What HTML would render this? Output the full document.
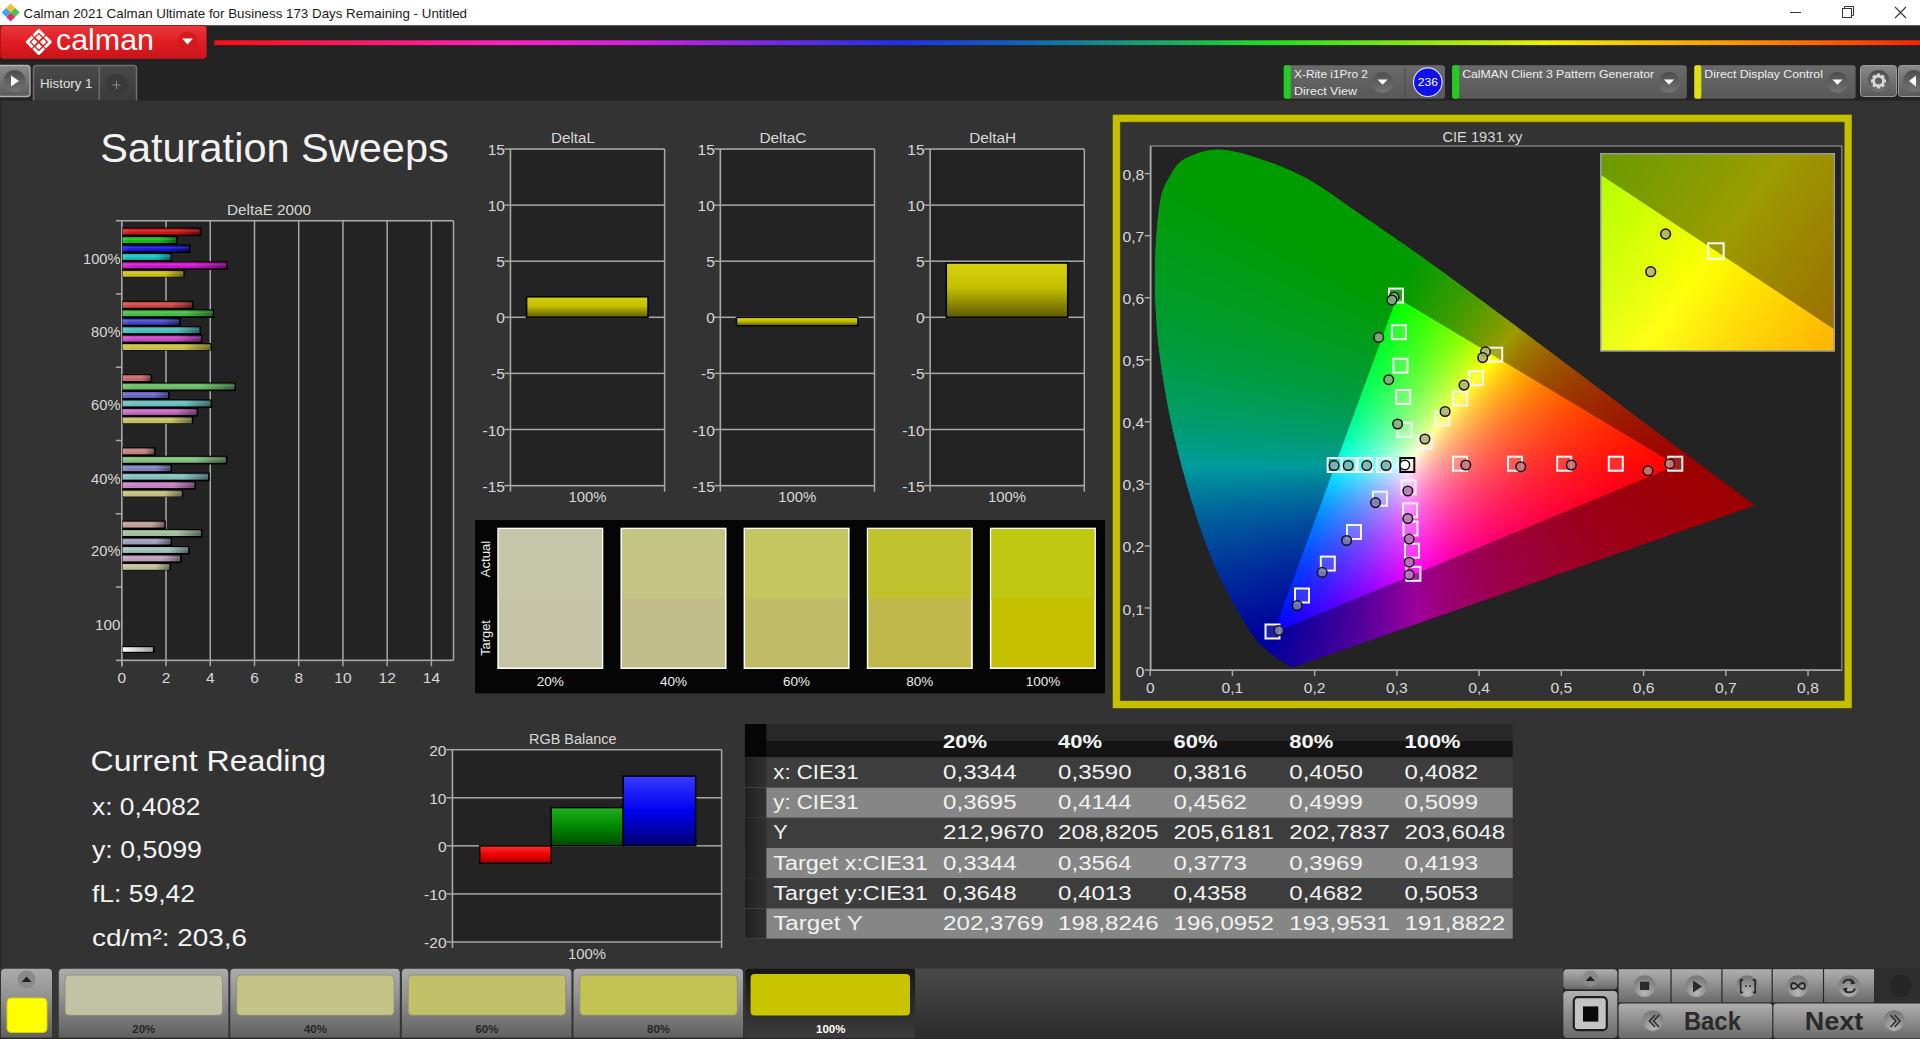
<!DOCTYPE html><html><head><meta charset="utf-8"><title>Calman</title><style>html,body{margin:0;padding:0;background:#333;}body{width:1920px;height:1039px;overflow:hidden;position:relative;font-family:"Liberation Sans",sans-serif;}svg{position:absolute;left:0;top:0;}canvas{position:absolute;}</style></head><body>
<svg width="1920" height="1039" viewBox="0 0 1920 1039" font-family="Liberation Sans, sans-serif">
<rect x="0" y="0" width="1920" height="1039" fill="#333333"/>
<rect x="0" y="0" width="1920" height="25.5" fill="#ffffff"/>
<rect x="0" y="25.5" width="1920" height="75" fill="#232323"/>
<g transform="translate(10.6,12.5)"><path d="M0,-9 L4.5,-4.5 L0,0 L-4.5,-4.5Z" fill="#f2c230"/><path d="M9,0 L4.5,4.5 L0,0 L4.5,-4.5Z" fill="#4cc04c"/><path d="M0,9 L-4.5,4.5 L0,0 L4.5,4.5Z" fill="#e0306a"/><path d="M-9,0 L-4.5,-4.5 L0,0 L-4.5,4.5Z" fill="#3aa8e8"/></g>
<text x="23.5" y="17.5" font-size="13" fill="#1a1a1a" text-anchor="start" textLength="443.5" lengthAdjust="spacingAndGlyphs">Calman 2021 Calman Ultimate for Business 173 Days Remaining  - Untitled</text>
<path d="M1790,12.5 H1801" stroke="#333" stroke-width="1"/>
<rect x="1842.5" y="8.5" width="9" height="9" fill="none" stroke="#333" stroke-width="1"/>
<path d="M1844.5,8.5 V6.5 H1853.5 V15.5 H1851.5" fill="none" stroke="#333" stroke-width="1"/>
<path d="M1895,7 L1906,18 M1906,7 L1895,18" stroke="#333" stroke-width="1.1"/>
<defs><linearGradient id="gRed" x1="0" y1="0" x2="0" y2="1"><stop offset="0" stop-color="#e8383c"/><stop offset="0.5" stop-color="#e01e22"/><stop offset="1" stop-color="#c8141a"/></linearGradient><linearGradient id="gRainbow" x1="0" y1="0" x2="1" y2="0"><stop offset="0" stop-color="#ff1010"/><stop offset="0.17" stop-color="#ff20c0"/><stop offset="0.25" stop-color="#d020e0"/><stop offset="0.40" stop-color="#2030f0"/><stop offset="0.47" stop-color="#1060c0"/><stop offset="0.62" stop-color="#20e020"/><stop offset="0.78" stop-color="#f0f000"/><stop offset="0.9" stop-color="#ff9000"/><stop offset="1" stop-color="#ff2000"/></linearGradient></defs>
<rect x="0.5" y="25.5" width="206" height="33" rx="3" fill="url(#gRed)"/>
<rect x="0.5" y="25.5" width="206" height="33" rx="3" fill="none" stroke="#b01418" stroke-width="1"/>
<g transform="translate(38.8,42)"><path d="M0,-11.5 L11.5,0 L0,11.5 L-11.5,0Z" fill="none" stroke="#ffffff" stroke-width="3" stroke-linejoin="round"/><path d="M0,-7.3 L2.9,-4.4 L0,-1.5 L-2.9,-4.4Z M0,7.3 L2.9,4.4 L0,1.5 L-2.9,4.4Z M-7.3,0 L-4.4,2.9 L-1.5,0 L-4.4,-2.9Z M7.3,0 L4.4,2.9 L1.5,0 L4.4,-2.9Z" fill="#ffffff" stroke="#ffffff" stroke-width="0.6" stroke-linejoin="round"/><path d="M-7.4,-7.4 L7.4,7.4 M7.4,-7.4 L-7.4,7.4" stroke="#d82024" stroke-width="1.3"/></g>
<text x="56" y="50" font-size="29" fill="#ffffff" textLength="98" lengthAdjust="spacingAndGlyphs">calman</text>
<circle cx="187.5" cy="41.5" r="10" fill="#d41a1e"/>
<path d="M182,38.5 H193 L187.5,44.5Z" fill="#ffffff"/>
<rect x="214.5" y="40.3" width="1706" height="4.8" fill="url(#gRainbow)"/>
<defs><linearGradient id="gBtnG" x1="0" y1="0" x2="0" y2="1"><stop offset="0" stop-color="#8a8a8a"/><stop offset="1" stop-color="#5a5a5a"/></linearGradient><linearGradient id="gTab" x1="0" y1="0" x2="0" y2="1"><stop offset="0" stop-color="#4a4a4a"/><stop offset="1" stop-color="#3a3a3a"/></linearGradient></defs>
<rect x="-3" y="65.5" width="33" height="31" rx="3" fill="url(#gBtnG)" stroke="#b0b0b0" stroke-width="1.3"/>
<circle cx="14.5" cy="81" r="11" fill="url(#gDrop)"/>
<path d="M11,75.5 L19,81 L11,86.5Z" fill="#ffffff"/>
<path d="M33.5,100.5 V68.5 Q33.5,65.5 36.5,65.5 H133.5 Q136.5,65.5 136.5,68.5 V100.5" fill="url(#gTab)" stroke="#6e6e6e" stroke-width="1.5"/>
<rect x="98.5" y="66" width="1.6" height="34" fill="#6a6a6a"/>
<text x="40" y="88" font-size="13.5" fill="#e0e0e0" text-anchor="start" textLength="52.5" lengthAdjust="spacingAndGlyphs">History 1</text>
<circle cx="116.5" cy="84.5" r="11" fill="#3a3a3a"/>
<path d="M112.5,85 H120.5 M116.5,81 V89" stroke="#888" stroke-width="1"/>
<defs><linearGradient id="gDev" x1="0" y1="0" x2="0" y2="1"><stop offset="0" stop-color="#6a6a6a"/><stop offset="1" stop-color="#585858"/></linearGradient><linearGradient id="gDrop" x1="0" y1="0" x2="0" y2="1"><stop offset="0" stop-color="#4c4c4c"/><stop offset="1" stop-color="#747474"/></linearGradient></defs>
<rect x="1283.8" y="65.3" width="161.20000000000005" height="33.5" rx="3" fill="url(#gDev)"/>
<rect x="1283.8" y="65.3" width="7" height="33.5" rx="2" fill="#22cc22"/>
<text x="1294" y="78.2" font-size="11" fill="#eeeeee" text-anchor="start" textLength="74" lengthAdjust="spacingAndGlyphs">X-Rite i1Pro 2</text>
<text x="1294" y="94.5" font-size="11" fill="#eeeeee" text-anchor="start" textLength="63" lengthAdjust="spacingAndGlyphs">Direct View</text>
<rect x="1404.5" y="68" width="1" height="30" fill="#4a4a4a"/>
<circle cx="1382.6" cy="82.5" r="10.5" fill="url(#gDrop)"/>
<path d="M1377.5,79.5 H1387.7 L1382.6,84.8Z" fill="#ffffff"/>
<circle cx="1427.8" cy="82.2" r="14.3" fill="#1010e8" stroke="#d8d8ff" stroke-width="1.2"/>
<text x="1427.8" y="86.2" font-size="11.5" fill="#ffffff" text-anchor="middle" textLength="20" lengthAdjust="spacingAndGlyphs">236</text>
<rect x="1452.2" y="65.3" width="234.5999999999999" height="33.5" rx="3" fill="url(#gDev)"/>
<rect x="1452.2" y="65.3" width="7" height="33.5" rx="2" fill="#22cc22"/>
<text x="1462.2" y="78.2" font-size="11" fill="#eeeeee" text-anchor="start" textLength="192" lengthAdjust="spacingAndGlyphs">CalMAN Client 3 Pattern Generator</text>
<circle cx="1669" cy="82.5" r="10.5" fill="url(#gDrop)"/>
<path d="M1663.9,79.5 H1674.1 L1669,84.8Z" fill="#ffffff"/>
<rect x="1694.3" y="65.3" width="161.29999999999995" height="33.5" rx="3" fill="url(#gDev)"/>
<rect x="1694.3" y="65.3" width="7" height="33.5" rx="2" fill="#e0e010"/>
<text x="1704.3" y="78.2" font-size="11" fill="#eeeeee" text-anchor="start" textLength="118.6" lengthAdjust="spacingAndGlyphs">Direct Display Control</text>
<circle cx="1837.5" cy="82.5" r="10.5" fill="url(#gDrop)"/>
<path d="M1832.4,79.5 H1842.6 L1837.5,84.8Z" fill="#ffffff"/>
<rect x="1860.5" y="65.5" width="36" height="31" rx="3" fill="url(#gBtnG)" stroke="#9a9a9a" stroke-width="1"/>
<circle cx="1878.5" cy="81" r="11" fill="url(#gDrop)"/>
<g transform="translate(1878.5,81)" fill="#d8d8d8"><rect x="-1.6" y="-7.5" width="3.2" height="4" transform="rotate(0)"/><rect x="-1.6" y="-7.5" width="3.2" height="4" transform="rotate(45)"/><rect x="-1.6" y="-7.5" width="3.2" height="4" transform="rotate(90)"/><rect x="-1.6" y="-7.5" width="3.2" height="4" transform="rotate(135)"/><rect x="-1.6" y="-7.5" width="3.2" height="4" transform="rotate(180)"/><rect x="-1.6" y="-7.5" width="3.2" height="4" transform="rotate(225)"/><rect x="-1.6" y="-7.5" width="3.2" height="4" transform="rotate(270)"/><rect x="-1.6" y="-7.5" width="3.2" height="4" transform="rotate(315)"/><circle r="5" fill="none" stroke="#d8d8d8" stroke-width="2.5"/></g>
<rect x="1898.5" y="65.5" width="30" height="31" rx="3" fill="url(#gBtnG)" stroke="#9a9a9a" stroke-width="1"/>
<circle cx="1914" cy="81" r="11" fill="url(#gDrop)"/>
<path d="M1916,75.5 L1909,81 L1916,86.5Z" fill="#ffffff"/>
<rect x="0" y="100.5" width="1.5" height="868" fill="#262626"/>
<text x="100.3" y="162.2" font-size="41" fill="#f2f2f2" text-anchor="start" textLength="348.5" lengthAdjust="spacingAndGlyphs">Saturation Sweeps</text>
<rect x="121.8" y="220.7" width="331.7" height="439.59999999999997" fill="#232323"/>
<rect x="165.28" y="220.7" width="1.5" height="439.59999999999997" fill="#a8a8a8"/>
<rect x="209.50" y="220.7" width="1.5" height="439.59999999999997" fill="#a8a8a8"/>
<rect x="253.73" y="220.7" width="1.5" height="439.59999999999997" fill="#a8a8a8"/>
<rect x="297.96" y="220.7" width="1.5" height="439.59999999999997" fill="#a8a8a8"/>
<rect x="342.18" y="220.7" width="1.5" height="439.59999999999997" fill="#a8a8a8"/>
<rect x="386.41" y="220.7" width="1.5" height="439.59999999999997" fill="#a8a8a8"/>
<rect x="430.64" y="220.7" width="1.5" height="439.59999999999997" fill="#a8a8a8"/>
<rect x="121.05" y="220.7" width="1.6" height="445.59999999999997" fill="#a8a8a8"/>
<rect x="452.75" y="220.7" width="1.5" height="439.59999999999997" fill="#a8a8a8"/>
<rect x="115.8" y="219.95" width="337.7" height="1.6" fill="#a8a8a8"/>
<rect x="115.8" y="659.55" width="337.7" height="1.6" fill="#a8a8a8"/>
<rect x="115.8" y="293.22" width="6" height="1.5" fill="#a8a8a8"/>
<rect x="115.8" y="366.48" width="6" height="1.5" fill="#a8a8a8"/>
<rect x="115.8" y="439.75" width="6" height="1.5" fill="#a8a8a8"/>
<rect x="115.8" y="513.02" width="6" height="1.5" fill="#a8a8a8"/>
<rect x="115.8" y="586.28" width="6" height="1.5" fill="#a8a8a8"/>
<rect x="121.05" y="660.3" width="1.5" height="6" fill="#a8a8a8"/>
<text x="121.8" y="683.4" font-size="15.5" fill="#d8d8d8" text-anchor="middle">0</text>
<rect x="165.28" y="660.3" width="1.5" height="6" fill="#a8a8a8"/>
<text x="166.0" y="683.4" font-size="15.5" fill="#d8d8d8" text-anchor="middle">2</text>
<rect x="209.50" y="660.3" width="1.5" height="6" fill="#a8a8a8"/>
<text x="210.3" y="683.4" font-size="15.5" fill="#d8d8d8" text-anchor="middle">4</text>
<rect x="253.73" y="660.3" width="1.5" height="6" fill="#a8a8a8"/>
<text x="254.5" y="683.4" font-size="15.5" fill="#d8d8d8" text-anchor="middle">6</text>
<rect x="297.96" y="660.3" width="1.5" height="6" fill="#a8a8a8"/>
<text x="298.7" y="683.4" font-size="15.5" fill="#d8d8d8" text-anchor="middle">8</text>
<rect x="342.18" y="660.3" width="1.5" height="6" fill="#a8a8a8"/>
<text x="342.9" y="683.4" font-size="15.5" fill="#d8d8d8" text-anchor="middle">10</text>
<rect x="386.41" y="660.3" width="1.5" height="6" fill="#a8a8a8"/>
<text x="387.2" y="683.4" font-size="15.5" fill="#d8d8d8" text-anchor="middle">12</text>
<rect x="430.64" y="660.3" width="1.5" height="6" fill="#a8a8a8"/>
<text x="431.4" y="683.4" font-size="15.5" fill="#d8d8d8" text-anchor="middle">14</text>
<text x="269" y="215" font-size="15" fill="#d8d8d8" text-anchor="middle" textLength="84" lengthAdjust="spacingAndGlyphs">DeltaE 2000</text>
<text x="120.5" y="263.75" font-size="15.5" fill="#d8d8d8" text-anchor="end" textLength="37.5" lengthAdjust="spacingAndGlyphs">100%</text>
<text x="120.5" y="336.5" font-size="15.5" fill="#d8d8d8" text-anchor="end" textLength="29.4" lengthAdjust="spacingAndGlyphs">80%</text>
<text x="120.5" y="409.9" font-size="15.5" fill="#d8d8d8" text-anchor="end" textLength="29.4" lengthAdjust="spacingAndGlyphs">60%</text>
<text x="120.5" y="483.8" font-size="15.5" fill="#d8d8d8" text-anchor="end" textLength="29.4" lengthAdjust="spacingAndGlyphs">40%</text>
<text x="120.5" y="555.6" font-size="15.5" fill="#d8d8d8" text-anchor="end" textLength="29.4" lengthAdjust="spacingAndGlyphs">20%</text>
<text x="120.5" y="630.3" font-size="15.5" fill="#d8d8d8" text-anchor="end" textLength="25.4" lengthAdjust="spacingAndGlyphs">100</text>
<defs><linearGradient id="b1" x1="0" y1="0" x2="1" y2="0"><stop offset="0" stop-color="rgb(208, 45, 45)"/><stop offset="0.12" stop-color="rgb(205, 20, 20)"/><stop offset="0.7" stop-color="rgb(205, 20, 20)"/><stop offset="1" stop-color="rgb(112, 11, 11)"/></linearGradient><linearGradient id="b2" x1="0" y1="0" x2="1" y2="0"><stop offset="0" stop-color="rgb(45, 190, 45)"/><stop offset="0.12" stop-color="rgb(20, 185, 20)"/><stop offset="0.7" stop-color="rgb(20, 185, 20)"/><stop offset="1" stop-color="rgb(11, 101, 11)"/></linearGradient><linearGradient id="b3" x1="0" y1="0" x2="1" y2="0"><stop offset="0" stop-color="rgb(45, 45, 208)"/><stop offset="0.12" stop-color="rgb(20, 20, 205)"/><stop offset="0.7" stop-color="rgb(20, 20, 205)"/><stop offset="1" stop-color="rgb(11, 11, 112)"/></linearGradient><linearGradient id="b4" x1="0" y1="0" x2="1" y2="0"><stop offset="0" stop-color="rgb(45, 195, 195)"/><stop offset="0.12" stop-color="rgb(20, 190, 190)"/><stop offset="0.7" stop-color="rgb(20, 190, 190)"/><stop offset="1" stop-color="rgb(11, 104, 104)"/></linearGradient><linearGradient id="b5" x1="0" y1="0" x2="1" y2="0"><stop offset="0" stop-color="rgb(204, 45, 204)"/><stop offset="0.12" stop-color="rgb(200, 20, 200)"/><stop offset="0.7" stop-color="rgb(200, 20, 200)"/><stop offset="1" stop-color="rgb(110, 11, 110)"/></linearGradient><linearGradient id="b6" x1="0" y1="0" x2="1" y2="0"><stop offset="0" stop-color="rgb(204, 195, 45)"/><stop offset="0.12" stop-color="rgb(200, 190, 20)"/><stop offset="0.7" stop-color="rgb(200, 190, 20)"/><stop offset="1" stop-color="rgb(110, 104, 11)"/></linearGradient><linearGradient id="b7" x1="0" y1="0" x2="1" y2="0"><stop offset="0" stop-color="rgb(204, 87, 86)"/><stop offset="0.12" stop-color="rgb(201, 68, 66)"/><stop offset="0.7" stop-color="rgb(201, 68, 66)"/><stop offset="1" stop-color="rgb(110, 37, 36)"/></linearGradient><linearGradient id="b8" x1="0" y1="0" x2="1" y2="0"><stop offset="0" stop-color="rgb(87, 191, 86)"/><stop offset="0.12" stop-color="rgb(68, 186, 66)"/><stop offset="0.7" stop-color="rgb(68, 186, 66)"/><stop offset="1" stop-color="rgb(37, 102, 36)"/></linearGradient><linearGradient id="b9" x1="0" y1="0" x2="1" y2="0"><stop offset="0" stop-color="rgb(87, 87, 203)"/><stop offset="0.12" stop-color="rgb(68, 68, 199)"/><stop offset="0.7" stop-color="rgb(68, 68, 199)"/><stop offset="1" stop-color="rgb(37, 37, 109)"/></linearGradient><linearGradient id="b10" x1="0" y1="0" x2="1" y2="0"><stop offset="0" stop-color="rgb(87, 195, 193)"/><stop offset="0.12" stop-color="rgb(68, 190, 188)"/><stop offset="0.7" stop-color="rgb(68, 190, 188)"/><stop offset="1" stop-color="rgb(37, 104, 103)"/></linearGradient><linearGradient id="b11" x1="0" y1="0" x2="1" y2="0"><stop offset="0" stop-color="rgb(201, 87, 200)"/><stop offset="0.12" stop-color="rgb(197, 68, 196)"/><stop offset="0.7" stop-color="rgb(197, 68, 196)"/><stop offset="1" stop-color="rgb(108, 37, 107)"/></linearGradient><linearGradient id="b12" x1="0" y1="0" x2="1" y2="0"><stop offset="0" stop-color="rgb(201, 195, 86)"/><stop offset="0.12" stop-color="rgb(197, 190, 66)"/><stop offset="0.7" stop-color="rgb(197, 190, 66)"/><stop offset="1" stop-color="rgb(108, 104, 36)"/></linearGradient><linearGradient id="b13" x1="0" y1="0" x2="1" y2="0"><stop offset="0" stop-color="rgb(202, 117, 115)"/><stop offset="0.12" stop-color="rgb(198, 102, 99)"/><stop offset="0.7" stop-color="rgb(198, 102, 99)"/><stop offset="1" stop-color="rgb(108, 56, 54)"/></linearGradient><linearGradient id="b14" x1="0" y1="0" x2="1" y2="0"><stop offset="0" stop-color="rgb(117, 192, 115)"/><stop offset="0.12" stop-color="rgb(102, 187, 99)"/><stop offset="0.7" stop-color="rgb(102, 187, 99)"/><stop offset="1" stop-color="rgb(56, 102, 54)"/></linearGradient><linearGradient id="b15" x1="0" y1="0" x2="1" y2="0"><stop offset="0" stop-color="rgb(117, 117, 199)"/><stop offset="0.12" stop-color="rgb(102, 102, 195)"/><stop offset="0.7" stop-color="rgb(102, 102, 195)"/><stop offset="1" stop-color="rgb(56, 56, 107)"/></linearGradient><linearGradient id="b16" x1="0" y1="0" x2="1" y2="0"><stop offset="0" stop-color="rgb(117, 195, 192)"/><stop offset="0.12" stop-color="rgb(102, 190, 187)"/><stop offset="0.7" stop-color="rgb(102, 190, 187)"/><stop offset="1" stop-color="rgb(56, 104, 102)"/></linearGradient><linearGradient id="b17" x1="0" y1="0" x2="1" y2="0"><stop offset="0" stop-color="rgb(199, 117, 196)"/><stop offset="0.12" stop-color="rgb(195, 102, 192)"/><stop offset="0.7" stop-color="rgb(195, 102, 192)"/><stop offset="1" stop-color="rgb(107, 56, 105)"/></linearGradient><linearGradient id="b18" x1="0" y1="0" x2="1" y2="0"><stop offset="0" stop-color="rgb(199, 195, 115)"/><stop offset="0.12" stop-color="rgb(195, 190, 99)"/><stop offset="0.7" stop-color="rgb(195, 190, 99)"/><stop offset="1" stop-color="rgb(107, 104, 54)"/></linearGradient><linearGradient id="b19" x1="0" y1="0" x2="1" y2="0"><stop offset="0" stop-color="rgb(199, 141, 138)"/><stop offset="0.12" stop-color="rgb(195, 129, 125)"/><stop offset="0.7" stop-color="rgb(195, 129, 125)"/><stop offset="1" stop-color="rgb(107, 70, 68)"/></linearGradient><linearGradient id="b20" x1="0" y1="0" x2="1" y2="0"><stop offset="0" stop-color="rgb(141, 193, 138)"/><stop offset="0.12" stop-color="rgb(129, 188, 125)"/><stop offset="0.7" stop-color="rgb(129, 188, 125)"/><stop offset="1" stop-color="rgb(70, 103, 68)"/></linearGradient><linearGradient id="b21" x1="0" y1="0" x2="1" y2="0"><stop offset="0" stop-color="rgb(141, 141, 196)"/><stop offset="0.12" stop-color="rgb(129, 129, 192)"/><stop offset="0.7" stop-color="rgb(129, 129, 192)"/><stop offset="1" stop-color="rgb(70, 70, 105)"/></linearGradient><linearGradient id="b22" x1="0" y1="0" x2="1" y2="0"><stop offset="0" stop-color="rgb(141, 195, 191)"/><stop offset="0.12" stop-color="rgb(129, 190, 186)"/><stop offset="0.7" stop-color="rgb(129, 190, 186)"/><stop offset="1" stop-color="rgb(70, 104, 102)"/></linearGradient><linearGradient id="b23" x1="0" y1="0" x2="1" y2="0"><stop offset="0" stop-color="rgb(198, 141, 195)"/><stop offset="0.12" stop-color="rgb(194, 129, 190)"/><stop offset="0.7" stop-color="rgb(194, 129, 190)"/><stop offset="1" stop-color="rgb(106, 70, 104)"/></linearGradient><linearGradient id="b24" x1="0" y1="0" x2="1" y2="0"><stop offset="0" stop-color="rgb(198, 195, 138)"/><stop offset="0.12" stop-color="rgb(194, 190, 125)"/><stop offset="0.7" stop-color="rgb(194, 190, 125)"/><stop offset="1" stop-color="rgb(106, 104, 68)"/></linearGradient><linearGradient id="b25" x1="0" y1="0" x2="1" y2="0"><stop offset="0" stop-color="rgb(197, 165, 160)"/><stop offset="0.12" stop-color="rgb(193, 156, 151)"/><stop offset="0.7" stop-color="rgb(193, 156, 151)"/><stop offset="1" stop-color="rgb(106, 85, 83)"/></linearGradient><linearGradient id="b26" x1="0" y1="0" x2="1" y2="0"><stop offset="0" stop-color="rgb(165, 194, 160)"/><stop offset="0.12" stop-color="rgb(156, 189, 151)"/><stop offset="0.7" stop-color="rgb(156, 189, 151)"/><stop offset="1" stop-color="rgb(85, 103, 83)"/></linearGradient><linearGradient id="b27" x1="0" y1="0" x2="1" y2="0"><stop offset="0" stop-color="rgb(165, 165, 193)"/><stop offset="0.12" stop-color="rgb(156, 156, 188)"/><stop offset="0.7" stop-color="rgb(156, 156, 188)"/><stop offset="1" stop-color="rgb(85, 85, 103)"/></linearGradient><linearGradient id="b28" x1="0" y1="0" x2="1" y2="0"><stop offset="0" stop-color="rgb(165, 195, 190)"/><stop offset="0.12" stop-color="rgb(156, 190, 185)"/><stop offset="0.7" stop-color="rgb(156, 190, 185)"/><stop offset="1" stop-color="rgb(85, 104, 101)"/></linearGradient><linearGradient id="b29" x1="0" y1="0" x2="1" y2="0"><stop offset="0" stop-color="rgb(196, 165, 192)"/><stop offset="0.12" stop-color="rgb(192, 156, 187)"/><stop offset="0.7" stop-color="rgb(192, 156, 187)"/><stop offset="1" stop-color="rgb(105, 85, 102)"/></linearGradient><linearGradient id="b30" x1="0" y1="0" x2="1" y2="0"><stop offset="0" stop-color="rgb(196, 195, 160)"/><stop offset="0.12" stop-color="rgb(192, 190, 151)"/><stop offset="0.7" stop-color="rgb(192, 190, 151)"/><stop offset="1" stop-color="rgb(105, 104, 83)"/></linearGradient><linearGradient id="bW" x1="0" y1="0" x2="1" y2="0"><stop offset="0" stop-color="#ffffff"/><stop offset="1" stop-color="#a0a0a0"/></linearGradient></defs>
<rect x="122.30" y="227.50" width="78.94" height="8.7" fill="#000"/><rect x="122.60" y="228.60" width="77.14" height="5.9" fill="url(#b1)"/><rect x="122.60" y="229.80" width="77.14" height="1.8" fill="#ffffff" opacity="0.14"/><rect x="122.30" y="235.95" width="55.06" height="8.7" fill="#000"/><rect x="122.60" y="237.05" width="53.26" height="5.9" fill="url(#b2)"/><rect x="122.60" y="238.25" width="53.26" height="1.8" fill="#ffffff" opacity="0.14"/><rect x="122.30" y="244.40" width="68.11" height="8.7" fill="#000"/><rect x="122.60" y="245.50" width="66.31" height="5.9" fill="url(#b3)"/><rect x="122.60" y="246.70" width="66.31" height="1.8" fill="#ffffff" opacity="0.14"/><rect x="122.30" y="252.85" width="49.76" height="8.7" fill="#000"/><rect x="122.60" y="253.95" width="47.96" height="5.9" fill="url(#b4)"/><rect x="122.60" y="255.15" width="47.96" height="1.8" fill="#ffffff" opacity="0.14"/><rect x="122.30" y="261.30" width="105.48" height="8.7" fill="#000"/><rect x="122.60" y="262.40" width="103.68" height="5.9" fill="url(#b5)"/><rect x="122.60" y="263.60" width="103.68" height="1.8" fill="#ffffff" opacity="0.14"/><rect x="122.30" y="269.75" width="62.58" height="7.5" fill="#000"/><rect x="122.60" y="270.85" width="60.78" height="5.9" fill="url(#b6)"/><rect x="122.60" y="272.05" width="60.78" height="1.8" fill="#ffffff" opacity="0.14"/><rect x="122.30" y="300.77" width="70.98" height="8.7" fill="#000"/><rect x="122.60" y="301.87" width="69.18" height="5.9" fill="url(#b7)"/><rect x="122.60" y="303.07" width="69.18" height="1.8" fill="#ffffff" opacity="0.14"/><rect x="122.30" y="309.22" width="91.77" height="8.7" fill="#000"/><rect x="122.60" y="310.32" width="89.97" height="5.9" fill="url(#b8)"/><rect x="122.60" y="311.52" width="89.97" height="1.8" fill="#ffffff" opacity="0.14"/><rect x="122.30" y="317.67" width="58.38" height="8.7" fill="#000"/><rect x="122.60" y="318.77" width="56.58" height="5.9" fill="url(#b9)"/><rect x="122.60" y="319.97" width="56.58" height="1.8" fill="#ffffff" opacity="0.14"/><rect x="122.30" y="326.12" width="78.72" height="8.7" fill="#000"/><rect x="122.60" y="327.22" width="76.92" height="5.9" fill="url(#b10)"/><rect x="122.60" y="328.42" width="76.92" height="1.8" fill="#ffffff" opacity="0.14"/><rect x="122.30" y="334.57" width="80.05" height="8.7" fill="#000"/><rect x="122.60" y="335.67" width="78.25" height="5.9" fill="url(#b11)"/><rect x="122.60" y="336.87" width="78.25" height="1.8" fill="#ffffff" opacity="0.14"/><rect x="122.30" y="343.02" width="89.78" height="7.5" fill="#000"/><rect x="122.60" y="344.12" width="87.98" height="5.9" fill="url(#b12)"/><rect x="122.60" y="345.32" width="87.98" height="1.8" fill="#ffffff" opacity="0.14"/><rect x="122.30" y="374.03" width="29.85" height="8.7" fill="#000"/><rect x="122.60" y="375.13" width="28.05" height="5.9" fill="url(#b13)"/><rect x="122.60" y="376.33" width="28.05" height="1.8" fill="#ffffff" opacity="0.14"/><rect x="122.30" y="382.48" width="113.66" height="8.7" fill="#000"/><rect x="122.60" y="383.58" width="111.86" height="5.9" fill="url(#b14)"/><rect x="122.60" y="384.78" width="111.86" height="1.8" fill="#ffffff" opacity="0.14"/><rect x="122.30" y="390.93" width="47.32" height="8.7" fill="#000"/><rect x="122.60" y="392.03" width="45.52" height="5.9" fill="url(#b15)"/><rect x="122.60" y="393.23" width="45.52" height="1.8" fill="#ffffff" opacity="0.14"/><rect x="122.30" y="399.38" width="89.78" height="8.7" fill="#000"/><rect x="122.60" y="400.48" width="87.98" height="5.9" fill="url(#b16)"/><rect x="122.60" y="401.68" width="87.98" height="1.8" fill="#ffffff" opacity="0.14"/><rect x="122.30" y="407.83" width="75.85" height="8.7" fill="#000"/><rect x="122.60" y="408.93" width="74.05" height="5.9" fill="url(#b17)"/><rect x="122.60" y="410.13" width="74.05" height="1.8" fill="#ffffff" opacity="0.14"/><rect x="122.30" y="416.28" width="70.98" height="7.5" fill="#000"/><rect x="122.60" y="417.38" width="69.18" height="5.9" fill="url(#b18)"/><rect x="122.60" y="418.58" width="69.18" height="1.8" fill="#ffffff" opacity="0.14"/><rect x="122.30" y="447.30" width="33.17" height="8.7" fill="#000"/><rect x="122.60" y="448.40" width="31.37" height="5.9" fill="url(#b19)"/><rect x="122.60" y="449.60" width="31.37" height="1.8" fill="#ffffff" opacity="0.14"/><rect x="122.30" y="455.75" width="105.04" height="8.7" fill="#000"/><rect x="122.60" y="456.85" width="103.24" height="5.9" fill="url(#b20)"/><rect x="122.60" y="458.05" width="103.24" height="1.8" fill="#ffffff" opacity="0.14"/><rect x="122.30" y="464.20" width="49.76" height="8.7" fill="#000"/><rect x="122.60" y="465.30" width="47.96" height="5.9" fill="url(#b21)"/><rect x="122.60" y="466.50" width="47.96" height="1.8" fill="#ffffff" opacity="0.14"/><rect x="122.30" y="472.65" width="87.35" height="8.7" fill="#000"/><rect x="122.60" y="473.75" width="85.55" height="5.9" fill="url(#b22)"/><rect x="122.60" y="474.95" width="85.55" height="1.8" fill="#ffffff" opacity="0.14"/><rect x="122.30" y="481.10" width="73.64" height="8.7" fill="#000"/><rect x="122.60" y="482.20" width="71.84" height="5.9" fill="url(#b23)"/><rect x="122.60" y="483.40" width="71.84" height="1.8" fill="#ffffff" opacity="0.14"/><rect x="122.30" y="489.55" width="61.03" height="7.5" fill="#000"/><rect x="122.60" y="490.65" width="59.23" height="5.9" fill="url(#b24)"/><rect x="122.60" y="491.85" width="59.23" height="1.8" fill="#ffffff" opacity="0.14"/><rect x="122.30" y="520.57" width="43.56" height="8.7" fill="#000"/><rect x="122.60" y="521.67" width="41.76" height="5.9" fill="url(#b25)"/><rect x="122.60" y="522.87" width="41.76" height="1.8" fill="#ffffff" opacity="0.14"/><rect x="122.30" y="529.02" width="80.05" height="8.7" fill="#000"/><rect x="122.60" y="530.12" width="78.25" height="5.9" fill="url(#b26)"/><rect x="122.60" y="531.32" width="78.25" height="1.8" fill="#ffffff" opacity="0.14"/><rect x="122.30" y="537.47" width="49.76" height="8.7" fill="#000"/><rect x="122.60" y="538.57" width="47.96" height="5.9" fill="url(#b27)"/><rect x="122.60" y="539.77" width="47.96" height="1.8" fill="#ffffff" opacity="0.14"/><rect x="122.30" y="545.92" width="67.45" height="8.7" fill="#000"/><rect x="122.60" y="547.02" width="65.65" height="5.9" fill="url(#b28)"/><rect x="122.60" y="548.22" width="65.65" height="1.8" fill="#ffffff" opacity="0.14"/><rect x="122.30" y="554.37" width="59.26" height="8.7" fill="#000"/><rect x="122.60" y="555.47" width="57.46" height="5.9" fill="url(#b29)"/><rect x="122.60" y="556.67" width="57.46" height="1.8" fill="#ffffff" opacity="0.14"/><rect x="122.30" y="562.82" width="48.65" height="7.5" fill="#000"/><rect x="122.60" y="563.92" width="46.85" height="5.9" fill="url(#b30)"/><rect x="122.60" y="565.12" width="46.85" height="1.8" fill="#ffffff" opacity="0.14"/>
<rect x="122.3" y="646" width="32.29" height="7" fill="#000"/>
<rect x="122.6" y="647.2" width="30.29" height="4.6" fill="url(#bW)"/>
<defs><linearGradient id="gYel" x1="0" y1="0" x2="0" y2="1"><stop offset="0" stop-color="#d6d20e"/><stop offset="0.45" stop-color="#c4c000"/><stop offset="1" stop-color="#5e5a00"/></linearGradient><linearGradient id="gYel2" x1="0" y1="0" x2="0" y2="1"><stop offset="0" stop-color="#d6d20e"/><stop offset="0.6" stop-color="#c4c000"/><stop offset="1" stop-color="#8a8600"/></linearGradient></defs>
<rect x="510.4" y="149.0" width="154.19999999999993" height="336.6" fill="#232323"/>
<rect x="504.4" y="428.75" width="160.19999999999993" height="1.5" fill="#a8a8a8"/>
<rect x="504.4" y="372.65" width="160.19999999999993" height="1.5" fill="#a8a8a8"/>
<rect x="504.4" y="316.55" width="160.19999999999993" height="1.5" fill="#a8a8a8"/>
<rect x="504.4" y="260.45" width="160.19999999999993" height="1.5" fill="#a8a8a8"/>
<rect x="504.4" y="204.35" width="160.19999999999993" height="1.5" fill="#a8a8a8"/>
<rect x="504.4" y="148.25" width="160.19999999999993" height="1.6" fill="#a8a8a8"/>
<rect x="504.4" y="484.85" width="160.19999999999993" height="1.6" fill="#a8a8a8"/>
<rect x="509.65" y="149.0" width="1.6" height="342.6" fill="#a8a8a8"/>
<rect x="663.8499999999999" y="149.0" width="1.5" height="342.6" fill="#a8a8a8"/>
<text x="504.9" y="155.0" font-size="15.5" fill="#d8d8d8" text-anchor="end">15</text>
<text x="504.9" y="211.1" font-size="15.5" fill="#d8d8d8" text-anchor="end">10</text>
<text x="504.9" y="267.2" font-size="15.5" fill="#d8d8d8" text-anchor="end">5</text>
<text x="504.9" y="323.3" font-size="15.5" fill="#d8d8d8" text-anchor="end">0</text>
<text x="504.9" y="379.4" font-size="15.5" fill="#d8d8d8" text-anchor="end">-5</text>
<text x="504.9" y="435.5" font-size="15.5" fill="#d8d8d8" text-anchor="end">-10</text>
<text x="504.9" y="491.6" font-size="15.5" fill="#d8d8d8" text-anchor="end">-15</text>
<text x="573.0" y="143.1" font-size="15.5" fill="#d8d8d8" text-anchor="middle" textLength="44" lengthAdjust="spacingAndGlyphs">DeltaL</text>
<text x="587.4" y="502.4" font-size="15.5" fill="#d8d8d8" text-anchor="middle" textLength="38" lengthAdjust="spacingAndGlyphs">100%</text>
<rect x="526.6" y="296.8" width="121.4" height="20.5" fill="url(#gYel)" stroke="#000" stroke-width="1.5"/>
<rect x="720.3" y="149.0" width="154.20000000000005" height="336.6" fill="#232323"/>
<rect x="714.3" y="428.75" width="160.20000000000005" height="1.5" fill="#a8a8a8"/>
<rect x="714.3" y="372.65" width="160.20000000000005" height="1.5" fill="#a8a8a8"/>
<rect x="714.3" y="316.55" width="160.20000000000005" height="1.5" fill="#a8a8a8"/>
<rect x="714.3" y="260.45" width="160.20000000000005" height="1.5" fill="#a8a8a8"/>
<rect x="714.3" y="204.35" width="160.20000000000005" height="1.5" fill="#a8a8a8"/>
<rect x="714.3" y="148.25" width="160.20000000000005" height="1.6" fill="#a8a8a8"/>
<rect x="714.3" y="484.85" width="160.20000000000005" height="1.6" fill="#a8a8a8"/>
<rect x="719.55" y="149.0" width="1.6" height="342.6" fill="#a8a8a8"/>
<rect x="873.75" y="149.0" width="1.5" height="342.6" fill="#a8a8a8"/>
<text x="714.8" y="155.0" font-size="15.5" fill="#d8d8d8" text-anchor="end">15</text>
<text x="714.8" y="211.1" font-size="15.5" fill="#d8d8d8" text-anchor="end">10</text>
<text x="714.8" y="267.2" font-size="15.5" fill="#d8d8d8" text-anchor="end">5</text>
<text x="714.8" y="323.3" font-size="15.5" fill="#d8d8d8" text-anchor="end">0</text>
<text x="714.8" y="379.4" font-size="15.5" fill="#d8d8d8" text-anchor="end">-5</text>
<text x="714.8" y="435.5" font-size="15.5" fill="#d8d8d8" text-anchor="end">-10</text>
<text x="714.8" y="491.6" font-size="15.5" fill="#d8d8d8" text-anchor="end">-15</text>
<text x="782.9" y="143.1" font-size="15.5" fill="#d8d8d8" text-anchor="middle" textLength="47" lengthAdjust="spacingAndGlyphs">DeltaC</text>
<text x="797.3" y="502.4" font-size="15.5" fill="#d8d8d8" text-anchor="middle" textLength="38" lengthAdjust="spacingAndGlyphs">100%</text>
<rect x="736.5" y="317.3" width="121.4" height="8.4" fill="url(#gYel)" stroke="#000" stroke-width="1.5"/>
<rect x="930.1" y="149.0" width="154.19999999999993" height="336.6" fill="#232323"/>
<rect x="924.1" y="428.75" width="160.19999999999993" height="1.5" fill="#a8a8a8"/>
<rect x="924.1" y="372.65" width="160.19999999999993" height="1.5" fill="#a8a8a8"/>
<rect x="924.1" y="316.55" width="160.19999999999993" height="1.5" fill="#a8a8a8"/>
<rect x="924.1" y="260.45" width="160.19999999999993" height="1.5" fill="#a8a8a8"/>
<rect x="924.1" y="204.35" width="160.19999999999993" height="1.5" fill="#a8a8a8"/>
<rect x="924.1" y="148.25" width="160.19999999999993" height="1.6" fill="#a8a8a8"/>
<rect x="924.1" y="484.85" width="160.19999999999993" height="1.6" fill="#a8a8a8"/>
<rect x="929.35" y="149.0" width="1.6" height="342.6" fill="#a8a8a8"/>
<rect x="1083.55" y="149.0" width="1.5" height="342.6" fill="#a8a8a8"/>
<text x="924.6" y="155.0" font-size="15.5" fill="#d8d8d8" text-anchor="end">15</text>
<text x="924.6" y="211.1" font-size="15.5" fill="#d8d8d8" text-anchor="end">10</text>
<text x="924.6" y="267.2" font-size="15.5" fill="#d8d8d8" text-anchor="end">5</text>
<text x="924.6" y="323.3" font-size="15.5" fill="#d8d8d8" text-anchor="end">0</text>
<text x="924.6" y="379.4" font-size="15.5" fill="#d8d8d8" text-anchor="end">-5</text>
<text x="924.6" y="435.5" font-size="15.5" fill="#d8d8d8" text-anchor="end">-10</text>
<text x="924.6" y="491.6" font-size="15.5" fill="#d8d8d8" text-anchor="end">-15</text>
<text x="992.7" y="143.1" font-size="15.5" fill="#d8d8d8" text-anchor="middle" textLength="47" lengthAdjust="spacingAndGlyphs">DeltaH</text>
<text x="1007.1" y="502.4" font-size="15.5" fill="#d8d8d8" text-anchor="middle" textLength="38" lengthAdjust="spacingAndGlyphs">100%</text>
<rect x="946.3" y="263.0" width="121.4" height="54.3" fill="url(#gYel)" stroke="#000" stroke-width="1.5"/>
<rect x="475" y="520" width="630" height="173.3" fill="#050505"/>
<rect x="497.3" y="527.7" width="106" height="141.3" fill="#ffffff"/>
<rect x="498.8" y="529.2" width="103" height="138.3" fill="#c4c3a6"/>
<rect x="498.8" y="529.2" width="103" height="69.1" fill="#c5c6a8"/>
<text x="550.3" y="685.7" font-size="13.5" fill="#f0f0f0" text-anchor="middle">20%</text>
<rect x="620.5" y="527.7" width="106" height="141.3" fill="#ffffff"/>
<rect x="622.0" y="529.2" width="103" height="138.3" fill="#c0bd88"/>
<rect x="622.0" y="529.2" width="103" height="69.1" fill="#c3c584"/>
<text x="673.5" y="685.7" font-size="13.5" fill="#f0f0f0" text-anchor="middle">40%</text>
<rect x="743.6" y="527.7" width="106" height="141.3" fill="#ffffff"/>
<rect x="745.1" y="529.2" width="103" height="138.3" fill="#c0bb66"/>
<rect x="745.1" y="529.2" width="103" height="69.1" fill="#c4c660"/>
<text x="796.6" y="685.7" font-size="13.5" fill="#f0f0f0" text-anchor="middle">60%</text>
<rect x="866.8" y="527.7" width="106" height="141.3" fill="#ffffff"/>
<rect x="868.2" y="529.2" width="103" height="138.3" fill="#c0b84a"/>
<rect x="868.2" y="529.2" width="103" height="69.1" fill="#c0c22e"/>
<text x="919.8" y="685.7" font-size="13.5" fill="#f0f0f0" text-anchor="middle">80%</text>
<rect x="989.9" y="527.7" width="106" height="141.3" fill="#ffffff"/>
<rect x="991.4" y="529.2" width="103" height="138.3" fill="#c4c000"/>
<rect x="991.4" y="529.2" width="103" height="69.1" fill="#c0c812"/>
<text x="1042.9" y="685.7" font-size="13.5" fill="#f0f0f0" text-anchor="middle">100%</text>
<text transform="translate(490,559) rotate(-90)" font-size="13.5" fill="#f0f0f0" text-anchor="middle" textLength="36.6" lengthAdjust="spacingAndGlyphs">Actual</text>
<text transform="translate(490,638) rotate(-90)" font-size="13.5" fill="#f0f0f0" text-anchor="middle" textLength="35.7" lengthAdjust="spacingAndGlyphs">Target</text>
<rect x="1116.4" y="118.3" width="731.7" height="586.2" fill="none" stroke="#c4c000" stroke-width="7.8"/>
<rect x="1112.5" y="114.4" width="739.5" height="594" fill="none" stroke="#3a3600" stroke-width="0.8" opacity="0.6"/>
<rect x="1120.3" y="122.2" width="723.9" height="578.4" fill="none" stroke="#3a3600" stroke-width="0.8" opacity="0.6"/>
<rect x="1150.7" y="146.5" width="690.5999999999999" height="523.5" fill="#232323"/>
<text x="1482.4" y="141.8" font-size="15.5" fill="#d8d8d8" text-anchor="middle" textLength="80" lengthAdjust="spacingAndGlyphs">CIE 1931 xy</text>
<defs><linearGradient id="f1" gradientUnits="userSpaceOnUse" x1="1199.9" y1="0" x2="1238.0" y2="0"><stop offset="0.000" stop-color="#009b00"/><stop offset="1.000" stop-color="#009b00"/></linearGradient><linearGradient id="f2" gradientUnits="userSpaceOnUse" x1="1184.6" y1="0" x2="1259.0" y2="0"><stop offset="0.000" stop-color="#009b00"/><stop offset="0.333" stop-color="#009b00"/><stop offset="0.667" stop-color="#009b00"/><stop offset="1.000" stop-color="#009b00"/></linearGradient><linearGradient id="f3" gradientUnits="userSpaceOnUse" x1="1176.0" y1="0" x2="1276.2" y2="0"><stop offset="0.000" stop-color="#009b00"/><stop offset="0.250" stop-color="#009b00"/><stop offset="0.500" stop-color="#009b00"/><stop offset="0.750" stop-color="#009b00"/><stop offset="1.000" stop-color="#009b00"/></linearGradient><linearGradient id="f4" gradientUnits="userSpaceOnUse" x1="1171.7" y1="0" x2="1290.9" y2="0"><stop offset="0.000" stop-color="#009b00"/><stop offset="0.200" stop-color="#009b00"/><stop offset="0.400" stop-color="#009b00"/><stop offset="0.600" stop-color="#009b00"/><stop offset="0.800" stop-color="#009b00"/><stop offset="1.000" stop-color="#009b00"/></linearGradient><linearGradient id="f5" gradientUnits="userSpaceOnUse" x1="1168.2" y1="0" x2="1303.7" y2="0"><stop offset="0.000" stop-color="#009b02"/><stop offset="0.167" stop-color="#009b00"/><stop offset="0.333" stop-color="#009b00"/><stop offset="0.500" stop-color="#009b00"/><stop offset="0.667" stop-color="#009b00"/><stop offset="0.833" stop-color="#009b00"/><stop offset="1.000" stop-color="#009b00"/></linearGradient><linearGradient id="f6" gradientUnits="userSpaceOnUse" x1="1164.6" y1="0" x2="1314.7" y2="0"><stop offset="0.000" stop-color="#009b04"/><stop offset="0.167" stop-color="#009b01"/><stop offset="0.333" stop-color="#009b00"/><stop offset="0.500" stop-color="#009b00"/><stop offset="0.667" stop-color="#009b00"/><stop offset="0.833" stop-color="#009b00"/><stop offset="1.000" stop-color="#009b00"/></linearGradient><linearGradient id="f7" gradientUnits="userSpaceOnUse" x1="1161.8" y1="0" x2="1324.2" y2="0"><stop offset="0.000" stop-color="#009b06"/><stop offset="0.143" stop-color="#009b03"/><stop offset="0.286" stop-color="#009b00"/><stop offset="0.429" stop-color="#009b00"/><stop offset="0.571" stop-color="#009b00"/><stop offset="0.714" stop-color="#009b00"/><stop offset="0.857" stop-color="#009b00"/><stop offset="1.000" stop-color="#009b00"/></linearGradient><linearGradient id="f8" gradientUnits="userSpaceOnUse" x1="1159.9" y1="0" x2="1333.1" y2="0"><stop offset="0.000" stop-color="#009b07"/><stop offset="0.143" stop-color="#009b04"/><stop offset="0.286" stop-color="#009b01"/><stop offset="0.429" stop-color="#009b00"/><stop offset="0.571" stop-color="#009b00"/><stop offset="0.714" stop-color="#009b00"/><stop offset="0.857" stop-color="#009b00"/><stop offset="1.000" stop-color="#009b00"/></linearGradient><linearGradient id="f9" gradientUnits="userSpaceOnUse" x1="1158.5" y1="0" x2="1341.6" y2="0"><stop offset="0.000" stop-color="#009b09"/><stop offset="0.125" stop-color="#009b06"/><stop offset="0.250" stop-color="#009b03"/><stop offset="0.375" stop-color="#009b00"/><stop offset="0.500" stop-color="#009b00"/><stop offset="0.625" stop-color="#009b00"/><stop offset="0.750" stop-color="#009b00"/><stop offset="0.875" stop-color="#009b00"/><stop offset="1.000" stop-color="#009b00"/></linearGradient><linearGradient id="f10" gradientUnits="userSpaceOnUse" x1="1157.5" y1="0" x2="1350.1" y2="0"><stop offset="0.000" stop-color="#009b0a"/><stop offset="0.125" stop-color="#009b07"/><stop offset="0.250" stop-color="#009b04"/><stop offset="0.375" stop-color="#009b01"/><stop offset="0.500" stop-color="#009b00"/><stop offset="0.625" stop-color="#009b00"/><stop offset="0.750" stop-color="#009b00"/><stop offset="0.875" stop-color="#009b00"/><stop offset="1.000" stop-color="#009b00"/></linearGradient><linearGradient id="f11" gradientUnits="userSpaceOnUse" x1="1156.7" y1="0" x2="1358.7" y2="0"><stop offset="0.000" stop-color="#009b0c"/><stop offset="0.111" stop-color="#009b09"/><stop offset="0.222" stop-color="#009b06"/><stop offset="0.333" stop-color="#009b03"/><stop offset="0.444" stop-color="#009b00"/><stop offset="0.556" stop-color="#009b00"/><stop offset="0.667" stop-color="#009b00"/><stop offset="0.778" stop-color="#009b00"/><stop offset="0.889" stop-color="#009b00"/><stop offset="1.000" stop-color="#009b00"/></linearGradient><linearGradient id="f12" gradientUnits="userSpaceOnUse" x1="1156.0" y1="0" x2="1367.6" y2="0"><stop offset="0.000" stop-color="#009b0e"/><stop offset="0.111" stop-color="#009b0b"/><stop offset="0.222" stop-color="#009b08"/><stop offset="0.333" stop-color="#009b04"/><stop offset="0.444" stop-color="#009b01"/><stop offset="0.556" stop-color="#009b00"/><stop offset="0.667" stop-color="#009b00"/><stop offset="0.778" stop-color="#009b00"/><stop offset="0.889" stop-color="#009b00"/><stop offset="1.000" stop-color="#009b00"/></linearGradient><linearGradient id="f13" gradientUnits="userSpaceOnUse" x1="1155.4" y1="0" x2="1376.4" y2="0"><stop offset="0.000" stop-color="#009b0f"/><stop offset="0.100" stop-color="#009b0c"/><stop offset="0.200" stop-color="#009b0a"/><stop offset="0.300" stop-color="#009b06"/><stop offset="0.400" stop-color="#009b03"/><stop offset="0.500" stop-color="#009b00"/><stop offset="0.600" stop-color="#009b00"/><stop offset="0.700" stop-color="#009b00"/><stop offset="0.800" stop-color="#009b00"/><stop offset="0.900" stop-color="#009b00"/><stop offset="1.000" stop-color="#009b00"/></linearGradient><linearGradient id="f14" gradientUnits="userSpaceOnUse" x1="1154.8" y1="0" x2="1385.1" y2="0"><stop offset="0.000" stop-color="#009b11"/><stop offset="0.100" stop-color="#009b0e"/><stop offset="0.200" stop-color="#009b0b"/><stop offset="0.300" stop-color="#009b08"/><stop offset="0.400" stop-color="#009b04"/><stop offset="0.500" stop-color="#009b01"/><stop offset="0.600" stop-color="#009b00"/><stop offset="0.700" stop-color="#009b00"/><stop offset="0.800" stop-color="#009b00"/><stop offset="0.900" stop-color="#009b00"/><stop offset="1.000" stop-color="#009b00"/></linearGradient><linearGradient id="f15" gradientUnits="userSpaceOnUse" x1="1154.4" y1="0" x2="1393.8" y2="0"><stop offset="0.000" stop-color="#009b13"/><stop offset="0.100" stop-color="#009b10"/><stop offset="0.200" stop-color="#009b0c"/><stop offset="0.300" stop-color="#009b09"/><stop offset="0.400" stop-color="#009b06"/><stop offset="0.500" stop-color="#009b02"/><stop offset="0.600" stop-color="#009b00"/><stop offset="0.700" stop-color="#009b00"/><stop offset="0.800" stop-color="#009b00"/><stop offset="0.900" stop-color="#009b00"/><stop offset="1.000" stop-color="#009b00"/></linearGradient><linearGradient id="f16" gradientUnits="userSpaceOnUse" x1="1154.0" y1="0" x2="1402.5" y2="0"><stop offset="0.000" stop-color="#009b14"/><stop offset="0.091" stop-color="#009b12"/><stop offset="0.182" stop-color="#009b0f"/><stop offset="0.273" stop-color="#009b0b"/><stop offset="0.364" stop-color="#009b08"/><stop offset="0.455" stop-color="#009b05"/><stop offset="0.545" stop-color="#009b01"/><stop offset="0.636" stop-color="#009b00"/><stop offset="0.727" stop-color="#009b00"/><stop offset="0.818" stop-color="#009b00"/><stop offset="0.909" stop-color="#009b00"/><stop offset="1.000" stop-color="#009b00"/></linearGradient><linearGradient id="f17" gradientUnits="userSpaceOnUse" x1="1153.7" y1="0" x2="1411.1" y2="0"><stop offset="0.000" stop-color="#009b16"/><stop offset="0.091" stop-color="#009b13"/><stop offset="0.182" stop-color="#009b10"/><stop offset="0.273" stop-color="#009b0d"/><stop offset="0.364" stop-color="#009b09"/><stop offset="0.455" stop-color="#009b06"/><stop offset="0.545" stop-color="#009b02"/><stop offset="0.636" stop-color="#009b00"/><stop offset="0.727" stop-color="#009b00"/><stop offset="0.818" stop-color="#009b00"/><stop offset="0.909" stop-color="#009b00"/><stop offset="1.000" stop-color="#009b00"/></linearGradient><linearGradient id="f18" gradientUnits="userSpaceOnUse" x1="1153.4" y1="0" x2="1419.5" y2="0"><stop offset="0.000" stop-color="#009b18"/><stop offset="0.083" stop-color="#009b15"/><stop offset="0.167" stop-color="#009b12"/><stop offset="0.250" stop-color="#009b0f"/><stop offset="0.333" stop-color="#009b0c"/><stop offset="0.417" stop-color="#009b09"/><stop offset="0.500" stop-color="#009b05"/><stop offset="0.583" stop-color="#009b01"/><stop offset="0.667" stop-color="#009b00"/><stop offset="0.750" stop-color="#009b00"/><stop offset="0.833" stop-color="#009b00"/><stop offset="0.917" stop-color="#009b00"/><stop offset="1.000" stop-color="#049b00"/></linearGradient><linearGradient id="f19" gradientUnits="userSpaceOnUse" x1="1153.3" y1="0" x2="1427.9" y2="0"><stop offset="0.000" stop-color="#009b1a"/><stop offset="0.083" stop-color="#009b17"/><stop offset="0.167" stop-color="#009b14"/><stop offset="0.250" stop-color="#009b11"/><stop offset="0.333" stop-color="#009b0d"/><stop offset="0.417" stop-color="#009b0a"/><stop offset="0.500" stop-color="#009b06"/><stop offset="0.583" stop-color="#009b02"/><stop offset="0.667" stop-color="#009b00"/><stop offset="0.750" stop-color="#009b00"/><stop offset="0.833" stop-color="#009b00"/><stop offset="0.917" stop-color="#009b00"/><stop offset="1.000" stop-color="#0c9b00"/></linearGradient><linearGradient id="f20" gradientUnits="userSpaceOnUse" x1="1153.1" y1="0" x2="1436.3" y2="0"><stop offset="0.000" stop-color="#009b1c"/><stop offset="0.083" stop-color="#009b19"/><stop offset="0.167" stop-color="#009b16"/><stop offset="0.250" stop-color="#009b12"/><stop offset="0.333" stop-color="#009b0f"/><stop offset="0.417" stop-color="#009b0b"/><stop offset="0.500" stop-color="#009b07"/><stop offset="0.583" stop-color="#009b03"/><stop offset="0.667" stop-color="#009b00"/><stop offset="0.750" stop-color="#009b00"/><stop offset="0.833" stop-color="#009b00"/><stop offset="0.917" stop-color="#029b00"/><stop offset="1.000" stop-color="#159b00"/></linearGradient><linearGradient id="f21" gradientUnits="userSpaceOnUse" x1="1153.1" y1="0" x2="1444.7" y2="0"><stop offset="0.000" stop-color="#009b1e"/><stop offset="0.077" stop-color="#009b1b"/><stop offset="0.154" stop-color="#009b18"/><stop offset="0.231" stop-color="#009b15"/><stop offset="0.308" stop-color="#009b12"/><stop offset="0.385" stop-color="#009b0e"/><stop offset="0.462" stop-color="#009b0a"/><stop offset="0.538" stop-color="#009b07"/><stop offset="0.615" stop-color="#009b03"/><stop offset="0.692" stop-color="#009b00"/><stop offset="0.769" stop-color="#009b00"/><stop offset="0.846" stop-color="#009b00"/><stop offset="0.923" stop-color="#0b9b00"/><stop offset="1.000" stop-color="#1e9b00"/></linearGradient><linearGradient id="f22" gradientUnits="userSpaceOnUse" x1="1153.1" y1="0" x2="1452.9" y2="0"><stop offset="0.000" stop-color="#009b20"/><stop offset="0.077" stop-color="#009b1d"/><stop offset="0.154" stop-color="#009b1a"/><stop offset="0.231" stop-color="#009b17"/><stop offset="0.308" stop-color="#009b13"/><stop offset="0.385" stop-color="#009b10"/><stop offset="0.462" stop-color="#009b0c"/><stop offset="0.538" stop-color="#009b08"/><stop offset="0.615" stop-color="#009b04"/><stop offset="0.692" stop-color="#009b00"/><stop offset="0.769" stop-color="#009b00"/><stop offset="0.846" stop-color="#019b00"/><stop offset="0.923" stop-color="#149b00"/><stop offset="1.000" stop-color="#289b00"/></linearGradient><linearGradient id="f23" gradientUnits="userSpaceOnUse" x1="1153.1" y1="0" x2="1461.0" y2="0"><stop offset="0.000" stop-color="#009b22"/><stop offset="0.077" stop-color="#009b1f"/><stop offset="0.154" stop-color="#009b1c"/><stop offset="0.231" stop-color="#009b18"/><stop offset="0.308" stop-color="#009b15"/><stop offset="0.385" stop-color="#009b11"/><stop offset="0.462" stop-color="#009b0d"/><stop offset="0.538" stop-color="#009b09"/><stop offset="0.615" stop-color="#009b05"/><stop offset="0.692" stop-color="#009b00"/><stop offset="0.769" stop-color="#009b00"/><stop offset="0.846" stop-color="#089b00"/><stop offset="0.923" stop-color="#1c9b00"/><stop offset="1.000" stop-color="#329b00"/></linearGradient><linearGradient id="f24" gradientUnits="userSpaceOnUse" x1="1153.1" y1="0" x2="1469.2" y2="0"><stop offset="0.000" stop-color="#009b24"/><stop offset="0.071" stop-color="#009b21"/><stop offset="0.143" stop-color="#009b1e"/><stop offset="0.214" stop-color="#009b1b"/><stop offset="0.286" stop-color="#009b18"/><stop offset="0.357" stop-color="#009b14"/><stop offset="0.429" stop-color="#009b11"/><stop offset="0.500" stop-color="#009b0d"/><stop offset="0.571" stop-color="#009b09"/><stop offset="0.643" stop-color="#009b04"/><stop offset="0.714" stop-color="#009b00"/><stop offset="0.786" stop-color="#009b00"/><stop offset="0.857" stop-color="#139b00"/><stop offset="0.929" stop-color="#279b00"/><stop offset="1.000" stop-color="#3d9b00"/></linearGradient><linearGradient id="f25" gradientUnits="userSpaceOnUse" x1="1153.2" y1="0" x2="1477.3" y2="0"><stop offset="0.000" stop-color="#009b26"/><stop offset="0.071" stop-color="#009b23"/><stop offset="0.143" stop-color="#009b20"/><stop offset="0.214" stop-color="#009b1d"/><stop offset="0.286" stop-color="#009b1a"/><stop offset="0.357" stop-color="#009b16"/><stop offset="0.429" stop-color="#009b12"/><stop offset="0.500" stop-color="#009b0e"/><stop offset="0.571" stop-color="#009b0a"/><stop offset="0.643" stop-color="#009b05"/><stop offset="0.714" stop-color="#009b00"/><stop offset="0.786" stop-color="#079b00"/><stop offset="0.857" stop-color="#1c9b00"/><stop offset="0.929" stop-color="#329b00"/><stop offset="1.000" stop-color="#499b00"/></linearGradient><linearGradient id="f26" gradientUnits="userSpaceOnUse" x1="1153.3" y1="0" x2="1485.4" y2="0"><stop offset="0.000" stop-color="#009b29"/><stop offset="0.067" stop-color="#009b26"/><stop offset="0.133" stop-color="#009b23"/><stop offset="0.200" stop-color="#009b20"/><stop offset="0.267" stop-color="#009b1d"/><stop offset="0.333" stop-color="#009b19"/><stop offset="0.400" stop-color="#009b16"/><stop offset="0.467" stop-color="#009b12"/><stop offset="0.533" stop-color="#009b0e"/><stop offset="0.600" stop-color="#009b09"/><stop offset="0.667" stop-color="#009b05"/><stop offset="0.733" stop-color="#009b00"/><stop offset="0.800" stop-color="#139b00"/><stop offset="0.867" stop-color="#289b00"/><stop offset="0.933" stop-color="#3e9b00"/><stop offset="1.000" stop-color="#569b00"/></linearGradient><linearGradient id="f27" gradientUnits="userSpaceOnUse" x1="1393.3" y1="0" x2="1406.1" y2="0"><stop offset="0.000" stop-color="#00ff02"/><stop offset="1.000" stop-color="#0dff00"/></linearGradient><linearGradient id="f28" gradientUnits="userSpaceOnUse" x1="1153.5" y1="0" x2="1493.5" y2="0"><stop offset="0.000" stop-color="#009b2b"/><stop offset="0.067" stop-color="#009b28"/><stop offset="0.133" stop-color="#009b25"/><stop offset="0.200" stop-color="#009b22"/><stop offset="0.267" stop-color="#009b1f"/><stop offset="0.333" stop-color="#009b1b"/><stop offset="0.400" stop-color="#009b17"/><stop offset="0.467" stop-color="#009b13"/><stop offset="0.533" stop-color="#009b0f"/><stop offset="0.600" stop-color="#009b0b"/><stop offset="0.667" stop-color="#009b06"/><stop offset="0.733" stop-color="#079b01"/><stop offset="0.800" stop-color="#1c9b00"/><stop offset="0.867" stop-color="#329b00"/><stop offset="0.933" stop-color="#4a9b00"/><stop offset="1.000" stop-color="#649b00"/></linearGradient><linearGradient id="f29" gradientUnits="userSpaceOnUse" x1="1391.1" y1="0" x2="1416.1" y2="0"><stop offset="0.000" stop-color="#00ff06"/><stop offset="1.000" stop-color="#1fff00"/></linearGradient><linearGradient id="f30" gradientUnits="userSpaceOnUse" x1="1153.7" y1="0" x2="1501.5" y2="0"><stop offset="0.000" stop-color="#009b2d"/><stop offset="0.067" stop-color="#009b2a"/><stop offset="0.133" stop-color="#009b27"/><stop offset="0.200" stop-color="#009b24"/><stop offset="0.267" stop-color="#009b21"/><stop offset="0.333" stop-color="#009b1d"/><stop offset="0.400" stop-color="#009b19"/><stop offset="0.467" stop-color="#009b15"/><stop offset="0.533" stop-color="#009b11"/><stop offset="0.600" stop-color="#009b0c"/><stop offset="0.667" stop-color="#009b07"/><stop offset="0.733" stop-color="#0f9b02"/><stop offset="0.800" stop-color="#259b00"/><stop offset="0.867" stop-color="#3d9b00"/><stop offset="0.933" stop-color="#579b00"/><stop offset="1.000" stop-color="#739b00"/></linearGradient><linearGradient id="f31" gradientUnits="userSpaceOnUse" x1="1388.9" y1="0" x2="1426.1" y2="0"><stop offset="0.000" stop-color="#00ff0b"/><stop offset="1.000" stop-color="#33ff00"/></linearGradient><linearGradient id="f32" gradientUnits="userSpaceOnUse" x1="1154.0" y1="0" x2="1509.6" y2="0"><stop offset="0.000" stop-color="#009b30"/><stop offset="0.062" stop-color="#009b2d"/><stop offset="0.125" stop-color="#009b2a"/><stop offset="0.188" stop-color="#009b27"/><stop offset="0.250" stop-color="#009b24"/><stop offset="0.312" stop-color="#009b20"/><stop offset="0.375" stop-color="#009b1d"/><stop offset="0.438" stop-color="#009b19"/><stop offset="0.500" stop-color="#009b15"/><stop offset="0.562" stop-color="#009b11"/><stop offset="0.625" stop-color="#009b0c"/><stop offset="0.688" stop-color="#079b07"/><stop offset="0.750" stop-color="#1d9b02"/><stop offset="0.812" stop-color="#339b00"/><stop offset="0.875" stop-color="#4c9b00"/><stop offset="0.938" stop-color="#669b00"/><stop offset="1.000" stop-color="#839b00"/></linearGradient><linearGradient id="f33" gradientUnits="userSpaceOnUse" x1="1386.7" y1="0" x2="1436.1" y2="0"><stop offset="0.000" stop-color="#00ff10"/><stop offset="0.500" stop-color="#20ff07"/><stop offset="1.000" stop-color="#49ff00"/></linearGradient><linearGradient id="f34" gradientUnits="userSpaceOnUse" x1="1154.4" y1="0" x2="1517.6" y2="0"><stop offset="0.000" stop-color="#009b32"/><stop offset="0.062" stop-color="#009b2f"/><stop offset="0.125" stop-color="#009b2d"/><stop offset="0.188" stop-color="#009b29"/><stop offset="0.250" stop-color="#009b26"/><stop offset="0.312" stop-color="#009b23"/><stop offset="0.375" stop-color="#009b1f"/><stop offset="0.438" stop-color="#009b1b"/><stop offset="0.500" stop-color="#009b17"/><stop offset="0.562" stop-color="#009b12"/><stop offset="0.625" stop-color="#009b0d"/><stop offset="0.688" stop-color="#0f9b08"/><stop offset="0.750" stop-color="#269b03"/><stop offset="0.812" stop-color="#3e9b00"/><stop offset="0.875" stop-color="#599b00"/><stop offset="0.938" stop-color="#759b00"/><stop offset="1.000" stop-color="#959b00"/></linearGradient><linearGradient id="f35" gradientUnits="userSpaceOnUse" x1="1384.5" y1="0" x2="1446.1" y2="0"><stop offset="0.000" stop-color="#00ff15"/><stop offset="0.500" stop-color="#2bff09"/><stop offset="1.000" stop-color="#60ff00"/></linearGradient><linearGradient id="f36" gradientUnits="userSpaceOnUse" x1="1154.8" y1="0" x2="1525.7" y2="0"><stop offset="0.000" stop-color="#009b35"/><stop offset="0.062" stop-color="#009b32"/><stop offset="0.125" stop-color="#009b2f"/><stop offset="0.188" stop-color="#009b2c"/><stop offset="0.250" stop-color="#009b29"/><stop offset="0.312" stop-color="#009b25"/><stop offset="0.375" stop-color="#009b21"/><stop offset="0.438" stop-color="#009b1d"/><stop offset="0.500" stop-color="#009b19"/><stop offset="0.562" stop-color="#009b14"/><stop offset="0.625" stop-color="#019b0f"/><stop offset="0.688" stop-color="#179b0a"/><stop offset="0.750" stop-color="#2f9b04"/><stop offset="0.812" stop-color="#4a9b00"/><stop offset="0.875" stop-color="#669b00"/><stop offset="0.938" stop-color="#869b00"/><stop offset="1.000" stop-color="#9b8f00"/></linearGradient><linearGradient id="f37" gradientUnits="userSpaceOnUse" x1="1382.3" y1="0" x2="1456.1" y2="0"><stop offset="0.000" stop-color="#00ff1b"/><stop offset="0.333" stop-color="#21ff11"/><stop offset="0.667" stop-color="#4cff07"/><stop offset="1.000" stop-color="#79ff00"/></linearGradient><linearGradient id="f38" gradientUnits="userSpaceOnUse" x1="1155.3" y1="0" x2="1533.7" y2="0"><stop offset="0.000" stop-color="#009b38"/><stop offset="0.059" stop-color="#009b35"/><stop offset="0.118" stop-color="#009b32"/><stop offset="0.176" stop-color="#009b2f"/><stop offset="0.235" stop-color="#009b2c"/><stop offset="0.294" stop-color="#009b29"/><stop offset="0.353" stop-color="#009b25"/><stop offset="0.412" stop-color="#009b21"/><stop offset="0.471" stop-color="#009b1d"/><stop offset="0.529" stop-color="#009b19"/><stop offset="0.588" stop-color="#009b14"/><stop offset="0.647" stop-color="#109b0f"/><stop offset="0.706" stop-color="#279b09"/><stop offset="0.765" stop-color="#409b04"/><stop offset="0.824" stop-color="#5c9b00"/><stop offset="0.882" stop-color="#799b00"/><stop offset="0.941" stop-color="#9a9b00"/><stop offset="1.000" stop-color="#9b7f00"/></linearGradient><linearGradient id="f39" gradientUnits="userSpaceOnUse" x1="1380.1" y1="0" x2="1466.1" y2="0"><stop offset="0.000" stop-color="#00ff20"/><stop offset="0.333" stop-color="#29ff15"/><stop offset="0.667" stop-color="#5cff09"/><stop offset="1.000" stop-color="#95ff00"/></linearGradient><linearGradient id="f40" gradientUnits="userSpaceOnUse" x1="1155.8" y1="0" x2="1541.6" y2="0"><stop offset="0.000" stop-color="#009b3a"/><stop offset="0.059" stop-color="#009b38"/><stop offset="0.118" stop-color="#009b35"/><stop offset="0.176" stop-color="#009b32"/><stop offset="0.235" stop-color="#009b2f"/><stop offset="0.294" stop-color="#009b2b"/><stop offset="0.353" stop-color="#009b27"/><stop offset="0.412" stop-color="#009b24"/><stop offset="0.471" stop-color="#009b1f"/><stop offset="0.529" stop-color="#009b1b"/><stop offset="0.588" stop-color="#019b16"/><stop offset="0.647" stop-color="#189b11"/><stop offset="0.706" stop-color="#319b0b"/><stop offset="0.765" stop-color="#4c9b05"/><stop offset="0.824" stop-color="#6a9b00"/><stop offset="0.882" stop-color="#8a9b00"/><stop offset="0.941" stop-color="#9b8b00"/><stop offset="1.000" stop-color="#9b7100"/></linearGradient><linearGradient id="f41" gradientUnits="userSpaceOnUse" x1="1377.8" y1="0" x2="1476.2" y2="0"><stop offset="0.000" stop-color="#00ff26"/><stop offset="0.250" stop-color="#23ff1d"/><stop offset="0.500" stop-color="#4fff13"/><stop offset="0.750" stop-color="#7fff08"/><stop offset="1.000" stop-color="#b3ff00"/></linearGradient><linearGradient id="f42" gradientUnits="userSpaceOnUse" x1="1156.4" y1="0" x2="1549.6" y2="0"><stop offset="0.000" stop-color="#009b3d"/><stop offset="0.059" stop-color="#009b3b"/><stop offset="0.118" stop-color="#009b38"/><stop offset="0.176" stop-color="#009b35"/><stop offset="0.235" stop-color="#009b31"/><stop offset="0.294" stop-color="#009b2e"/><stop offset="0.353" stop-color="#009b2a"/><stop offset="0.412" stop-color="#009b26"/><stop offset="0.471" stop-color="#009b22"/><stop offset="0.529" stop-color="#009b1d"/><stop offset="0.588" stop-color="#099b18"/><stop offset="0.647" stop-color="#219b13"/><stop offset="0.706" stop-color="#3c9b0d"/><stop offset="0.765" stop-color="#599b06"/><stop offset="0.824" stop-color="#799b00"/><stop offset="0.882" stop-color="#9b9a00"/><stop offset="0.941" stop-color="#9b7b00"/><stop offset="1.000" stop-color="#9b6500"/></linearGradient><linearGradient id="f43" gradientUnits="userSpaceOnUse" x1="1375.6" y1="0" x2="1486.2" y2="0"><stop offset="0.000" stop-color="#00ff2c"/><stop offset="0.200" stop-color="#1fff24"/><stop offset="0.400" stop-color="#47ff1b"/><stop offset="0.600" stop-color="#72ff12"/><stop offset="0.800" stop-color="#a2ff07"/><stop offset="1.000" stop-color="#d5ff00"/></linearGradient><linearGradient id="f44" gradientUnits="userSpaceOnUse" x1="1157.1" y1="0" x2="1557.6" y2="0"><stop offset="0.000" stop-color="#009b40"/><stop offset="0.056" stop-color="#009b3e"/><stop offset="0.111" stop-color="#009b3b"/><stop offset="0.167" stop-color="#009b38"/><stop offset="0.222" stop-color="#009b35"/><stop offset="0.278" stop-color="#009b32"/><stop offset="0.333" stop-color="#009b2e"/><stop offset="0.389" stop-color="#009b2a"/><stop offset="0.444" stop-color="#009b26"/><stop offset="0.500" stop-color="#009b22"/><stop offset="0.556" stop-color="#039b1d"/><stop offset="0.611" stop-color="#1a9b18"/><stop offset="0.667" stop-color="#349b13"/><stop offset="0.722" stop-color="#509b0d"/><stop offset="0.778" stop-color="#6e9b06"/><stop offset="0.833" stop-color="#909b00"/><stop offset="0.889" stop-color="#9b8500"/><stop offset="0.944" stop-color="#9b6c00"/><stop offset="1.000" stop-color="#9b5a00"/></linearGradient><linearGradient id="f45" gradientUnits="userSpaceOnUse" x1="1373.4" y1="0" x2="1496.2" y2="0"><stop offset="0.000" stop-color="#00ff33"/><stop offset="0.200" stop-color="#24ff2a"/><stop offset="0.400" stop-color="#52ff20"/><stop offset="0.600" stop-color="#85ff15"/><stop offset="0.800" stop-color="#bcff09"/><stop offset="1.000" stop-color="#faff00"/></linearGradient><linearGradient id="f46" gradientUnits="userSpaceOnUse" x1="1157.9" y1="0" x2="1565.6" y2="0"><stop offset="0.000" stop-color="#009b43"/><stop offset="0.056" stop-color="#009b41"/><stop offset="0.111" stop-color="#009b3e"/><stop offset="0.167" stop-color="#009b3b"/><stop offset="0.222" stop-color="#009b38"/><stop offset="0.278" stop-color="#009b35"/><stop offset="0.333" stop-color="#009b31"/><stop offset="0.389" stop-color="#009b2d"/><stop offset="0.444" stop-color="#009b29"/><stop offset="0.500" stop-color="#009b25"/><stop offset="0.556" stop-color="#0a9b20"/><stop offset="0.611" stop-color="#239b1b"/><stop offset="0.667" stop-color="#3f9b15"/><stop offset="0.722" stop-color="#5d9b0f"/><stop offset="0.778" stop-color="#7e9b08"/><stop offset="0.833" stop-color="#9b9400"/><stop offset="0.889" stop-color="#9b7600"/><stop offset="0.944" stop-color="#9b6100"/><stop offset="1.000" stop-color="#9b5000"/></linearGradient><linearGradient id="f47" gradientUnits="userSpaceOnUse" x1="1371.2" y1="0" x2="1506.2" y2="0"><stop offset="0.000" stop-color="#00ff39"/><stop offset="0.167" stop-color="#21ff31"/><stop offset="0.333" stop-color="#4cff28"/><stop offset="0.500" stop-color="#7bff1e"/><stop offset="0.667" stop-color="#aeff14"/><stop offset="0.833" stop-color="#e6ff08"/><stop offset="1.000" stop-color="#ffde00"/></linearGradient><linearGradient id="f48" gradientUnits="userSpaceOnUse" x1="1158.7" y1="0" x2="1573.5" y2="0"><stop offset="0.000" stop-color="#009b47"/><stop offset="0.056" stop-color="#009b44"/><stop offset="0.111" stop-color="#009b41"/><stop offset="0.167" stop-color="#009b3e"/><stop offset="0.222" stop-color="#009b3b"/><stop offset="0.278" stop-color="#009b38"/><stop offset="0.333" stop-color="#009b34"/><stop offset="0.389" stop-color="#009b30"/><stop offset="0.444" stop-color="#009b2c"/><stop offset="0.500" stop-color="#009b27"/><stop offset="0.556" stop-color="#129b23"/><stop offset="0.611" stop-color="#2d9b1d"/><stop offset="0.667" stop-color="#4b9b17"/><stop offset="0.722" stop-color="#6b9b11"/><stop offset="0.778" stop-color="#909b09"/><stop offset="0.833" stop-color="#9b8301"/><stop offset="0.889" stop-color="#9b6900"/><stop offset="0.944" stop-color="#9b5600"/><stop offset="1.000" stop-color="#9b4700"/></linearGradient><linearGradient id="f49" gradientUnits="userSpaceOnUse" x1="1369.0" y1="0" x2="1516.2" y2="0"><stop offset="0.000" stop-color="#00ff40"/><stop offset="0.167" stop-color="#26ff37"/><stop offset="0.333" stop-color="#56ff2e"/><stop offset="0.500" stop-color="#8cff23"/><stop offset="0.667" stop-color="#c7ff17"/><stop offset="0.833" stop-color="#fff50a"/><stop offset="1.000" stop-color="#ffc000"/></linearGradient><linearGradient id="f50" gradientUnits="userSpaceOnUse" x1="1159.5" y1="0" x2="1581.5" y2="0"><stop offset="0.000" stop-color="#009b4a"/><stop offset="0.053" stop-color="#009b48"/><stop offset="0.105" stop-color="#009b45"/><stop offset="0.158" stop-color="#009b42"/><stop offset="0.211" stop-color="#009b3f"/><stop offset="0.263" stop-color="#009b3c"/><stop offset="0.316" stop-color="#009b39"/><stop offset="0.368" stop-color="#009b35"/><stop offset="0.421" stop-color="#009b31"/><stop offset="0.474" stop-color="#009b2d"/><stop offset="0.526" stop-color="#0c9b28"/><stop offset="0.579" stop-color="#279b23"/><stop offset="0.632" stop-color="#439b1e"/><stop offset="0.684" stop-color="#639b18"/><stop offset="0.737" stop-color="#859b11"/><stop offset="0.789" stop-color="#9b8c09"/><stop offset="0.842" stop-color="#9b7001"/><stop offset="0.895" stop-color="#9b5c00"/><stop offset="0.947" stop-color="#9b4c00"/><stop offset="1.000" stop-color="#9b3f00"/></linearGradient><linearGradient id="f51" gradientUnits="userSpaceOnUse" x1="1366.8" y1="0" x2="1526.2" y2="0"><stop offset="0.000" stop-color="#00ff47"/><stop offset="0.143" stop-color="#24ff3f"/><stop offset="0.286" stop-color="#51ff37"/><stop offset="0.429" stop-color="#83ff2d"/><stop offset="0.571" stop-color="#baff22"/><stop offset="0.714" stop-color="#f7ff17"/><stop offset="0.857" stop-color="#ffce08"/><stop offset="1.000" stop-color="#ffa600"/></linearGradient><linearGradient id="f52" gradientUnits="userSpaceOnUse" x1="1160.4" y1="0" x2="1589.5" y2="0"><stop offset="0.000" stop-color="#009b4e"/><stop offset="0.053" stop-color="#009b4b"/><stop offset="0.105" stop-color="#009b49"/><stop offset="0.158" stop-color="#009b46"/><stop offset="0.211" stop-color="#009b43"/><stop offset="0.263" stop-color="#009b40"/><stop offset="0.316" stop-color="#009b3c"/><stop offset="0.368" stop-color="#009b38"/><stop offset="0.421" stop-color="#009b34"/><stop offset="0.474" stop-color="#009b30"/><stop offset="0.526" stop-color="#159b2b"/><stop offset="0.579" stop-color="#319b26"/><stop offset="0.632" stop-color="#509b20"/><stop offset="0.684" stop-color="#729b1a"/><stop offset="0.737" stop-color="#989b13"/><stop offset="0.789" stop-color="#9b7c09"/><stop offset="0.842" stop-color="#9b6402"/><stop offset="0.895" stop-color="#9b5100"/><stop offset="0.947" stop-color="#9b4300"/><stop offset="1.000" stop-color="#9b3800"/></linearGradient><linearGradient id="f53" gradientUnits="userSpaceOnUse" x1="1364.6" y1="0" x2="1536.2" y2="0"><stop offset="0.000" stop-color="#00ff4f"/><stop offset="0.143" stop-color="#28ff46"/><stop offset="0.286" stop-color="#5bff3d"/><stop offset="0.429" stop-color="#93ff33"/><stop offset="0.571" stop-color="#d2ff27"/><stop offset="0.714" stop-color="#ffe718"/><stop offset="0.857" stop-color="#ffb408"/><stop offset="1.000" stop-color="#ff9000"/></linearGradient><linearGradient id="f54" gradientUnits="userSpaceOnUse" x1="1161.4" y1="0" x2="1597.5" y2="0"><stop offset="0.000" stop-color="#009b51"/><stop offset="0.053" stop-color="#009b4f"/><stop offset="0.105" stop-color="#009b4c"/><stop offset="0.158" stop-color="#009b49"/><stop offset="0.211" stop-color="#009b46"/><stop offset="0.263" stop-color="#009b43"/><stop offset="0.316" stop-color="#009b40"/><stop offset="0.368" stop-color="#009b3c"/><stop offset="0.421" stop-color="#009b38"/><stop offset="0.474" stop-color="#029b34"/><stop offset="0.526" stop-color="#1e9b2f"/><stop offset="0.579" stop-color="#3c9b29"/><stop offset="0.632" stop-color="#5d9b24"/><stop offset="0.684" stop-color="#829b1d"/><stop offset="0.737" stop-color="#9b8c14"/><stop offset="0.789" stop-color="#9b6e09"/><stop offset="0.842" stop-color="#9b5902"/><stop offset="0.895" stop-color="#9b4800"/><stop offset="0.947" stop-color="#9b3c00"/><stop offset="1.000" stop-color="#9b3200"/></linearGradient><linearGradient id="f55" gradientUnits="userSpaceOnUse" x1="1362.4" y1="0" x2="1546.2" y2="0"><stop offset="0.000" stop-color="#00ff57"/><stop offset="0.125" stop-color="#26ff4f"/><stop offset="0.250" stop-color="#56ff46"/><stop offset="0.375" stop-color="#8cff3d"/><stop offset="0.500" stop-color="#c7ff33"/><stop offset="0.625" stop-color="#fff425"/><stop offset="0.750" stop-color="#ffbf13"/><stop offset="0.875" stop-color="#ff9906"/><stop offset="1.000" stop-color="#ff7d00"/></linearGradient><linearGradient id="f56" gradientUnits="userSpaceOnUse" x1="1162.4" y1="0" x2="1605.5" y2="0"><stop offset="0.000" stop-color="#009b55"/><stop offset="0.050" stop-color="#009b53"/><stop offset="0.100" stop-color="#009b50"/><stop offset="0.150" stop-color="#009b4e"/><stop offset="0.200" stop-color="#009b4b"/><stop offset="0.250" stop-color="#009b48"/><stop offset="0.300" stop-color="#009b45"/><stop offset="0.350" stop-color="#009b41"/><stop offset="0.400" stop-color="#009b3e"/><stop offset="0.450" stop-color="#009b3a"/><stop offset="0.500" stop-color="#189b35"/><stop offset="0.550" stop-color="#369b30"/><stop offset="0.600" stop-color="#569b2b"/><stop offset="0.650" stop-color="#7a9b25"/><stop offset="0.700" stop-color="#9b951d"/><stop offset="0.750" stop-color="#9b7411"/><stop offset="0.800" stop-color="#9b5d08"/><stop offset="0.850" stop-color="#9b4c02"/><stop offset="0.900" stop-color="#9b3f00"/><stop offset="0.950" stop-color="#9b3400"/><stop offset="1.000" stop-color="#9b2c00"/></linearGradient><linearGradient id="f57" gradientUnits="userSpaceOnUse" x1="1360.2" y1="0" x2="1556.3" y2="0"><stop offset="0.000" stop-color="#00ff5f"/><stop offset="0.125" stop-color="#2aff57"/><stop offset="0.250" stop-color="#60ff4e"/><stop offset="0.375" stop-color="#9bff44"/><stop offset="0.500" stop-color="#deff39"/><stop offset="0.625" stop-color="#ffd926"/><stop offset="0.750" stop-color="#ffa813"/><stop offset="0.875" stop-color="#ff8607"/><stop offset="1.000" stop-color="#ff6c00"/></linearGradient><linearGradient id="f58" gradientUnits="userSpaceOnUse" x1="1163.4" y1="0" x2="1613.5" y2="0"><stop offset="0.000" stop-color="#009b59"/><stop offset="0.050" stop-color="#009b57"/><stop offset="0.100" stop-color="#009b54"/><stop offset="0.150" stop-color="#009b52"/><stop offset="0.200" stop-color="#009b4f"/><stop offset="0.250" stop-color="#009b4c"/><stop offset="0.300" stop-color="#009b49"/><stop offset="0.350" stop-color="#009b46"/><stop offset="0.400" stop-color="#009b42"/><stop offset="0.450" stop-color="#059b3e"/><stop offset="0.500" stop-color="#229b39"/><stop offset="0.550" stop-color="#429b34"/><stop offset="0.600" stop-color="#659b2f"/><stop offset="0.650" stop-color="#8c9b28"/><stop offset="0.700" stop-color="#9b831c"/><stop offset="0.750" stop-color="#9b6711"/><stop offset="0.800" stop-color="#9b5309"/><stop offset="0.850" stop-color="#9b4402"/><stop offset="0.900" stop-color="#9b3800"/><stop offset="0.950" stop-color="#9b2e00"/><stop offset="1.000" stop-color="#9b2600"/></linearGradient><linearGradient id="f59" gradientUnits="userSpaceOnUse" x1="1358.0" y1="0" x2="1566.3" y2="0"><stop offset="0.000" stop-color="#00ff68"/><stop offset="0.111" stop-color="#28ff60"/><stop offset="0.222" stop-color="#5cff58"/><stop offset="0.333" stop-color="#95ff4f"/><stop offset="0.444" stop-color="#d5ff45"/><stop offset="0.556" stop-color="#ffe333"/><stop offset="0.667" stop-color="#ffb11f"/><stop offset="0.778" stop-color="#ff8d10"/><stop offset="0.889" stop-color="#ff7206"/><stop offset="1.000" stop-color="#ff5d00"/></linearGradient><linearGradient id="f60" gradientUnits="userSpaceOnUse" x1="1164.5" y1="0" x2="1621.5" y2="0"><stop offset="0.000" stop-color="#009b5d"/><stop offset="0.050" stop-color="#009b5b"/><stop offset="0.100" stop-color="#009b59"/><stop offset="0.150" stop-color="#009b56"/><stop offset="0.200" stop-color="#009b53"/><stop offset="0.250" stop-color="#009b51"/><stop offset="0.300" stop-color="#009b4d"/><stop offset="0.350" stop-color="#009b4a"/><stop offset="0.400" stop-color="#009b46"/><stop offset="0.450" stop-color="#0e9b42"/><stop offset="0.500" stop-color="#2c9b3e"/><stop offset="0.550" stop-color="#4e9b38"/><stop offset="0.600" stop-color="#759b33"/><stop offset="0.650" stop-color="#9b972b"/><stop offset="0.700" stop-color="#9b741c"/><stop offset="0.750" stop-color="#9b5b11"/><stop offset="0.800" stop-color="#9b4909"/><stop offset="0.850" stop-color="#9b3c03"/><stop offset="0.900" stop-color="#9b3100"/><stop offset="0.950" stop-color="#9b2800"/><stop offset="1.000" stop-color="#9b2100"/></linearGradient><linearGradient id="f61" gradientUnits="userSpaceOnUse" x1="1355.8" y1="0" x2="1576.3" y2="0"><stop offset="0.000" stop-color="#00ff71"/><stop offset="0.100" stop-color="#27ff6a"/><stop offset="0.200" stop-color="#59ff63"/><stop offset="0.300" stop-color="#91ff5b"/><stop offset="0.400" stop-color="#cfff51"/><stop offset="0.500" stop-color="#ffea41"/><stop offset="0.600" stop-color="#ffb62a"/><stop offset="0.700" stop-color="#ff921a"/><stop offset="0.800" stop-color="#ff760e"/><stop offset="0.900" stop-color="#ff6105"/><stop offset="1.000" stop-color="#ff5000"/></linearGradient><linearGradient id="f62" gradientUnits="userSpaceOnUse" x1="1165.6" y1="0" x2="1629.5" y2="0"><stop offset="0.000" stop-color="#009b61"/><stop offset="0.048" stop-color="#009b5f"/><stop offset="0.095" stop-color="#009b5d"/><stop offset="0.143" stop-color="#009b5b"/><stop offset="0.190" stop-color="#009b59"/><stop offset="0.238" stop-color="#009b56"/><stop offset="0.286" stop-color="#009b53"/><stop offset="0.333" stop-color="#009b50"/><stop offset="0.381" stop-color="#009b4d"/><stop offset="0.429" stop-color="#099b49"/><stop offset="0.476" stop-color="#279b45"/><stop offset="0.524" stop-color="#499b40"/><stop offset="0.571" stop-color="#6e9b3b"/><stop offset="0.619" stop-color="#979b35"/><stop offset="0.667" stop-color="#9b7924"/><stop offset="0.714" stop-color="#9b5f18"/><stop offset="0.762" stop-color="#9b4d0f"/><stop offset="0.810" stop-color="#9b3e08"/><stop offset="0.857" stop-color="#9b3303"/><stop offset="0.905" stop-color="#9b2a00"/><stop offset="0.952" stop-color="#9b2300"/><stop offset="1.000" stop-color="#9b1c00"/></linearGradient><linearGradient id="f63" gradientUnits="userSpaceOnUse" x1="1353.6" y1="0" x2="1586.3" y2="0"><stop offset="0.000" stop-color="#00ff7b"/><stop offset="0.100" stop-color="#2bff74"/><stop offset="0.200" stop-color="#62ff6c"/><stop offset="0.300" stop-color="#a0ff64"/><stop offset="0.400" stop-color="#e5ff5a"/><stop offset="0.500" stop-color="#ffd241"/><stop offset="0.600" stop-color="#ffa32b"/><stop offset="0.700" stop-color="#ff811a"/><stop offset="0.800" stop-color="#ff680e"/><stop offset="0.900" stop-color="#ff5405"/><stop offset="1.000" stop-color="#ff4500"/></linearGradient><linearGradient id="f64" gradientUnits="userSpaceOnUse" x1="1166.8" y1="0" x2="1637.4" y2="0"><stop offset="0.000" stop-color="#009b66"/><stop offset="0.048" stop-color="#009b64"/><stop offset="0.095" stop-color="#009b62"/><stop offset="0.143" stop-color="#009b60"/><stop offset="0.190" stop-color="#009b5e"/><stop offset="0.238" stop-color="#009b5b"/><stop offset="0.286" stop-color="#009b58"/><stop offset="0.333" stop-color="#009b55"/><stop offset="0.381" stop-color="#009b52"/><stop offset="0.429" stop-color="#129b4e"/><stop offset="0.476" stop-color="#329b4a"/><stop offset="0.524" stop-color="#579b45"/><stop offset="0.571" stop-color="#7f9b40"/><stop offset="0.619" stop-color="#9b8b34"/><stop offset="0.667" stop-color="#9b6b23"/><stop offset="0.714" stop-color="#9b5418"/><stop offset="0.762" stop-color="#9b440f"/><stop offset="0.810" stop-color="#9b3708"/><stop offset="0.857" stop-color="#9b2d03"/><stop offset="0.905" stop-color="#9b2500"/><stop offset="0.952" stop-color="#9b1e00"/><stop offset="1.000" stop-color="#9b1800"/></linearGradient><linearGradient id="f65" gradientUnits="userSpaceOnUse" x1="1351.3" y1="0" x2="1596.3" y2="0"><stop offset="0.000" stop-color="#00ff85"/><stop offset="0.091" stop-color="#2aff7f"/><stop offset="0.182" stop-color="#60ff78"/><stop offset="0.273" stop-color="#9cff70"/><stop offset="0.364" stop-color="#e0ff67"/><stop offset="0.455" stop-color="#ffd84f"/><stop offset="0.545" stop-color="#ffa736"/><stop offset="0.636" stop-color="#ff8524"/><stop offset="0.727" stop-color="#ff6b17"/><stop offset="0.818" stop-color="#ff570c"/><stop offset="0.909" stop-color="#ff4704"/><stop offset="1.000" stop-color="#ff3a00"/></linearGradient><linearGradient id="f66" gradientUnits="userSpaceOnUse" x1="1168.0" y1="0" x2="1645.4" y2="0"><stop offset="0.000" stop-color="#009b6b"/><stop offset="0.048" stop-color="#009b69"/><stop offset="0.095" stop-color="#009b67"/><stop offset="0.143" stop-color="#009b65"/><stop offset="0.190" stop-color="#009b63"/><stop offset="0.238" stop-color="#009b60"/><stop offset="0.286" stop-color="#009b5e"/><stop offset="0.333" stop-color="#009b5b"/><stop offset="0.381" stop-color="#009b57"/><stop offset="0.429" stop-color="#1c9b54"/><stop offset="0.476" stop-color="#3f9b50"/><stop offset="0.524" stop-color="#669b4b"/><stop offset="0.571" stop-color="#929b46"/><stop offset="0.619" stop-color="#9b7a32"/><stop offset="0.667" stop-color="#9b5e23"/><stop offset="0.714" stop-color="#9b4a18"/><stop offset="0.762" stop-color="#9b3b0f"/><stop offset="0.810" stop-color="#9b3009"/><stop offset="0.857" stop-color="#9b2704"/><stop offset="0.905" stop-color="#9b1f00"/><stop offset="0.952" stop-color="#9b1900"/><stop offset="1.000" stop-color="#9b1400"/></linearGradient><linearGradient id="f67" gradientUnits="userSpaceOnUse" x1="1349.1" y1="0" x2="1606.3" y2="0"><stop offset="0.000" stop-color="#00ff90"/><stop offset="0.091" stop-color="#2eff8a"/><stop offset="0.182" stop-color="#69ff83"/><stop offset="0.273" stop-color="#abff7b"/><stop offset="0.364" stop-color="#f7ff72"/><stop offset="0.455" stop-color="#ffc24f"/><stop offset="0.545" stop-color="#ff9536"/><stop offset="0.636" stop-color="#ff7624"/><stop offset="0.727" stop-color="#ff5e17"/><stop offset="0.818" stop-color="#ff4b0d"/><stop offset="0.909" stop-color="#ff3d04"/><stop offset="1.000" stop-color="#ff3100"/></linearGradient><linearGradient id="f68" gradientUnits="userSpaceOnUse" x1="1169.2" y1="0" x2="1653.4" y2="0"><stop offset="0.000" stop-color="#009b70"/><stop offset="0.045" stop-color="#009b6e"/><stop offset="0.091" stop-color="#009b6d"/><stop offset="0.136" stop-color="#009b6b"/><stop offset="0.182" stop-color="#009b69"/><stop offset="0.227" stop-color="#009b66"/><stop offset="0.273" stop-color="#009b64"/><stop offset="0.318" stop-color="#009b61"/><stop offset="0.364" stop-color="#009b5f"/><stop offset="0.409" stop-color="#189b5b"/><stop offset="0.455" stop-color="#3a9b58"/><stop offset="0.500" stop-color="#619b54"/><stop offset="0.545" stop-color="#8c9b4f"/><stop offset="0.591" stop-color="#9b7f3c"/><stop offset="0.636" stop-color="#9b612b"/><stop offset="0.682" stop-color="#9b4d1e"/><stop offset="0.727" stop-color="#9b3d15"/><stop offset="0.773" stop-color="#9b320e"/><stop offset="0.818" stop-color="#9b2808"/><stop offset="0.864" stop-color="#9b2003"/><stop offset="0.909" stop-color="#9b1a00"/><stop offset="0.955" stop-color="#9b1500"/><stop offset="1.000" stop-color="#9b1000"/></linearGradient><linearGradient id="f69" gradientUnits="userSpaceOnUse" x1="1346.9" y1="0" x2="1616.3" y2="0"><stop offset="0.000" stop-color="#00ff9b"/><stop offset="0.083" stop-color="#2dff96"/><stop offset="0.167" stop-color="#67ff90"/><stop offset="0.250" stop-color="#a8ff89"/><stop offset="0.333" stop-color="#f3ff81"/><stop offset="0.417" stop-color="#ffc65d"/><stop offset="0.500" stop-color="#ff9842"/><stop offset="0.583" stop-color="#ff782e"/><stop offset="0.667" stop-color="#ff6020"/><stop offset="0.750" stop-color="#ff4d14"/><stop offset="0.833" stop-color="#ff3e0b"/><stop offset="0.917" stop-color="#ff3204"/><stop offset="1.000" stop-color="#ff2800"/></linearGradient><linearGradient id="f70" gradientUnits="userSpaceOnUse" x1="1170.5" y1="0" x2="1661.3" y2="0"><stop offset="0.000" stop-color="#009b75"/><stop offset="0.045" stop-color="#009b74"/><stop offset="0.091" stop-color="#009b72"/><stop offset="0.136" stop-color="#009b70"/><stop offset="0.182" stop-color="#009b6f"/><stop offset="0.227" stop-color="#009b6d"/><stop offset="0.273" stop-color="#009b6a"/><stop offset="0.318" stop-color="#009b68"/><stop offset="0.364" stop-color="#019b65"/><stop offset="0.409" stop-color="#229b62"/><stop offset="0.455" stop-color="#489b5f"/><stop offset="0.500" stop-color="#729b5b"/><stop offset="0.545" stop-color="#9b9553"/><stop offset="0.591" stop-color="#9b6f3a"/><stop offset="0.636" stop-color="#9b552a"/><stop offset="0.682" stop-color="#9b431e"/><stop offset="0.727" stop-color="#9b3615"/><stop offset="0.773" stop-color="#9b2b0e"/><stop offset="0.818" stop-color="#9b2308"/><stop offset="0.864" stop-color="#9b1c04"/><stop offset="0.909" stop-color="#9b1600"/><stop offset="0.955" stop-color="#9b1100"/><stop offset="1.000" stop-color="#9b0d00"/></linearGradient><linearGradient id="f71" gradientUnits="userSpaceOnUse" x1="1344.7" y1="0" x2="1626.3" y2="0"><stop offset="0.000" stop-color="#00ffa7"/><stop offset="0.083" stop-color="#31ffa2"/><stop offset="0.167" stop-color="#70ff9c"/><stop offset="0.250" stop-color="#b8ff96"/><stop offset="0.333" stop-color="#fff387"/><stop offset="0.417" stop-color="#ffb35e"/><stop offset="0.500" stop-color="#ff8842"/><stop offset="0.583" stop-color="#ff6a2e"/><stop offset="0.667" stop-color="#ff5420"/><stop offset="0.750" stop-color="#ff4314"/><stop offset="0.833" stop-color="#ff350b"/><stop offset="0.917" stop-color="#ff2a04"/><stop offset="1.000" stop-color="#ff2000"/></linearGradient><linearGradient id="f72" gradientUnits="userSpaceOnUse" x1="1171.8" y1="0" x2="1669.3" y2="0"><stop offset="0.000" stop-color="#009b7b"/><stop offset="0.045" stop-color="#009b79"/><stop offset="0.091" stop-color="#009b78"/><stop offset="0.136" stop-color="#009b76"/><stop offset="0.182" stop-color="#009b75"/><stop offset="0.227" stop-color="#009b73"/><stop offset="0.273" stop-color="#009b71"/><stop offset="0.318" stop-color="#009b6f"/><stop offset="0.364" stop-color="#0a9b6c"/><stop offset="0.409" stop-color="#2e9b6a"/><stop offset="0.455" stop-color="#569b66"/><stop offset="0.500" stop-color="#859b63"/><stop offset="0.545" stop-color="#9b814f"/><stop offset="0.591" stop-color="#9b6138"/><stop offset="0.636" stop-color="#9b4b29"/><stop offset="0.682" stop-color="#9b3b1d"/><stop offset="0.727" stop-color="#9b2f15"/><stop offset="0.773" stop-color="#9b250e"/><stop offset="0.818" stop-color="#9b1d09"/><stop offset="0.864" stop-color="#9b1704"/><stop offset="0.909" stop-color="#9b1200"/><stop offset="0.955" stop-color="#9b0d00"/><stop offset="1.000" stop-color="#9b0900"/></linearGradient><linearGradient id="f73" gradientUnits="userSpaceOnUse" x1="1342.5" y1="0" x2="1636.4" y2="0"><stop offset="0.000" stop-color="#00ffb4"/><stop offset="0.077" stop-color="#30ffb0"/><stop offset="0.154" stop-color="#6fffab"/><stop offset="0.231" stop-color="#b6ffa5"/><stop offset="0.308" stop-color="#fff599"/><stop offset="0.385" stop-color="#ffb56c"/><stop offset="0.462" stop-color="#ff8a4d"/><stop offset="0.538" stop-color="#ff6c38"/><stop offset="0.615" stop-color="#ff5528"/><stop offset="0.692" stop-color="#ff441c"/><stop offset="0.769" stop-color="#ff3612"/><stop offset="0.846" stop-color="#ff2b0a"/><stop offset="0.923" stop-color="#ff2103"/><stop offset="1.000" stop-color="#ff1900"/></linearGradient><linearGradient id="f74" gradientUnits="userSpaceOnUse" x1="1173.2" y1="0" x2="1677.3" y2="0"><stop offset="0.000" stop-color="#009b81"/><stop offset="0.045" stop-color="#009b7f"/><stop offset="0.091" stop-color="#009b7e"/><stop offset="0.136" stop-color="#009b7d"/><stop offset="0.182" stop-color="#009b7c"/><stop offset="0.227" stop-color="#009b7a"/><stop offset="0.273" stop-color="#009b78"/><stop offset="0.318" stop-color="#009b76"/><stop offset="0.364" stop-color="#149b74"/><stop offset="0.409" stop-color="#3b9b72"/><stop offset="0.455" stop-color="#679b6f"/><stop offset="0.500" stop-color="#9a9b6c"/><stop offset="0.545" stop-color="#9b714c"/><stop offset="0.591" stop-color="#9b5536"/><stop offset="0.636" stop-color="#9b4128"/><stop offset="0.682" stop-color="#9b331d"/><stop offset="0.727" stop-color="#9b2815"/><stop offset="0.773" stop-color="#9b200e"/><stop offset="0.818" stop-color="#9b1909"/><stop offset="0.864" stop-color="#9b1304"/><stop offset="0.909" stop-color="#9b0e01"/><stop offset="0.955" stop-color="#9b0a00"/><stop offset="1.000" stop-color="#9b0600"/></linearGradient><linearGradient id="f75" gradientUnits="userSpaceOnUse" x1="1340.3" y1="0" x2="1646.4" y2="0"><stop offset="0.000" stop-color="#00ffc1"/><stop offset="0.077" stop-color="#34ffbe"/><stop offset="0.154" stop-color="#79ffb9"/><stop offset="0.231" stop-color="#c7ffb4"/><stop offset="0.308" stop-color="#ffdf99"/><stop offset="0.385" stop-color="#ffa36c"/><stop offset="0.462" stop-color="#ff7b4e"/><stop offset="0.538" stop-color="#ff5f38"/><stop offset="0.615" stop-color="#ff4a28"/><stop offset="0.692" stop-color="#ff3a1c"/><stop offset="0.769" stop-color="#ff2d12"/><stop offset="0.846" stop-color="#ff230a"/><stop offset="0.923" stop-color="#ff1a04"/><stop offset="1.000" stop-color="#ff1300"/></linearGradient><linearGradient id="f76" gradientUnits="userSpaceOnUse" x1="1174.7" y1="0" x2="1685.3" y2="0"><stop offset="0.000" stop-color="#009b87"/><stop offset="0.043" stop-color="#009b86"/><stop offset="0.087" stop-color="#009b85"/><stop offset="0.130" stop-color="#009b84"/><stop offset="0.174" stop-color="#009b83"/><stop offset="0.217" stop-color="#009b82"/><stop offset="0.261" stop-color="#009b81"/><stop offset="0.304" stop-color="#009b7f"/><stop offset="0.348" stop-color="#119b7e"/><stop offset="0.391" stop-color="#389b7c"/><stop offset="0.435" stop-color="#649b7a"/><stop offset="0.478" stop-color="#969b77"/><stop offset="0.522" stop-color="#9b7356"/><stop offset="0.565" stop-color="#9b563f"/><stop offset="0.609" stop-color="#9b432f"/><stop offset="0.652" stop-color="#9b3423"/><stop offset="0.696" stop-color="#9b291a"/><stop offset="0.739" stop-color="#9b2013"/><stop offset="0.783" stop-color="#9b190d"/><stop offset="0.826" stop-color="#9b1308"/><stop offset="0.870" stop-color="#9b0e04"/><stop offset="0.913" stop-color="#9b0a01"/><stop offset="0.957" stop-color="#9b0600"/><stop offset="1.000" stop-color="#9b0300"/></linearGradient><linearGradient id="f77" gradientUnits="userSpaceOnUse" x1="1338.1" y1="0" x2="1656.4" y2="0"><stop offset="0.000" stop-color="#00ffd0"/><stop offset="0.071" stop-color="#34ffcd"/><stop offset="0.143" stop-color="#78ffca"/><stop offset="0.214" stop-color="#c6ffc6"/><stop offset="0.286" stop-color="#ffe0ab"/><stop offset="0.357" stop-color="#ffa47a"/><stop offset="0.429" stop-color="#ff7c59"/><stop offset="0.500" stop-color="#ff6042"/><stop offset="0.571" stop-color="#ff4b31"/><stop offset="0.643" stop-color="#ff3b24"/><stop offset="0.714" stop-color="#ff2e19"/><stop offset="0.786" stop-color="#ff2310"/><stop offset="0.857" stop-color="#ff1a09"/><stop offset="0.929" stop-color="#ff1303"/><stop offset="1.000" stop-color="#ff0c00"/></linearGradient><linearGradient id="f78" gradientUnits="userSpaceOnUse" x1="1176.2" y1="0" x2="1693.4" y2="0"><stop offset="0.000" stop-color="#009b8d"/><stop offset="0.043" stop-color="#009b8d"/><stop offset="0.087" stop-color="#009b8c"/><stop offset="0.130" stop-color="#009b8c"/><stop offset="0.174" stop-color="#009b8b"/><stop offset="0.217" stop-color="#009b8a"/><stop offset="0.261" stop-color="#009b89"/><stop offset="0.304" stop-color="#009b88"/><stop offset="0.348" stop-color="#1c9b87"/><stop offset="0.391" stop-color="#469b86"/><stop offset="0.435" stop-color="#769b84"/><stop offset="0.478" stop-color="#9b8a74"/><stop offset="0.522" stop-color="#9b6453"/><stop offset="0.565" stop-color="#9b4b3d"/><stop offset="0.609" stop-color="#9b3a2e"/><stop offset="0.652" stop-color="#9b2d22"/><stop offset="0.696" stop-color="#9b231a"/><stop offset="0.739" stop-color="#9b1b13"/><stop offset="0.783" stop-color="#9b140d"/><stop offset="0.826" stop-color="#9b0f08"/><stop offset="0.870" stop-color="#9b0b04"/><stop offset="0.913" stop-color="#9b0701"/><stop offset="0.957" stop-color="#9b0300"/><stop offset="1.000" stop-color="#9b0000"/></linearGradient><linearGradient id="f79" gradientUnits="userSpaceOnUse" x1="1335.9" y1="0" x2="1666.4" y2="0"><stop offset="0.000" stop-color="#00ffdf"/><stop offset="0.067" stop-color="#34ffdd"/><stop offset="0.133" stop-color="#78ffdb"/><stop offset="0.200" stop-color="#c6ffd9"/><stop offset="0.267" stop-color="#ffe0bd"/><stop offset="0.333" stop-color="#ffa488"/><stop offset="0.400" stop-color="#ff7c65"/><stop offset="0.467" stop-color="#ff604c"/><stop offset="0.533" stop-color="#ff4b3a"/><stop offset="0.600" stop-color="#ff3a2b"/><stop offset="0.667" stop-color="#ff2d20"/><stop offset="0.733" stop-color="#ff2317"/><stop offset="0.800" stop-color="#ff1a0f"/><stop offset="0.867" stop-color="#ff1308"/><stop offset="0.933" stop-color="#ff0c03"/><stop offset="1.000" stop-color="#ff0700"/></linearGradient><linearGradient id="f80" gradientUnits="userSpaceOnUse" x1="1177.7" y1="0" x2="1701.3" y2="0"><stop offset="0.000" stop-color="#009b94"/><stop offset="0.043" stop-color="#009b94"/><stop offset="0.087" stop-color="#009b94"/><stop offset="0.130" stop-color="#009b94"/><stop offset="0.174" stop-color="#009b93"/><stop offset="0.217" stop-color="#009b93"/><stop offset="0.261" stop-color="#009b92"/><stop offset="0.304" stop-color="#009b92"/><stop offset="0.348" stop-color="#289b91"/><stop offset="0.391" stop-color="#569b91"/><stop offset="0.435" stop-color="#8c9b90"/><stop offset="0.478" stop-color="#9b776e"/><stop offset="0.522" stop-color="#9b564f"/><stop offset="0.565" stop-color="#9b413b"/><stop offset="0.609" stop-color="#9b322d"/><stop offset="0.652" stop-color="#9b2622"/><stop offset="0.696" stop-color="#9b1d19"/><stop offset="0.739" stop-color="#9b1613"/><stop offset="0.783" stop-color="#9b100d"/><stop offset="0.826" stop-color="#9b0b09"/><stop offset="0.870" stop-color="#9b0705"/><stop offset="0.913" stop-color="#9b0401"/><stop offset="0.957" stop-color="#9b0100"/><stop offset="1.000" stop-color="#9b0000"/></linearGradient><linearGradient id="f81" gradientUnits="userSpaceOnUse" x1="1333.7" y1="0" x2="1676.4" y2="0"><stop offset="0.000" stop-color="#00fff0"/><stop offset="0.067" stop-color="#38ffef"/><stop offset="0.133" stop-color="#82ffee"/><stop offset="0.200" stop-color="#d9ffed"/><stop offset="0.267" stop-color="#ffccbc"/><stop offset="0.333" stop-color="#ff9488"/><stop offset="0.400" stop-color="#ff6f65"/><stop offset="0.467" stop-color="#ff544c"/><stop offset="0.533" stop-color="#ff413a"/><stop offset="0.600" stop-color="#ff322b"/><stop offset="0.667" stop-color="#ff2620"/><stop offset="0.733" stop-color="#ff1c17"/><stop offset="0.800" stop-color="#ff140f"/><stop offset="0.867" stop-color="#ff0d08"/><stop offset="0.933" stop-color="#ff0703"/><stop offset="1.000" stop-color="#ff0200"/></linearGradient><linearGradient id="f82" gradientUnits="userSpaceOnUse" x1="1179.3" y1="0" x2="1709.3" y2="0"><stop offset="0.000" stop-color="#009a9b"/><stop offset="0.042" stop-color="#009a9b"/><stop offset="0.083" stop-color="#009a9b"/><stop offset="0.125" stop-color="#009a9b"/><stop offset="0.167" stop-color="#009a9b"/><stop offset="0.208" stop-color="#009a9b"/><stop offset="0.250" stop-color="#00999b"/><stop offset="0.292" stop-color="#00999b"/><stop offset="0.333" stop-color="#26999b"/><stop offset="0.375" stop-color="#53999b"/><stop offset="0.417" stop-color="#88989b"/><stop offset="0.458" stop-color="#9b777a"/><stop offset="0.500" stop-color="#9b5759"/><stop offset="0.542" stop-color="#9b4143"/><stop offset="0.583" stop-color="#9b3233"/><stop offset="0.625" stop-color="#9b2627"/><stop offset="0.667" stop-color="#9b1d1e"/><stop offset="0.708" stop-color="#9b1617"/><stop offset="0.750" stop-color="#9b1011"/><stop offset="0.792" stop-color="#9b0b0c"/><stop offset="0.833" stop-color="#9b0708"/><stop offset="0.875" stop-color="#9b0304"/><stop offset="0.917" stop-color="#9b0001"/><stop offset="0.958" stop-color="#9b0000"/><stop offset="1.000" stop-color="#9b0000"/></linearGradient><linearGradient id="f83" gradientUnits="userSpaceOnUse" x1="1331.5" y1="0" x2="1677.8" y2="0"><stop offset="0.000" stop-color="#00fcff"/><stop offset="0.067" stop-color="#3afbff"/><stop offset="0.133" stop-color="#87fbff"/><stop offset="0.200" stop-color="#e2faff"/><stop offset="0.267" stop-color="#ffbfc3"/><stop offset="0.333" stop-color="#ff8a8d"/><stop offset="0.400" stop-color="#ff6669"/><stop offset="0.467" stop-color="#ff4d50"/><stop offset="0.533" stop-color="#ff3b3d"/><stop offset="0.600" stop-color="#ff2c2e"/><stop offset="0.667" stop-color="#ff2123"/><stop offset="0.733" stop-color="#ff1719"/><stop offset="0.800" stop-color="#ff1011"/><stop offset="0.867" stop-color="#ff090a"/><stop offset="0.933" stop-color="#ff0305"/><stop offset="1.000" stop-color="#ff0000"/></linearGradient><linearGradient id="f84" gradientUnits="userSpaceOnUse" x1="1180.8" y1="0" x2="1717.2" y2="0"><stop offset="0.000" stop-color="#00939b"/><stop offset="0.042" stop-color="#00929b"/><stop offset="0.083" stop-color="#00929b"/><stop offset="0.125" stop-color="#00919b"/><stop offset="0.167" stop-color="#00919b"/><stop offset="0.208" stop-color="#00909b"/><stop offset="0.250" stop-color="#008f9b"/><stop offset="0.292" stop-color="#088e9b"/><stop offset="0.333" stop-color="#308d9b"/><stop offset="0.375" stop-color="#5d8c9b"/><stop offset="0.417" stop-color="#928b9b"/><stop offset="0.458" stop-color="#9b6774"/><stop offset="0.500" stop-color="#9b4b55"/><stop offset="0.542" stop-color="#9b3841"/><stop offset="0.583" stop-color="#9b2a32"/><stop offset="0.625" stop-color="#9b2027"/><stop offset="0.667" stop-color="#9b181e"/><stop offset="0.708" stop-color="#9b1117"/><stop offset="0.750" stop-color="#9b0c11"/><stop offset="0.792" stop-color="#9b080c"/><stop offset="0.833" stop-color="#9b0408"/><stop offset="0.875" stop-color="#9b0105"/><stop offset="0.917" stop-color="#9b0002"/><stop offset="0.958" stop-color="#9b0000"/><stop offset="1.000" stop-color="#9b0000"/></linearGradient><linearGradient id="f85" gradientUnits="userSpaceOnUse" x1="1329.3" y1="0" x2="1667.0" y2="0"><stop offset="0.000" stop-color="#00eaff"/><stop offset="0.067" stop-color="#36e9ff"/><stop offset="0.133" stop-color="#7ee7ff"/><stop offset="0.200" stop-color="#d1e5ff"/><stop offset="0.267" stop-color="#ffbdd4"/><stop offset="0.333" stop-color="#ff889a"/><stop offset="0.400" stop-color="#ff6574"/><stop offset="0.467" stop-color="#ff4c59"/><stop offset="0.533" stop-color="#ff3945"/><stop offset="0.600" stop-color="#ff2b35"/><stop offset="0.667" stop-color="#ff2029"/><stop offset="0.733" stop-color="#ff161f"/><stop offset="0.800" stop-color="#ff0f17"/><stop offset="0.867" stop-color="#ff080f"/><stop offset="0.933" stop-color="#ff0209"/><stop offset="1.000" stop-color="#ff0004"/></linearGradient><linearGradient id="f86" gradientUnits="userSpaceOnUse" x1="1182.5" y1="0" x2="1725.2" y2="0"><stop offset="0.000" stop-color="#008b9b"/><stop offset="0.042" stop-color="#008b9b"/><stop offset="0.083" stop-color="#008a9b"/><stop offset="0.125" stop-color="#00899b"/><stop offset="0.167" stop-color="#00889b"/><stop offset="0.208" stop-color="#00879b"/><stop offset="0.250" stop-color="#00859b"/><stop offset="0.292" stop-color="#11849b"/><stop offset="0.333" stop-color="#39829b"/><stop offset="0.375" stop-color="#67809b"/><stop offset="0.417" stop-color="#9b7d9a"/><stop offset="0.458" stop-color="#9b586e"/><stop offset="0.500" stop-color="#9b4052"/><stop offset="0.542" stop-color="#9b2f3f"/><stop offset="0.583" stop-color="#9b2331"/><stop offset="0.625" stop-color="#9b1a26"/><stop offset="0.667" stop-color="#9b131e"/><stop offset="0.708" stop-color="#9b0d17"/><stop offset="0.750" stop-color="#9b0811"/><stop offset="0.792" stop-color="#9b040c"/><stop offset="0.833" stop-color="#9b0108"/><stop offset="0.875" stop-color="#9b0005"/><stop offset="0.917" stop-color="#9b0002"/><stop offset="0.958" stop-color="#9b0000"/><stop offset="1.000" stop-color="#9b0000"/></linearGradient><linearGradient id="f87" gradientUnits="userSpaceOnUse" x1="1327.0" y1="0" x2="1652.6" y2="0"><stop offset="0.000" stop-color="#00daff"/><stop offset="0.071" stop-color="#36d8ff"/><stop offset="0.143" stop-color="#7ed5ff"/><stop offset="0.214" stop-color="#d1d1ff"/><stop offset="0.286" stop-color="#ffabd4"/><stop offset="0.357" stop-color="#ff799a"/><stop offset="0.429" stop-color="#ff5974"/><stop offset="0.500" stop-color="#ff4259"/><stop offset="0.571" stop-color="#ff3145"/><stop offset="0.643" stop-color="#ff2336"/><stop offset="0.714" stop-color="#ff1929"/><stop offset="0.786" stop-color="#ff101f"/><stop offset="0.857" stop-color="#ff0917"/><stop offset="0.929" stop-color="#ff0310"/><stop offset="1.000" stop-color="#ff0009"/></linearGradient><linearGradient id="f88" gradientUnits="userSpaceOnUse" x1="1184.1" y1="0" x2="1733.2" y2="0"><stop offset="0.000" stop-color="#00849b"/><stop offset="0.042" stop-color="#00839b"/><stop offset="0.083" stop-color="#00829b"/><stop offset="0.125" stop-color="#00819b"/><stop offset="0.167" stop-color="#007f9b"/><stop offset="0.208" stop-color="#007e9b"/><stop offset="0.250" stop-color="#007c9b"/><stop offset="0.292" stop-color="#1a7a9b"/><stop offset="0.333" stop-color="#42789b"/><stop offset="0.375" stop-color="#70759b"/><stop offset="0.417" stop-color="#9b6a91"/><stop offset="0.458" stop-color="#9b4b69"/><stop offset="0.500" stop-color="#9b364f"/><stop offset="0.542" stop-color="#9b283d"/><stop offset="0.583" stop-color="#9b1d30"/><stop offset="0.625" stop-color="#9b1526"/><stop offset="0.667" stop-color="#9b0e1d"/><stop offset="0.708" stop-color="#9b0917"/><stop offset="0.750" stop-color="#9b0511"/><stop offset="0.792" stop-color="#9b010c"/><stop offset="0.833" stop-color="#9b0008"/><stop offset="0.875" stop-color="#9b0005"/><stop offset="0.917" stop-color="#9b0002"/><stop offset="0.958" stop-color="#9b0000"/><stop offset="1.000" stop-color="#9b0000"/></linearGradient><linearGradient id="f89" gradientUnits="userSpaceOnUse" x1="1324.8" y1="0" x2="1638.2" y2="0"><stop offset="0.000" stop-color="#00cbff"/><stop offset="0.071" stop-color="#32c8ff"/><stop offset="0.143" stop-color="#74c4ff"/><stop offset="0.214" stop-color="#c0c0ff"/><stop offset="0.286" stop-color="#ffabe9"/><stop offset="0.357" stop-color="#ff79ab"/><stop offset="0.429" stop-color="#ff5982"/><stop offset="0.500" stop-color="#ff4265"/><stop offset="0.571" stop-color="#ff314f"/><stop offset="0.643" stop-color="#ff233f"/><stop offset="0.714" stop-color="#ff1931"/><stop offset="0.786" stop-color="#ff1026"/><stop offset="0.857" stop-color="#ff091d"/><stop offset="0.929" stop-color="#ff0316"/><stop offset="1.000" stop-color="#ff000f"/></linearGradient><linearGradient id="f90" gradientUnits="userSpaceOnUse" x1="1185.8" y1="0" x2="1741.2" y2="0"><stop offset="0.000" stop-color="#007e9b"/><stop offset="0.040" stop-color="#007c9b"/><stop offset="0.080" stop-color="#007b9b"/><stop offset="0.120" stop-color="#00799b"/><stop offset="0.160" stop-color="#00779b"/><stop offset="0.200" stop-color="#00769b"/><stop offset="0.240" stop-color="#00739b"/><stop offset="0.280" stop-color="#17719b"/><stop offset="0.320" stop-color="#3d6e9b"/><stop offset="0.360" stop-color="#686b9b"/><stop offset="0.400" stop-color="#99689b"/><stop offset="0.440" stop-color="#9b4a73"/><stop offset="0.480" stop-color="#9b3557"/><stop offset="0.520" stop-color="#9b2744"/><stop offset="0.560" stop-color="#9b1c36"/><stop offset="0.600" stop-color="#9b142b"/><stop offset="0.640" stop-color="#9b0e22"/><stop offset="0.680" stop-color="#9b091b"/><stop offset="0.720" stop-color="#9b0415"/><stop offset="0.760" stop-color="#9b0110"/><stop offset="0.800" stop-color="#9b000c"/><stop offset="0.840" stop-color="#9b0008"/><stop offset="0.880" stop-color="#9b0005"/><stop offset="0.920" stop-color="#9b0002"/><stop offset="0.960" stop-color="#9b0000"/><stop offset="1.000" stop-color="#9b0000"/></linearGradient><linearGradient id="f91" gradientUnits="userSpaceOnUse" x1="1322.6" y1="0" x2="1623.7" y2="0"><stop offset="0.000" stop-color="#00bdff"/><stop offset="0.077" stop-color="#33b9ff"/><stop offset="0.154" stop-color="#75b4ff"/><stop offset="0.231" stop-color="#c1aeff"/><stop offset="0.308" stop-color="#ff99e8"/><stop offset="0.385" stop-color="#ff6baa"/><stop offset="0.462" stop-color="#ff4d81"/><stop offset="0.538" stop-color="#ff3864"/><stop offset="0.615" stop-color="#ff284f"/><stop offset="0.692" stop-color="#ff1c3e"/><stop offset="0.769" stop-color="#ff1231"/><stop offset="0.846" stop-color="#ff0a26"/><stop offset="0.923" stop-color="#ff031d"/><stop offset="1.000" stop-color="#ff0015"/></linearGradient><linearGradient id="f92" gradientUnits="userSpaceOnUse" x1="1187.6" y1="0" x2="1749.2" y2="0"><stop offset="0.000" stop-color="#00779b"/><stop offset="0.040" stop-color="#00759b"/><stop offset="0.080" stop-color="#00749b"/><stop offset="0.120" stop-color="#00729b"/><stop offset="0.160" stop-color="#00709b"/><stop offset="0.200" stop-color="#006d9b"/><stop offset="0.240" stop-color="#006b9b"/><stop offset="0.280" stop-color="#20689b"/><stop offset="0.320" stop-color="#46649b"/><stop offset="0.360" stop-color="#71619b"/><stop offset="0.400" stop-color="#9b5995"/><stop offset="0.440" stop-color="#9b3e6e"/><stop offset="0.480" stop-color="#9b2c54"/><stop offset="0.520" stop-color="#9b2042"/><stop offset="0.560" stop-color="#9b1735"/><stop offset="0.600" stop-color="#9b0f2a"/><stop offset="0.640" stop-color="#9b0922"/><stop offset="0.680" stop-color="#9b051b"/><stop offset="0.720" stop-color="#9b0115"/><stop offset="0.760" stop-color="#9b0010"/><stop offset="0.800" stop-color="#9b000c"/><stop offset="0.840" stop-color="#9b0008"/><stop offset="0.880" stop-color="#9b0005"/><stop offset="0.920" stop-color="#9b0002"/><stop offset="0.960" stop-color="#9b0000"/><stop offset="1.000" stop-color="#9b0000"/></linearGradient><linearGradient id="f93" gradientUnits="userSpaceOnUse" x1="1320.4" y1="0" x2="1609.3" y2="0"><stop offset="0.000" stop-color="#00afff"/><stop offset="0.077" stop-color="#2fabff"/><stop offset="0.154" stop-color="#6ba6ff"/><stop offset="0.231" stop-color="#b0a0ff"/><stop offset="0.308" stop-color="#ff99fe"/><stop offset="0.385" stop-color="#ff6bbc"/><stop offset="0.462" stop-color="#ff4d90"/><stop offset="0.538" stop-color="#ff3871"/><stop offset="0.615" stop-color="#ff285a"/><stop offset="0.692" stop-color="#ff1b48"/><stop offset="0.769" stop-color="#ff123a"/><stop offset="0.846" stop-color="#ff0a2e"/><stop offset="0.923" stop-color="#ff0324"/><stop offset="1.000" stop-color="#ff001c"/></linearGradient><linearGradient id="f94" gradientUnits="userSpaceOnUse" x1="1189.4" y1="0" x2="1755.2" y2="0"><stop offset="0.000" stop-color="#00719b"/><stop offset="0.040" stop-color="#006f9b"/><stop offset="0.080" stop-color="#006d9b"/><stop offset="0.120" stop-color="#006a9b"/><stop offset="0.160" stop-color="#00689b"/><stop offset="0.200" stop-color="#00659b"/><stop offset="0.240" stop-color="#05629b"/><stop offset="0.280" stop-color="#275f9b"/><stop offset="0.320" stop-color="#4d5b9b"/><stop offset="0.360" stop-color="#78579b"/><stop offset="0.400" stop-color="#9b4b8e"/><stop offset="0.440" stop-color="#9b346b"/><stop offset="0.480" stop-color="#9b2553"/><stop offset="0.520" stop-color="#9b1a41"/><stop offset="0.560" stop-color="#9b1234"/><stop offset="0.600" stop-color="#9b0b2a"/><stop offset="0.640" stop-color="#9b0622"/><stop offset="0.680" stop-color="#9b011b"/><stop offset="0.720" stop-color="#9b0015"/><stop offset="0.760" stop-color="#9b0010"/><stop offset="0.800" stop-color="#9b000c"/><stop offset="0.840" stop-color="#9b0009"/><stop offset="0.880" stop-color="#9b0005"/><stop offset="0.920" stop-color="#9b0003"/><stop offset="0.960" stop-color="#9b0000"/><stop offset="1.000" stop-color="#9b0000"/></linearGradient><linearGradient id="f95" gradientUnits="userSpaceOnUse" x1="1318.2" y1="0" x2="1594.9" y2="0"><stop offset="0.000" stop-color="#00a3ff"/><stop offset="0.083" stop-color="#2f9dff"/><stop offset="0.167" stop-color="#6d97ff"/><stop offset="0.250" stop-color="#b290ff"/><stop offset="0.333" stop-color="#ff87fc"/><stop offset="0.417" stop-color="#ff5dba"/><stop offset="0.500" stop-color="#ff418e"/><stop offset="0.583" stop-color="#ff2e70"/><stop offset="0.667" stop-color="#ff1f59"/><stop offset="0.750" stop-color="#ff1447"/><stop offset="0.833" stop-color="#ff0b39"/><stop offset="0.917" stop-color="#ff032d"/><stop offset="1.000" stop-color="#ff0024"/></linearGradient><linearGradient id="f96" gradientUnits="userSpaceOnUse" x1="1191.2" y1="0" x2="1754.6" y2="0"><stop offset="0.000" stop-color="#006a9b"/><stop offset="0.040" stop-color="#00689b"/><stop offset="0.080" stop-color="#00669b"/><stop offset="0.120" stop-color="#00639b"/><stop offset="0.160" stop-color="#00619b"/><stop offset="0.200" stop-color="#005e9b"/><stop offset="0.240" stop-color="#0a5a9b"/><stop offset="0.280" stop-color="#2b579b"/><stop offset="0.320" stop-color="#50529b"/><stop offset="0.360" stop-color="#7a4e9b"/><stop offset="0.400" stop-color="#9b428e"/><stop offset="0.440" stop-color="#9b2e6b"/><stop offset="0.480" stop-color="#9b2054"/><stop offset="0.520" stop-color="#9b1642"/><stop offset="0.560" stop-color="#9b0e35"/><stop offset="0.600" stop-color="#9b082b"/><stop offset="0.640" stop-color="#9b0323"/><stop offset="0.680" stop-color="#9b001c"/><stop offset="0.720" stop-color="#9b0016"/><stop offset="0.760" stop-color="#9b0012"/><stop offset="0.800" stop-color="#9b000d"/><stop offset="0.840" stop-color="#9b000a"/><stop offset="0.880" stop-color="#9b0007"/><stop offset="0.920" stop-color="#9b0004"/><stop offset="0.960" stop-color="#9b0001"/><stop offset="1.000" stop-color="#9b0000"/></linearGradient><linearGradient id="f97" gradientUnits="userSpaceOnUse" x1="1316.0" y1="0" x2="1580.4" y2="0"><stop offset="0.000" stop-color="#0097ff"/><stop offset="0.083" stop-color="#2b91ff"/><stop offset="0.167" stop-color="#648bff"/><stop offset="0.250" stop-color="#a384ff"/><stop offset="0.333" stop-color="#ea7cff"/><stop offset="0.417" stop-color="#ff5dce"/><stop offset="0.500" stop-color="#ff419f"/><stop offset="0.583" stop-color="#ff2e7e"/><stop offset="0.667" stop-color="#ff1f65"/><stop offset="0.750" stop-color="#ff1452"/><stop offset="0.833" stop-color="#ff0b43"/><stop offset="0.917" stop-color="#ff0336"/><stop offset="1.000" stop-color="#ff002c"/></linearGradient><linearGradient id="f98" gradientUnits="userSpaceOnUse" x1="1193.1" y1="0" x2="1737.5" y2="0"><stop offset="0.000" stop-color="#00649b"/><stop offset="0.042" stop-color="#00629b"/><stop offset="0.083" stop-color="#005f9b"/><stop offset="0.125" stop-color="#005d9b"/><stop offset="0.167" stop-color="#005a9b"/><stop offset="0.208" stop-color="#00569b"/><stop offset="0.250" stop-color="#10539b"/><stop offset="0.292" stop-color="#314e9b"/><stop offset="0.333" stop-color="#564a9b"/><stop offset="0.375" stop-color="#80459b"/><stop offset="0.417" stop-color="#9b3789"/><stop offset="0.458" stop-color="#9b2669"/><stop offset="0.500" stop-color="#9b1952"/><stop offset="0.542" stop-color="#9b1042"/><stop offset="0.583" stop-color="#9b0a35"/><stop offset="0.625" stop-color="#9b042b"/><stop offset="0.667" stop-color="#9b0023"/><stop offset="0.708" stop-color="#9b001c"/><stop offset="0.750" stop-color="#9b0017"/><stop offset="0.792" stop-color="#9b0012"/><stop offset="0.833" stop-color="#9b000e"/><stop offset="0.875" stop-color="#9b000a"/><stop offset="0.917" stop-color="#9b0007"/><stop offset="0.958" stop-color="#9b0004"/><stop offset="1.000" stop-color="#9b0002"/></linearGradient><linearGradient id="f99" gradientUnits="userSpaceOnUse" x1="1313.8" y1="0" x2="1566.0" y2="0"><stop offset="0.000" stop-color="#008cff"/><stop offset="0.091" stop-color="#2c85ff"/><stop offset="0.182" stop-color="#657eff"/><stop offset="0.273" stop-color="#a576ff"/><stop offset="0.364" stop-color="#ee6eff"/><stop offset="0.455" stop-color="#ff4fca"/><stop offset="0.545" stop-color="#ff369c"/><stop offset="0.636" stop-color="#ff247b"/><stop offset="0.727" stop-color="#ff1663"/><stop offset="0.818" stop-color="#ff0c50"/><stop offset="0.909" stop-color="#ff0441"/><stop offset="1.000" stop-color="#ff0035"/></linearGradient><linearGradient id="f100" gradientUnits="userSpaceOnUse" x1="1195.0" y1="0" x2="1720.3" y2="0"><stop offset="0.000" stop-color="#005e9b"/><stop offset="0.043" stop-color="#005c9b"/><stop offset="0.087" stop-color="#00599b"/><stop offset="0.130" stop-color="#00569b"/><stop offset="0.174" stop-color="#00539b"/><stop offset="0.217" stop-color="#004f9b"/><stop offset="0.261" stop-color="#174b9b"/><stop offset="0.304" stop-color="#38469b"/><stop offset="0.348" stop-color="#5d419b"/><stop offset="0.391" stop-color="#873c9b"/><stop offset="0.435" stop-color="#9b2e84"/><stop offset="0.478" stop-color="#9b1e66"/><stop offset="0.522" stop-color="#9b1351"/><stop offset="0.565" stop-color="#9b0b41"/><stop offset="0.609" stop-color="#9b0535"/><stop offset="0.652" stop-color="#9b002b"/><stop offset="0.696" stop-color="#9b0023"/><stop offset="0.739" stop-color="#9b001c"/><stop offset="0.783" stop-color="#9b0017"/><stop offset="0.826" stop-color="#9b0012"/><stop offset="0.870" stop-color="#9b000e"/><stop offset="0.913" stop-color="#9b000a"/><stop offset="0.957" stop-color="#9b0007"/><stop offset="1.000" stop-color="#9b0005"/></linearGradient><linearGradient id="f101" gradientUnits="userSpaceOnUse" x1="1311.6" y1="0" x2="1551.6" y2="0"><stop offset="0.000" stop-color="#0081ff"/><stop offset="0.100" stop-color="#2d7aff"/><stop offset="0.200" stop-color="#6872ff"/><stop offset="0.300" stop-color="#a969ff"/><stop offset="0.400" stop-color="#f45fff"/><stop offset="0.500" stop-color="#ff41c5"/><stop offset="0.600" stop-color="#ff2a98"/><stop offset="0.700" stop-color="#ff1a78"/><stop offset="0.800" stop-color="#ff0e60"/><stop offset="0.900" stop-color="#ff044d"/><stop offset="1.000" stop-color="#ff003e"/></linearGradient><linearGradient id="f102" gradientUnits="userSpaceOnUse" x1="1197.0" y1="0" x2="1703.2" y2="0"><stop offset="0.000" stop-color="#00599b"/><stop offset="0.043" stop-color="#00569b"/><stop offset="0.087" stop-color="#00539b"/><stop offset="0.130" stop-color="#00509b"/><stop offset="0.174" stop-color="#004d9b"/><stop offset="0.217" stop-color="#00499b"/><stop offset="0.261" stop-color="#15459b"/><stop offset="0.304" stop-color="#34409b"/><stop offset="0.348" stop-color="#563b9b"/><stop offset="0.391" stop-color="#7c369b"/><stop offset="0.435" stop-color="#9b2c90"/><stop offset="0.478" stop-color="#9b1d6f"/><stop offset="0.522" stop-color="#9b1259"/><stop offset="0.565" stop-color="#9b0b48"/><stop offset="0.609" stop-color="#9b043b"/><stop offset="0.652" stop-color="#9b0030"/><stop offset="0.696" stop-color="#9b0028"/><stop offset="0.739" stop-color="#9b0021"/><stop offset="0.783" stop-color="#9b001b"/><stop offset="0.826" stop-color="#9b0016"/><stop offset="0.870" stop-color="#9b0012"/><stop offset="0.913" stop-color="#9b000e"/><stop offset="0.957" stop-color="#9b000b"/><stop offset="1.000" stop-color="#9b0008"/></linearGradient><linearGradient id="f103" gradientUnits="userSpaceOnUse" x1="1309.4" y1="0" x2="1537.1" y2="0"><stop offset="0.000" stop-color="#0077ff"/><stop offset="0.100" stop-color="#2970ff"/><stop offset="0.200" stop-color="#5f68ff"/><stop offset="0.300" stop-color="#9a60ff"/><stop offset="0.400" stop-color="#dd56ff"/><stop offset="0.500" stop-color="#ff41db"/><stop offset="0.600" stop-color="#ff2aaa"/><stop offset="0.700" stop-color="#ff1a87"/><stop offset="0.800" stop-color="#ff0e6d"/><stop offset="0.900" stop-color="#ff0459"/><stop offset="1.000" stop-color="#ff0049"/></linearGradient><linearGradient id="f104" gradientUnits="userSpaceOnUse" x1="1199.1" y1="0" x2="1686.1" y2="0"><stop offset="0.000" stop-color="#00539b"/><stop offset="0.045" stop-color="#00509b"/><stop offset="0.091" stop-color="#004d9b"/><stop offset="0.136" stop-color="#004a9b"/><stop offset="0.182" stop-color="#00469b"/><stop offset="0.227" stop-color="#00429b"/><stop offset="0.273" stop-color="#1b3e9b"/><stop offset="0.318" stop-color="#3a399b"/><stop offset="0.364" stop-color="#5c349b"/><stop offset="0.409" stop-color="#822e9b"/><stop offset="0.455" stop-color="#9b238b"/><stop offset="0.500" stop-color="#9b166d"/><stop offset="0.545" stop-color="#9b0d57"/><stop offset="0.591" stop-color="#9b0647"/><stop offset="0.636" stop-color="#9b003a"/><stop offset="0.682" stop-color="#9b0030"/><stop offset="0.727" stop-color="#9b0028"/><stop offset="0.773" stop-color="#9b0021"/><stop offset="0.818" stop-color="#9b001b"/><stop offset="0.864" stop-color="#9b0016"/><stop offset="0.909" stop-color="#9b0012"/><stop offset="0.955" stop-color="#9b000e"/><stop offset="1.000" stop-color="#9b000b"/></linearGradient><linearGradient id="f105" gradientUnits="userSpaceOnUse" x1="1307.2" y1="0" x2="1522.7" y2="0"><stop offset="0.000" stop-color="#006eff"/><stop offset="0.111" stop-color="#2b66ff"/><stop offset="0.222" stop-color="#625dff"/><stop offset="0.333" stop-color="#9f54ff"/><stop offset="0.444" stop-color="#e449ff"/><stop offset="0.556" stop-color="#ff33d4"/><stop offset="0.667" stop-color="#ff1ea4"/><stop offset="0.778" stop-color="#ff1082"/><stop offset="0.889" stop-color="#ff0569"/><stop offset="1.000" stop-color="#ff0055"/></linearGradient><linearGradient id="f106" gradientUnits="userSpaceOnUse" x1="1201.2" y1="0" x2="1669.0" y2="0"><stop offset="0.000" stop-color="#004e9b"/><stop offset="0.048" stop-color="#004b9b"/><stop offset="0.095" stop-color="#00479b"/><stop offset="0.143" stop-color="#00449b"/><stop offset="0.190" stop-color="#00409b"/><stop offset="0.238" stop-color="#053c9b"/><stop offset="0.286" stop-color="#21379b"/><stop offset="0.333" stop-color="#40329b"/><stop offset="0.381" stop-color="#622c9b"/><stop offset="0.429" stop-color="#88269b"/><stop offset="0.476" stop-color="#9b1b87"/><stop offset="0.524" stop-color="#9b106a"/><stop offset="0.571" stop-color="#9b0855"/><stop offset="0.619" stop-color="#9b0146"/><stop offset="0.667" stop-color="#9b003a"/><stop offset="0.714" stop-color="#9b0030"/><stop offset="0.762" stop-color="#9b0028"/><stop offset="0.810" stop-color="#9b0021"/><stop offset="0.857" stop-color="#9b001b"/><stop offset="0.905" stop-color="#9b0017"/><stop offset="0.952" stop-color="#9b0012"/><stop offset="1.000" stop-color="#9b000f"/></linearGradient><linearGradient id="f107" gradientUnits="userSpaceOnUse" x1="1305.0" y1="0" x2="1508.3" y2="0"><stop offset="0.000" stop-color="#0065ff"/><stop offset="0.111" stop-color="#275dff"/><stop offset="0.222" stop-color="#5955ff"/><stop offset="0.333" stop-color="#904cff"/><stop offset="0.444" stop-color="#cd42ff"/><stop offset="0.556" stop-color="#ff32ed"/><stop offset="0.667" stop-color="#ff1eb9"/><stop offset="0.778" stop-color="#ff1094"/><stop offset="0.889" stop-color="#ff0578"/><stop offset="1.000" stop-color="#ff0063"/></linearGradient><linearGradient id="f108" gradientUnits="userSpaceOnUse" x1="1203.4" y1="0" x2="1651.8" y2="0"><stop offset="0.000" stop-color="#00489b"/><stop offset="0.050" stop-color="#00459b"/><stop offset="0.100" stop-color="#00429b"/><stop offset="0.150" stop-color="#003e9b"/><stop offset="0.200" stop-color="#003a9b"/><stop offset="0.250" stop-color="#0b359b"/><stop offset="0.300" stop-color="#27309b"/><stop offset="0.350" stop-color="#462b9b"/><stop offset="0.400" stop-color="#68259b"/><stop offset="0.450" stop-color="#8e1e9b"/><stop offset="0.500" stop-color="#9b1382"/><stop offset="0.550" stop-color="#9b0a67"/><stop offset="0.600" stop-color="#9b0354"/><stop offset="0.650" stop-color="#9b0045"/><stop offset="0.700" stop-color="#9b0039"/><stop offset="0.750" stop-color="#9b0030"/><stop offset="0.800" stop-color="#9b0028"/><stop offset="0.850" stop-color="#9b0021"/><stop offset="0.900" stop-color="#9b001c"/><stop offset="0.950" stop-color="#9b0017"/><stop offset="1.000" stop-color="#9b0012"/></linearGradient><linearGradient id="f109" gradientUnits="userSpaceOnUse" x1="1302.8" y1="0" x2="1493.8" y2="0"><stop offset="0.000" stop-color="#005cff"/><stop offset="0.125" stop-color="#2854ff"/><stop offset="0.250" stop-color="#5c4bff"/><stop offset="0.375" stop-color="#9541ff"/><stop offset="0.500" stop-color="#d636ff"/><stop offset="0.625" stop-color="#ff25e3"/><stop offset="0.750" stop-color="#ff12b1"/><stop offset="0.875" stop-color="#ff068d"/><stop offset="1.000" stop-color="#ff0072"/></linearGradient><linearGradient id="f110" gradientUnits="userSpaceOnUse" x1="1205.7" y1="0" x2="1634.7" y2="0"><stop offset="0.000" stop-color="#00439b"/><stop offset="0.053" stop-color="#00409b"/><stop offset="0.105" stop-color="#003c9b"/><stop offset="0.158" stop-color="#00389b"/><stop offset="0.211" stop-color="#00349b"/><stop offset="0.263" stop-color="#112f9b"/><stop offset="0.316" stop-color="#2d2a9b"/><stop offset="0.368" stop-color="#4c249b"/><stop offset="0.421" stop-color="#6e1e9b"/><stop offset="0.474" stop-color="#94179b"/><stop offset="0.526" stop-color="#9b0c7e"/><stop offset="0.579" stop-color="#9b0465"/><stop offset="0.632" stop-color="#9b0052"/><stop offset="0.684" stop-color="#9b0044"/><stop offset="0.737" stop-color="#9b0038"/><stop offset="0.789" stop-color="#9b002f"/><stop offset="0.842" stop-color="#9b0027"/><stop offset="0.895" stop-color="#9b0021"/><stop offset="0.947" stop-color="#9b001c"/><stop offset="1.000" stop-color="#9b0017"/></linearGradient><linearGradient id="f111" gradientUnits="userSpaceOnUse" x1="1300.5" y1="0" x2="1479.4" y2="0"><stop offset="0.000" stop-color="#0054ff"/><stop offset="0.125" stop-color="#244cff"/><stop offset="0.250" stop-color="#5343ff"/><stop offset="0.375" stop-color="#863aff"/><stop offset="0.500" stop-color="#bf30ff"/><stop offset="0.625" stop-color="#fe24ff"/><stop offset="0.750" stop-color="#ff12c8"/><stop offset="0.875" stop-color="#ff05a1"/><stop offset="1.000" stop-color="#ff0084"/></linearGradient><linearGradient id="f112" gradientUnits="userSpaceOnUse" x1="1208.0" y1="0" x2="1617.6" y2="0"><stop offset="0.000" stop-color="#003e9b"/><stop offset="0.056" stop-color="#003a9b"/><stop offset="0.111" stop-color="#00379b"/><stop offset="0.167" stop-color="#00329b"/><stop offset="0.222" stop-color="#002e9b"/><stop offset="0.278" stop-color="#17299b"/><stop offset="0.333" stop-color="#33249b"/><stop offset="0.389" stop-color="#521e9b"/><stop offset="0.444" stop-color="#75179b"/><stop offset="0.500" stop-color="#9b109b"/><stop offset="0.556" stop-color="#9b067a"/><stop offset="0.611" stop-color="#9b0062"/><stop offset="0.667" stop-color="#9b0050"/><stop offset="0.722" stop-color="#9b0043"/><stop offset="0.778" stop-color="#9b0038"/><stop offset="0.833" stop-color="#9b002f"/><stop offset="0.889" stop-color="#9b0027"/><stop offset="0.944" stop-color="#9b0021"/><stop offset="1.000" stop-color="#9b001b"/></linearGradient><linearGradient id="f113" gradientUnits="userSpaceOnUse" x1="1298.3" y1="0" x2="1465.0" y2="0"><stop offset="0.000" stop-color="#004cff"/><stop offset="0.143" stop-color="#2643ff"/><stop offset="0.286" stop-color="#573aff"/><stop offset="0.429" stop-color="#8d30ff"/><stop offset="0.571" stop-color="#c924ff"/><stop offset="0.714" stop-color="#ff16f2"/><stop offset="0.857" stop-color="#ff07bd"/><stop offset="1.000" stop-color="#ff0098"/></linearGradient><linearGradient id="f114" gradientUnits="userSpaceOnUse" x1="1210.4" y1="0" x2="1600.5" y2="0"><stop offset="0.000" stop-color="#00399b"/><stop offset="0.059" stop-color="#00359b"/><stop offset="0.118" stop-color="#00319b"/><stop offset="0.176" stop-color="#002d9b"/><stop offset="0.235" stop-color="#03289b"/><stop offset="0.294" stop-color="#1d239b"/><stop offset="0.353" stop-color="#391d9b"/><stop offset="0.412" stop-color="#58179b"/><stop offset="0.471" stop-color="#7b109b"/><stop offset="0.529" stop-color="#9b0895"/><stop offset="0.588" stop-color="#9b0076"/><stop offset="0.647" stop-color="#9b005f"/><stop offset="0.706" stop-color="#9b004f"/><stop offset="0.765" stop-color="#9b0041"/><stop offset="0.824" stop-color="#9b0037"/><stop offset="0.882" stop-color="#9b002e"/><stop offset="0.941" stop-color="#9b0027"/><stop offset="1.000" stop-color="#9b0021"/></linearGradient><linearGradient id="f115" gradientUnits="userSpaceOnUse" x1="1296.1" y1="0" x2="1450.6" y2="0"><stop offset="0.000" stop-color="#0044ff"/><stop offset="0.143" stop-color="#223cff"/><stop offset="0.286" stop-color="#4e34ff"/><stop offset="0.429" stop-color="#7d2aff"/><stop offset="0.571" stop-color="#b220ff"/><stop offset="0.714" stop-color="#eb14ff"/><stop offset="0.857" stop-color="#ff06d9"/><stop offset="1.000" stop-color="#ff00af"/></linearGradient><linearGradient id="f116" gradientUnits="userSpaceOnUse" x1="1212.9" y1="0" x2="1583.3" y2="0"><stop offset="0.000" stop-color="#00349b"/><stop offset="0.062" stop-color="#00309b"/><stop offset="0.125" stop-color="#002c9b"/><stop offset="0.188" stop-color="#00289b"/><stop offset="0.250" stop-color="#09239b"/><stop offset="0.312" stop-color="#231d9b"/><stop offset="0.375" stop-color="#3f179b"/><stop offset="0.438" stop-color="#5f119b"/><stop offset="0.500" stop-color="#820a9b"/><stop offset="0.562" stop-color="#9b018f"/><stop offset="0.625" stop-color="#9b0072"/><stop offset="0.688" stop-color="#9b005d"/><stop offset="0.750" stop-color="#9b004d"/><stop offset="0.812" stop-color="#9b0040"/><stop offset="0.875" stop-color="#9b0036"/><stop offset="0.938" stop-color="#9b002d"/><stop offset="1.000" stop-color="#9b0026"/></linearGradient><linearGradient id="f117" gradientUnits="userSpaceOnUse" x1="1293.9" y1="0" x2="1436.1" y2="0"><stop offset="0.000" stop-color="#003dff"/><stop offset="0.167" stop-color="#2434ff"/><stop offset="0.333" stop-color="#522bff"/><stop offset="0.500" stop-color="#8520ff"/><stop offset="0.667" stop-color="#bd15ff"/><stop offset="0.833" stop-color="#fb08ff"/><stop offset="1.000" stop-color="#ff00cb"/></linearGradient><linearGradient id="f118" gradientUnits="userSpaceOnUse" x1="1215.6" y1="0" x2="1566.2" y2="0"><stop offset="0.000" stop-color="#002f9b"/><stop offset="0.067" stop-color="#002b9b"/><stop offset="0.133" stop-color="#00279b"/><stop offset="0.200" stop-color="#00229b"/><stop offset="0.267" stop-color="#0f1d9b"/><stop offset="0.333" stop-color="#29179b"/><stop offset="0.400" stop-color="#46119b"/><stop offset="0.467" stop-color="#660a9b"/><stop offset="0.533" stop-color="#88039b"/><stop offset="0.600" stop-color="#9b0089"/><stop offset="0.667" stop-color="#9b006e"/><stop offset="0.733" stop-color="#9b005a"/><stop offset="0.800" stop-color="#9b004b"/><stop offset="0.867" stop-color="#9b003f"/><stop offset="0.933" stop-color="#9b0035"/><stop offset="1.000" stop-color="#9b002d"/></linearGradient><linearGradient id="f119" gradientUnits="userSpaceOnUse" x1="1291.7" y1="0" x2="1421.7" y2="0"><stop offset="0.000" stop-color="#0036ff"/><stop offset="0.200" stop-color="#282dff"/><stop offset="0.400" stop-color="#5a22ff"/><stop offset="0.600" stop-color="#9116ff"/><stop offset="0.800" stop-color="#cf09ff"/><stop offset="1.000" stop-color="#ff00eb"/></linearGradient><linearGradient id="f120" gradientUnits="userSpaceOnUse" x1="1218.5" y1="0" x2="1549.1" y2="0"><stop offset="0.000" stop-color="#002b9b"/><stop offset="0.067" stop-color="#00279b"/><stop offset="0.133" stop-color="#00239b"/><stop offset="0.200" stop-color="#001e9b"/><stop offset="0.267" stop-color="#0e199b"/><stop offset="0.333" stop-color="#26149b"/><stop offset="0.400" stop-color="#410e9b"/><stop offset="0.467" stop-color="#5d089b"/><stop offset="0.533" stop-color="#7c019b"/><stop offset="0.600" stop-color="#9b0097"/><stop offset="0.667" stop-color="#9b007a"/><stop offset="0.733" stop-color="#9b0065"/><stop offset="0.800" stop-color="#9b0054"/><stop offset="0.867" stop-color="#9b0047"/><stop offset="0.933" stop-color="#9b003c"/><stop offset="1.000" stop-color="#9b0034"/></linearGradient><linearGradient id="f121" gradientUnits="userSpaceOnUse" x1="1289.5" y1="0" x2="1407.3" y2="0"><stop offset="0.000" stop-color="#0030ff"/><stop offset="0.200" stop-color="#2227ff"/><stop offset="0.400" stop-color="#4e1dff"/><stop offset="0.600" stop-color="#7e13ff"/><stop offset="0.800" stop-color="#b207ff"/><stop offset="1.000" stop-color="#ec00ff"/></linearGradient><linearGradient id="f122" gradientUnits="userSpaceOnUse" x1="1221.4" y1="0" x2="1532.0" y2="0"><stop offset="0.000" stop-color="#00269b"/><stop offset="0.071" stop-color="#00229b"/><stop offset="0.143" stop-color="#001e9b"/><stop offset="0.214" stop-color="#00199b"/><stop offset="0.286" stop-color="#14149b"/><stop offset="0.357" stop-color="#2c0e9b"/><stop offset="0.429" stop-color="#46089b"/><stop offset="0.500" stop-color="#63029b"/><stop offset="0.571" stop-color="#83009b"/><stop offset="0.643" stop-color="#9b0092"/><stop offset="0.714" stop-color="#9b0076"/><stop offset="0.786" stop-color="#9b0062"/><stop offset="0.857" stop-color="#9b0052"/><stop offset="0.929" stop-color="#9b0046"/><stop offset="1.000" stop-color="#9b003b"/></linearGradient><linearGradient id="f123" gradientUnits="userSpaceOnUse" x1="1287.3" y1="0" x2="1392.8" y2="0"><stop offset="0.000" stop-color="#0029ff"/><stop offset="0.250" stop-color="#271fff"/><stop offset="0.500" stop-color="#5714ff"/><stop offset="0.750" stop-color="#8d08ff"/><stop offset="1.000" stop-color="#c800ff"/></linearGradient><linearGradient id="f124" gradientUnits="userSpaceOnUse" x1="1224.5" y1="0" x2="1514.8" y2="0"><stop offset="0.000" stop-color="#00229b"/><stop offset="0.077" stop-color="#001d9b"/><stop offset="0.154" stop-color="#00199b"/><stop offset="0.231" stop-color="#03149b"/><stop offset="0.308" stop-color="#190f9b"/><stop offset="0.385" stop-color="#32099b"/><stop offset="0.462" stop-color="#4c039b"/><stop offset="0.538" stop-color="#69009b"/><stop offset="0.615" stop-color="#89009b"/><stop offset="0.692" stop-color="#9b008c"/><stop offset="0.769" stop-color="#9b0073"/><stop offset="0.846" stop-color="#9b0060"/><stop offset="0.923" stop-color="#9b0050"/><stop offset="1.000" stop-color="#9b0044"/></linearGradient><linearGradient id="f125" gradientUnits="userSpaceOnUse" x1="1285.1" y1="0" x2="1378.4" y2="0"><stop offset="0.000" stop-color="#0023ff"/><stop offset="0.250" stop-color="#211aff"/><stop offset="0.500" stop-color="#4a11ff"/><stop offset="0.750" stop-color="#7706ff"/><stop offset="1.000" stop-color="#a800ff"/></linearGradient><linearGradient id="f126" gradientUnits="userSpaceOnUse" x1="1227.7" y1="0" x2="1497.7" y2="0"><stop offset="0.000" stop-color="#001d9b"/><stop offset="0.083" stop-color="#00199b"/><stop offset="0.167" stop-color="#00149b"/><stop offset="0.250" stop-color="#080f9b"/><stop offset="0.333" stop-color="#1f0a9b"/><stop offset="0.417" stop-color="#38049b"/><stop offset="0.500" stop-color="#52009b"/><stop offset="0.583" stop-color="#70009b"/><stop offset="0.667" stop-color="#8f009b"/><stop offset="0.750" stop-color="#9b0087"/><stop offset="0.833" stop-color="#9b006f"/><stop offset="0.917" stop-color="#9b005d"/><stop offset="1.000" stop-color="#9b004f"/></linearGradient><linearGradient id="f127" gradientUnits="userSpaceOnUse" x1="1282.9" y1="0" x2="1364.0" y2="0"><stop offset="0.000" stop-color="#001dff"/><stop offset="0.333" stop-color="#2613ff"/><stop offset="0.667" stop-color="#5608ff"/><stop offset="1.000" stop-color="#8a00ff"/></linearGradient><linearGradient id="f128" gradientUnits="userSpaceOnUse" x1="1231.0" y1="0" x2="1480.6" y2="0"><stop offset="0.000" stop-color="#00199b"/><stop offset="0.091" stop-color="#00149b"/><stop offset="0.182" stop-color="#000f9b"/><stop offset="0.273" stop-color="#0e0a9b"/><stop offset="0.364" stop-color="#25049b"/><stop offset="0.455" stop-color="#3e009b"/><stop offset="0.545" stop-color="#59009b"/><stop offset="0.636" stop-color="#76009b"/><stop offset="0.727" stop-color="#96009b"/><stop offset="0.818" stop-color="#9b0082"/><stop offset="0.909" stop-color="#9b006c"/><stop offset="1.000" stop-color="#9b005a"/></linearGradient><linearGradient id="f129" gradientUnits="userSpaceOnUse" x1="1280.7" y1="0" x2="1349.5" y2="0"><stop offset="0.000" stop-color="#0018ff"/><stop offset="0.333" stop-color="#1f0fff"/><stop offset="0.667" stop-color="#4506ff"/><stop offset="1.000" stop-color="#6f00ff"/></linearGradient><linearGradient id="f130" gradientUnits="userSpaceOnUse" x1="1234.4" y1="0" x2="1463.5" y2="0"><stop offset="0.000" stop-color="#00149b"/><stop offset="0.100" stop-color="#00109b"/><stop offset="0.200" stop-color="#000b9b"/><stop offset="0.300" stop-color="#14059b"/><stop offset="0.400" stop-color="#2b009b"/><stop offset="0.500" stop-color="#44009b"/><stop offset="0.600" stop-color="#5f009b"/><stop offset="0.700" stop-color="#7d009b"/><stop offset="0.800" stop-color="#9b0099"/><stop offset="0.900" stop-color="#9b007d"/><stop offset="1.000" stop-color="#9b0068"/></linearGradient><linearGradient id="f131" gradientUnits="userSpaceOnUse" x1="1278.5" y1="0" x2="1335.1" y2="0"><stop offset="0.000" stop-color="#0013ff"/><stop offset="0.500" stop-color="#2708ff"/><stop offset="1.000" stop-color="#5700ff"/></linearGradient><linearGradient id="f132" gradientUnits="userSpaceOnUse" x1="1237.8" y1="0" x2="1446.3" y2="0"><stop offset="0.000" stop-color="#00109b"/><stop offset="0.111" stop-color="#000b9b"/><stop offset="0.222" stop-color="#04069b"/><stop offset="0.333" stop-color="#1a019b"/><stop offset="0.444" stop-color="#31009b"/><stop offset="0.556" stop-color="#4a009b"/><stop offset="0.667" stop-color="#66009b"/><stop offset="0.778" stop-color="#84009b"/><stop offset="0.889" stop-color="#9b0092"/><stop offset="1.000" stop-color="#9b0078"/></linearGradient><linearGradient id="f133" gradientUnits="userSpaceOnUse" x1="1276.2" y1="0" x2="1320.7" y2="0"><stop offset="0.000" stop-color="#000dff"/><stop offset="0.500" stop-color="#1c05ff"/><stop offset="1.000" stop-color="#4000ff"/></linearGradient><linearGradient id="f134" gradientUnits="userSpaceOnUse" x1="1241.4" y1="0" x2="1429.2" y2="0"><stop offset="0.000" stop-color="#000c9b"/><stop offset="0.125" stop-color="#00079b"/><stop offset="0.250" stop-color="#09029b"/><stop offset="0.375" stop-color="#20009b"/><stop offset="0.500" stop-color="#37009b"/><stop offset="0.625" stop-color="#51009b"/><stop offset="0.750" stop-color="#6d009b"/><stop offset="0.875" stop-color="#8b009b"/><stop offset="1.000" stop-color="#9b008b"/></linearGradient><linearGradient id="f135" gradientUnits="userSpaceOnUse" x1="1274.0" y1="0" x2="1306.3" y2="0"><stop offset="0.000" stop-color="#0008ff"/><stop offset="1.000" stop-color="#2b00ff"/></linearGradient><linearGradient id="f136" gradientUnits="userSpaceOnUse" x1="1245.0" y1="0" x2="1412.1" y2="0"><stop offset="0.000" stop-color="#00089b"/><stop offset="0.143" stop-color="#00039b"/><stop offset="0.286" stop-color="#0f009b"/><stop offset="0.429" stop-color="#26009b"/><stop offset="0.571" stop-color="#3e009b"/><stop offset="0.714" stop-color="#58009b"/><stop offset="0.857" stop-color="#75009b"/><stop offset="1.000" stop-color="#94009b"/></linearGradient><linearGradient id="f137" gradientUnits="userSpaceOnUse" x1="1271.8" y1="0" x2="1291.8" y2="0"><stop offset="0.000" stop-color="#0004ff"/><stop offset="1.000" stop-color="#1800ff"/></linearGradient><linearGradient id="f138" gradientUnits="userSpaceOnUse" x1="1248.8" y1="0" x2="1395.0" y2="0"><stop offset="0.000" stop-color="#00049b"/><stop offset="0.167" stop-color="#00009b"/><stop offset="0.333" stop-color="#15009b"/><stop offset="0.500" stop-color="#2c009b"/><stop offset="0.667" stop-color="#45009b"/><stop offset="0.833" stop-color="#60009b"/><stop offset="1.000" stop-color="#7d009b"/></linearGradient><linearGradient id="f139" gradientUnits="userSpaceOnUse" x1="1271.8" y1="0" x2="1277.4" y2="0"><stop offset="0.000" stop-color="#0000ff"/><stop offset="1.000" stop-color="#0600ff"/></linearGradient><linearGradient id="f140" gradientUnits="userSpaceOnUse" x1="1253.0" y1="0" x2="1377.8" y2="0"><stop offset="0.000" stop-color="#00009b"/><stop offset="0.200" stop-color="#06009b"/><stop offset="0.400" stop-color="#1c009b"/><stop offset="0.600" stop-color="#33009b"/><stop offset="0.800" stop-color="#4d009b"/><stop offset="1.000" stop-color="#69009b"/></linearGradient><linearGradient id="f141" gradientUnits="userSpaceOnUse" x1="1258.2" y1="0" x2="1360.7" y2="0"><stop offset="0.000" stop-color="#00009b"/><stop offset="0.250" stop-color="#0c009b"/><stop offset="0.500" stop-color="#23009b"/><stop offset="0.750" stop-color="#3c009b"/><stop offset="1.000" stop-color="#56009b"/></linearGradient><linearGradient id="f142" gradientUnits="userSpaceOnUse" x1="1264.8" y1="0" x2="1343.6" y2="0"><stop offset="0.000" stop-color="#00009b"/><stop offset="0.333" stop-color="#14009b"/><stop offset="0.667" stop-color="#2c009b"/><stop offset="1.000" stop-color="#45009b"/></linearGradient><linearGradient id="f143" gradientUnits="userSpaceOnUse" x1="1272.2" y1="0" x2="1326.5" y2="0"><stop offset="0.000" stop-color="#06009b"/><stop offset="0.500" stop-color="#1d009b"/><stop offset="1.000" stop-color="#35009b"/></linearGradient><linearGradient id="f144" gradientUnits="userSpaceOnUse" x1="1281.5" y1="0" x2="1309.3" y2="0"><stop offset="0.000" stop-color="#0f009b"/><stop offset="1.000" stop-color="#27009b"/></linearGradient><clipPath id="cHs"><path d="M1293.4,666.9 L1293.3,666.9 L1293.3,666.9 L1293.2,666.9 L1293.1,667.0 L1293.0,667.0 L1293.0,667.0 L1292.8,667.0 L1292.7,667.0 L1292.6,667.0 L1292.4,667.0 L1292.2,667.0 L1292.0,667.0 L1291.8,667.0 L1291.6,667.0 L1291.4,666.9 L1291.1,666.8 L1290.9,666.7 L1290.7,666.7 L1290.5,666.5 L1290.2,666.4 L1290.0,666.3 L1289.7,666.1 L1289.4,665.9 L1289.1,665.7 L1288.7,665.5 L1288.3,665.2 L1287.9,665.0 L1287.5,664.7 L1287.0,664.4 L1286.5,664.0 L1286.0,663.6 L1285.4,663.2 L1284.7,662.8 L1284.1,662.4 L1283.4,661.9 L1282.6,661.4 L1281.8,660.9 L1280.9,660.3 L1280.0,659.7 L1279.0,659.0 L1277.9,658.3 L1276.8,657.6 L1275.6,656.9 L1274.4,656.1 L1273.1,655.2 L1271.7,654.2 L1270.2,653.0 L1268.6,651.6 L1266.9,650.1 L1265.2,648.6 L1263.4,647.0 L1261.5,645.3 L1259.4,643.2 L1257.2,640.8 L1254.8,637.8 L1252.2,634.1 L1249.3,629.7 L1246.1,624.5 L1242.5,618.6 L1238.9,612.4 L1235.2,606.1 L1231.7,599.7 L1228.3,593.5 L1225.3,587.7 L1222.6,582.3 L1220.1,577.2 L1217.7,572.2 L1215.5,567.3 L1213.3,562.3 L1211.2,557.1 L1209.0,551.5 L1206.7,545.5 L1204.3,539.0 L1201.9,532.3 L1199.5,525.4 L1197.1,518.1 L1194.7,510.7 L1192.3,503.0 L1189.9,495.1 L1187.5,487.0 L1185.2,478.6 L1182.8,469.8 L1180.4,460.8 L1178.1,451.7 L1175.8,442.3 L1173.6,432.9 L1171.5,423.4 L1169.5,413.9 L1167.7,404.4 L1165.9,394.7 L1164.2,384.9 L1162.6,375.0 L1161.1,365.1 L1159.8,355.3 L1158.6,345.5 L1157.6,335.9 L1156.8,326.3 L1156.2,316.7 L1155.7,307.1 L1155.3,297.5 L1155.1,288.1 L1155.1,278.9 L1155.1,269.9 L1155.2,261.3 L1155.5,252.8 L1155.8,244.3 L1156.4,236.0 L1157.0,227.9 L1157.7,220.2 L1158.5,213.0 L1159.4,206.4 L1160.4,200.6 L1161.4,195.6 L1162.6,191.4 L1163.9,187.8 L1165.2,184.8 L1166.6,182.1 L1168.0,179.5 L1169.5,177.1 L1171.0,174.6 L1172.4,172.1 L1173.8,169.8 L1175.1,167.7 L1176.5,165.8 L1178.1,164.0 L1179.9,162.3 L1182.0,160.7 L1184.6,159.1 L1187.6,157.5 L1191.0,155.9 L1194.7,154.4 L1198.7,153.0 L1202.8,151.7 L1207.1,150.7 L1211.5,150.0 L1215.8,149.7 L1220.2,149.7 L1224.5,150.0 L1229.0,150.6 L1233.5,151.4 L1238.2,152.5 L1243.2,153.8 L1248.3,155.3 L1253.8,157.0 L1259.6,158.9 L1265.8,161.0 L1272.3,163.3 L1279.0,165.8 L1285.7,168.6 L1292.5,171.6 L1299.3,174.7 L1305.9,178.1 L1312.4,181.9 L1319.1,186.0 L1325.9,190.5 L1332.6,195.1 L1339.3,199.7 L1345.7,204.3 L1352.0,208.7 L1357.9,212.8 L1363.6,216.7 L1369.1,220.4 L1374.4,224.0 L1379.5,227.5 L1384.4,230.9 L1389.2,234.2 L1393.8,237.4 L1398.2,240.4 L1402.4,243.3 L1406.3,246.1 L1410.0,248.7 L1413.6,251.2 L1417.0,253.6 L1420.5,256.1 L1424.0,258.6 L1427.6,261.2 L1431.0,263.6 L1434.2,265.9 L1437.3,268.1 L1440.5,270.4 L1443.8,272.9 L1447.6,275.6 L1451.9,278.8 L1457.0,282.5 L1462.9,286.9 L1469.6,291.8 L1476.9,297.2 L1484.5,302.8 L1492.4,308.7 L1500.3,314.5 L1508.0,320.3 L1515.4,325.8 L1522.5,331.2 L1529.7,336.5 L1536.8,341.9 L1543.9,347.2 L1551.0,352.5 L1557.9,357.8 L1564.8,363.0 L1571.6,368.1 L1578.4,373.1 L1585.1,378.1 L1591.7,383.1 L1598.3,388.1 L1604.7,392.9 L1611.0,397.7 L1617.2,402.3 L1623.2,406.8 L1629.0,411.2 L1634.7,415.5 L1640.3,419.7 L1645.7,423.7 L1651.0,427.7 L1656.1,431.6 L1661.0,435.3 L1665.8,438.9 L1670.4,442.3 L1674.8,445.6 L1679.0,448.8 L1683.1,451.8 L1687.0,454.7 L1690.7,457.5 L1694.3,460.2 L1697.7,462.8 L1700.9,465.2 L1703.9,467.4 L1706.7,469.6 L1709.4,471.6 L1711.9,473.5 L1714.3,475.3 L1716.6,477.0 L1718.8,478.7 L1720.9,480.3 L1722.8,481.7 L1724.6,483.1 L1726.3,484.3 L1727.9,485.5 L1729.4,486.6 L1730.9,487.7 L1732.3,488.8 L1733.7,489.9 L1735.0,490.8 L1736.2,491.7 L1737.4,492.6 L1738.4,493.4 L1739.5,494.2 L1740.5,495.0 L1741.4,495.7 L1742.3,496.4 L1743.1,497.0 L1743.9,497.5 L1744.6,498.0 L1745.2,498.5 L1745.9,499.0 L1746.5,499.5 L1747.2,500.0 L1747.9,500.5 L1748.5,501.0 L1749.2,501.5 L1749.9,502.0 L1750.5,502.5 L1751.1,502.9 L1751.6,503.3 L1752.1,503.7 L1752.5,504.0 L1752.9,504.3 L1753.3,504.6 L1753.5,504.8 L1753.8,505.0 L1754.0,505.1 L1754.2,505.3 L1754.3,505.4Z"/></clipPath><clipPath id="cTr"><path d="M1676.5,465.2 L1396.9,297.7 L1273.5,632.8Z"/></clipPath></defs>
<g id="cieFallback"><g clip-path="url(#cHs)"><rect x="1199.9" y="146.0" width="38.1" height="6.6" fill="url(#f1)"/><rect x="1184.6" y="152.0" width="74.4" height="6.6" fill="url(#f2)"/><rect x="1176.0" y="158.0" width="100.1" height="6.6" fill="url(#f3)"/><rect x="1171.7" y="164.0" width="119.3" height="6.6" fill="url(#f4)"/><rect x="1168.2" y="170.0" width="135.5" height="6.6" fill="url(#f5)"/><rect x="1164.6" y="176.0" width="150.1" height="6.6" fill="url(#f6)"/><rect x="1161.8" y="182.0" width="162.4" height="6.6" fill="url(#f7)"/><rect x="1159.9" y="188.0" width="173.2" height="6.6" fill="url(#f8)"/><rect x="1158.5" y="194.0" width="183.1" height="6.6" fill="url(#f9)"/><rect x="1157.5" y="200.0" width="192.6" height="6.6" fill="url(#f10)"/><rect x="1156.7" y="206.0" width="202.0" height="6.6" fill="url(#f11)"/><rect x="1156.0" y="212.0" width="211.6" height="6.6" fill="url(#f12)"/><rect x="1155.4" y="218.0" width="221.0" height="6.6" fill="url(#f13)"/><rect x="1154.8" y="224.0" width="230.3" height="6.6" fill="url(#f14)"/><rect x="1154.4" y="230.0" width="239.4" height="6.6" fill="url(#f15)"/><rect x="1154.0" y="236.0" width="248.5" height="6.6" fill="url(#f16)"/><rect x="1153.7" y="242.0" width="257.4" height="6.6" fill="url(#f17)"/><rect x="1153.4" y="248.0" width="266.1" height="6.6" fill="url(#f18)"/><rect x="1153.3" y="254.0" width="274.7" height="6.6" fill="url(#f19)"/><rect x="1153.1" y="260.0" width="283.2" height="6.6" fill="url(#f20)"/><rect x="1153.1" y="266.0" width="291.6" height="6.6" fill="url(#f21)"/><rect x="1153.1" y="272.0" width="299.8" height="6.6" fill="url(#f22)"/><rect x="1153.1" y="278.0" width="308.0" height="6.6" fill="url(#f23)"/><rect x="1153.1" y="284.0" width="316.1" height="6.6" fill="url(#f24)"/><rect x="1153.2" y="290.0" width="324.1" height="6.6" fill="url(#f25)"/><rect x="1153.3" y="296.0" width="332.1" height="6.6" fill="url(#f26)"/><rect x="1153.5" y="302.0" width="340.0" height="6.6" fill="url(#f28)"/><rect x="1153.7" y="308.0" width="347.8" height="6.6" fill="url(#f30)"/><rect x="1154.0" y="314.0" width="355.6" height="6.6" fill="url(#f32)"/><rect x="1154.4" y="320.0" width="363.3" height="6.6" fill="url(#f34)"/><rect x="1154.8" y="326.0" width="370.9" height="6.6" fill="url(#f36)"/><rect x="1155.3" y="332.0" width="378.4" height="6.6" fill="url(#f38)"/><rect x="1155.8" y="338.0" width="385.8" height="6.6" fill="url(#f40)"/><rect x="1156.4" y="344.0" width="393.2" height="6.6" fill="url(#f42)"/><rect x="1157.1" y="350.0" width="400.5" height="6.6" fill="url(#f44)"/><rect x="1157.9" y="356.0" width="407.7" height="6.6" fill="url(#f46)"/><rect x="1158.7" y="362.0" width="414.9" height="6.6" fill="url(#f48)"/><rect x="1159.5" y="368.0" width="422.0" height="6.6" fill="url(#f50)"/><rect x="1160.4" y="374.0" width="429.1" height="6.6" fill="url(#f52)"/><rect x="1161.4" y="380.0" width="436.1" height="6.6" fill="url(#f54)"/><rect x="1162.4" y="386.0" width="443.1" height="6.6" fill="url(#f56)"/><rect x="1163.4" y="392.0" width="450.1" height="6.6" fill="url(#f58)"/><rect x="1164.5" y="398.0" width="457.0" height="6.6" fill="url(#f60)"/><rect x="1165.6" y="404.0" width="463.9" height="6.6" fill="url(#f62)"/><rect x="1166.8" y="410.0" width="470.7" height="6.6" fill="url(#f64)"/><rect x="1168.0" y="416.0" width="477.4" height="6.6" fill="url(#f66)"/><rect x="1169.2" y="422.0" width="484.2" height="6.6" fill="url(#f68)"/><rect x="1170.5" y="428.0" width="490.8" height="6.6" fill="url(#f70)"/><rect x="1171.8" y="434.0" width="497.5" height="6.6" fill="url(#f72)"/><rect x="1173.2" y="440.0" width="504.1" height="6.6" fill="url(#f74)"/><rect x="1174.7" y="446.0" width="510.6" height="6.6" fill="url(#f76)"/><rect x="1176.2" y="452.0" width="517.2" height="6.6" fill="url(#f78)"/><rect x="1177.7" y="458.0" width="523.6" height="6.6" fill="url(#f80)"/><rect x="1179.3" y="464.0" width="530.0" height="6.6" fill="url(#f82)"/><rect x="1180.8" y="470.0" width="536.4" height="6.6" fill="url(#f84)"/><rect x="1182.5" y="476.0" width="542.7" height="6.6" fill="url(#f86)"/><rect x="1184.1" y="482.0" width="549.1" height="6.6" fill="url(#f88)"/><rect x="1185.8" y="488.0" width="555.3" height="6.6" fill="url(#f90)"/><rect x="1187.6" y="494.0" width="561.6" height="6.6" fill="url(#f92)"/><rect x="1189.4" y="500.0" width="565.8" height="6.6" fill="url(#f94)"/><rect x="1191.2" y="506.0" width="563.4" height="6.6" fill="url(#f96)"/><rect x="1193.1" y="512.0" width="544.4" height="6.6" fill="url(#f98)"/><rect x="1195.0" y="518.0" width="525.3" height="6.6" fill="url(#f100)"/><rect x="1197.0" y="524.0" width="506.2" height="6.6" fill="url(#f102)"/><rect x="1199.1" y="530.0" width="487.0" height="6.6" fill="url(#f104)"/><rect x="1201.2" y="536.0" width="467.7" height="6.6" fill="url(#f106)"/><rect x="1203.4" y="542.0" width="448.4" height="6.6" fill="url(#f108)"/><rect x="1205.7" y="548.0" width="429.0" height="6.6" fill="url(#f110)"/><rect x="1208.0" y="554.0" width="409.6" height="6.6" fill="url(#f112)"/><rect x="1210.4" y="560.0" width="390.1" height="6.6" fill="url(#f114)"/><rect x="1212.9" y="566.0" width="370.4" height="6.6" fill="url(#f116)"/><rect x="1215.6" y="572.0" width="350.6" height="6.6" fill="url(#f118)"/><rect x="1218.5" y="578.0" width="330.6" height="6.6" fill="url(#f120)"/><rect x="1221.4" y="584.0" width="310.5" height="6.6" fill="url(#f122)"/><rect x="1224.5" y="590.0" width="290.3" height="6.6" fill="url(#f124)"/><rect x="1227.7" y="596.0" width="270.0" height="6.6" fill="url(#f126)"/><rect x="1231.0" y="602.0" width="249.6" height="6.6" fill="url(#f128)"/><rect x="1234.4" y="608.0" width="229.1" height="6.6" fill="url(#f130)"/><rect x="1237.8" y="614.0" width="208.5" height="6.6" fill="url(#f132)"/><rect x="1241.4" y="620.0" width="187.9" height="6.6" fill="url(#f134)"/><rect x="1245.0" y="626.0" width="167.1" height="6.6" fill="url(#f136)"/><rect x="1248.8" y="632.0" width="146.1" height="6.6" fill="url(#f138)"/><rect x="1253.0" y="638.0" width="124.8" height="6.6" fill="url(#f140)"/><rect x="1258.2" y="644.0" width="102.5" height="6.6" fill="url(#f141)"/><rect x="1264.8" y="650.0" width="78.7" height="6.6" fill="url(#f142)"/><rect x="1272.2" y="656.0" width="54.2" height="6.6" fill="url(#f143)"/><rect x="1281.5" y="662.0" width="27.9" height="6.6" fill="url(#f144)"/></g><g clip-path="url(#cTr)"><rect x="1393.3" y="296.0" width="12.8" height="6.6" fill="url(#f27)"/><rect x="1391.1" y="302.0" width="25.0" height="6.6" fill="url(#f29)"/><rect x="1388.9" y="308.0" width="37.2" height="6.6" fill="url(#f31)"/><rect x="1386.7" y="314.0" width="49.4" height="6.6" fill="url(#f33)"/><rect x="1384.5" y="320.0" width="61.6" height="6.6" fill="url(#f35)"/><rect x="1382.3" y="326.0" width="73.9" height="6.6" fill="url(#f37)"/><rect x="1380.1" y="332.0" width="86.1" height="6.6" fill="url(#f39)"/><rect x="1377.8" y="338.0" width="98.3" height="6.6" fill="url(#f41)"/><rect x="1375.6" y="344.0" width="110.5" height="6.6" fill="url(#f43)"/><rect x="1373.4" y="350.0" width="122.8" height="6.6" fill="url(#f45)"/><rect x="1371.2" y="356.0" width="135.0" height="6.6" fill="url(#f47)"/><rect x="1369.0" y="362.0" width="147.2" height="6.6" fill="url(#f49)"/><rect x="1366.8" y="368.0" width="159.4" height="6.6" fill="url(#f51)"/><rect x="1364.6" y="374.0" width="171.6" height="6.6" fill="url(#f53)"/><rect x="1362.4" y="380.0" width="183.9" height="6.6" fill="url(#f55)"/><rect x="1360.2" y="386.0" width="196.1" height="6.6" fill="url(#f57)"/><rect x="1358.0" y="392.0" width="208.3" height="6.6" fill="url(#f59)"/><rect x="1355.8" y="398.0" width="220.5" height="6.6" fill="url(#f61)"/><rect x="1353.6" y="404.0" width="232.7" height="6.6" fill="url(#f63)"/><rect x="1351.3" y="410.0" width="245.0" height="6.6" fill="url(#f65)"/><rect x="1349.1" y="416.0" width="257.2" height="6.6" fill="url(#f67)"/><rect x="1346.9" y="422.0" width="269.4" height="6.6" fill="url(#f69)"/><rect x="1344.7" y="428.0" width="281.6" height="6.6" fill="url(#f71)"/><rect x="1342.5" y="434.0" width="293.9" height="6.6" fill="url(#f73)"/><rect x="1340.3" y="440.0" width="306.1" height="6.6" fill="url(#f75)"/><rect x="1338.1" y="446.0" width="318.3" height="6.6" fill="url(#f77)"/><rect x="1335.9" y="452.0" width="330.5" height="6.6" fill="url(#f79)"/><rect x="1333.7" y="458.0" width="342.7" height="6.6" fill="url(#f81)"/><rect x="1331.5" y="464.0" width="346.4" height="6.6" fill="url(#f83)"/><rect x="1329.3" y="470.0" width="337.8" height="6.6" fill="url(#f85)"/><rect x="1327.0" y="476.0" width="325.5" height="6.6" fill="url(#f87)"/><rect x="1324.8" y="482.0" width="313.3" height="6.6" fill="url(#f89)"/><rect x="1322.6" y="488.0" width="301.1" height="6.6" fill="url(#f91)"/><rect x="1320.4" y="494.0" width="288.9" height="6.6" fill="url(#f93)"/><rect x="1318.2" y="500.0" width="276.6" height="6.6" fill="url(#f95)"/><rect x="1316.0" y="506.0" width="264.4" height="6.6" fill="url(#f97)"/><rect x="1313.8" y="512.0" width="252.2" height="6.6" fill="url(#f99)"/><rect x="1311.6" y="518.0" width="240.0" height="6.6" fill="url(#f101)"/><rect x="1309.4" y="524.0" width="227.8" height="6.6" fill="url(#f103)"/><rect x="1307.2" y="530.0" width="215.5" height="6.6" fill="url(#f105)"/><rect x="1305.0" y="536.0" width="203.3" height="6.6" fill="url(#f107)"/><rect x="1302.8" y="542.0" width="191.1" height="6.6" fill="url(#f109)"/><rect x="1300.5" y="548.0" width="178.9" height="6.6" fill="url(#f111)"/><rect x="1298.3" y="554.0" width="166.7" height="6.6" fill="url(#f113)"/><rect x="1296.1" y="560.0" width="154.4" height="6.6" fill="url(#f115)"/><rect x="1293.9" y="566.0" width="142.2" height="6.6" fill="url(#f117)"/><rect x="1291.7" y="572.0" width="130.0" height="6.6" fill="url(#f119)"/><rect x="1289.5" y="578.0" width="117.8" height="6.6" fill="url(#f121)"/><rect x="1287.3" y="584.0" width="105.5" height="6.6" fill="url(#f123)"/><rect x="1285.1" y="590.0" width="93.3" height="6.6" fill="url(#f125)"/><rect x="1282.9" y="596.0" width="81.1" height="6.6" fill="url(#f127)"/><rect x="1280.7" y="602.0" width="68.9" height="6.6" fill="url(#f129)"/><rect x="1278.5" y="608.0" width="56.7" height="6.6" fill="url(#f131)"/><rect x="1276.2" y="614.0" width="44.4" height="6.6" fill="url(#f133)"/><rect x="1274.0" y="620.0" width="32.2" height="6.6" fill="url(#f135)"/><rect x="1271.8" y="626.0" width="20.0" height="6.6" fill="url(#f137)"/><rect x="1271.8" y="632.0" width="5.6" height="6.6" fill="url(#f139)"/></g></g>
<defs><linearGradient id="f145" gradientUnits="userSpaceOnUse" x1="1600.5" y1="0" x2="1834.5" y2="0"><stop offset="0.000" stop-color="#afff00"/><stop offset="0.062" stop-color="#b4ff00"/><stop offset="0.125" stop-color="#baff00"/><stop offset="0.188" stop-color="#c1ff00"/><stop offset="0.250" stop-color="#c7ff00"/><stop offset="0.312" stop-color="#cdff00"/><stop offset="0.375" stop-color="#d3ff00"/><stop offset="0.438" stop-color="#d9ff00"/><stop offset="0.500" stop-color="#e0ff00"/><stop offset="0.562" stop-color="#e6ff00"/><stop offset="0.625" stop-color="#edff00"/><stop offset="0.688" stop-color="#f3ff00"/><stop offset="0.750" stop-color="#faff00"/><stop offset="0.812" stop-color="#fffc00"/><stop offset="0.875" stop-color="#fff600"/><stop offset="0.938" stop-color="#ffef00"/><stop offset="1.000" stop-color="#ffe900"/></linearGradient><linearGradient id="f146" gradientUnits="userSpaceOnUse" x1="1600.5" y1="0" x2="1834.5" y2="0"><stop offset="0.000" stop-color="#6a9b00"/><stop offset="0.062" stop-color="#6e9b00"/><stop offset="0.125" stop-color="#729b00"/><stop offset="0.188" stop-color="#759b00"/><stop offset="0.250" stop-color="#799b00"/><stop offset="0.312" stop-color="#7d9b00"/><stop offset="0.375" stop-color="#819b00"/><stop offset="0.438" stop-color="#849b00"/><stop offset="0.500" stop-color="#889b00"/><stop offset="0.562" stop-color="#8c9b00"/><stop offset="0.625" stop-color="#909b00"/><stop offset="0.688" stop-color="#949b00"/><stop offset="0.750" stop-color="#989b00"/><stop offset="0.812" stop-color="#9b9a00"/><stop offset="0.875" stop-color="#9b9600"/><stop offset="0.938" stop-color="#9b9200"/><stop offset="1.000" stop-color="#9b8e00"/></linearGradient><linearGradient id="f147" gradientUnits="userSpaceOnUse" x1="1600.5" y1="0" x2="1834.5" y2="0"><stop offset="0.000" stop-color="#b0ff00"/><stop offset="0.062" stop-color="#b6ff00"/><stop offset="0.125" stop-color="#bcff00"/><stop offset="0.188" stop-color="#c2ff00"/><stop offset="0.250" stop-color="#c8ff00"/><stop offset="0.312" stop-color="#ceff00"/><stop offset="0.375" stop-color="#d4ff00"/><stop offset="0.438" stop-color="#dbff00"/><stop offset="0.500" stop-color="#e1ff00"/><stop offset="0.562" stop-color="#e8ff00"/><stop offset="0.625" stop-color="#eeff00"/><stop offset="0.688" stop-color="#f5ff00"/><stop offset="0.750" stop-color="#fbff00"/><stop offset="0.812" stop-color="#fffb00"/><stop offset="0.875" stop-color="#fff400"/><stop offset="0.938" stop-color="#ffee00"/><stop offset="1.000" stop-color="#ffe800"/></linearGradient><linearGradient id="f148" gradientUnits="userSpaceOnUse" x1="1600.5" y1="0" x2="1834.5" y2="0"><stop offset="0.000" stop-color="#6b9b00"/><stop offset="0.062" stop-color="#6f9b00"/><stop offset="0.125" stop-color="#729b00"/><stop offset="0.188" stop-color="#769b00"/><stop offset="0.250" stop-color="#7a9b00"/><stop offset="0.312" stop-color="#7d9b00"/><stop offset="0.375" stop-color="#819b00"/><stop offset="0.438" stop-color="#859b00"/><stop offset="0.500" stop-color="#899b00"/><stop offset="0.562" stop-color="#8d9b00"/><stop offset="0.625" stop-color="#919b00"/><stop offset="0.688" stop-color="#959b00"/><stop offset="0.750" stop-color="#999b00"/><stop offset="0.812" stop-color="#9b9900"/><stop offset="0.875" stop-color="#9b9500"/><stop offset="0.938" stop-color="#9b9100"/><stop offset="1.000" stop-color="#9b8d00"/></linearGradient><linearGradient id="f149" gradientUnits="userSpaceOnUse" x1="1600.5" y1="0" x2="1834.5" y2="0"><stop offset="0.000" stop-color="#b1ff00"/><stop offset="0.062" stop-color="#b7ff00"/><stop offset="0.125" stop-color="#bdff00"/><stop offset="0.188" stop-color="#c3ff00"/><stop offset="0.250" stop-color="#c9ff00"/><stop offset="0.312" stop-color="#cfff00"/><stop offset="0.375" stop-color="#d5ff00"/><stop offset="0.438" stop-color="#dcff00"/><stop offset="0.500" stop-color="#e2ff00"/><stop offset="0.562" stop-color="#e9ff00"/><stop offset="0.625" stop-color="#efff00"/><stop offset="0.688" stop-color="#f6ff00"/><stop offset="0.750" stop-color="#fdff00"/><stop offset="0.812" stop-color="#fff900"/><stop offset="0.875" stop-color="#fff300"/><stop offset="0.938" stop-color="#ffed00"/><stop offset="1.000" stop-color="#ffe700"/></linearGradient><linearGradient id="f150" gradientUnits="userSpaceOnUse" x1="1600.5" y1="0" x2="1834.5" y2="0"><stop offset="0.000" stop-color="#6c9b00"/><stop offset="0.062" stop-color="#6f9b00"/><stop offset="0.125" stop-color="#739b00"/><stop offset="0.188" stop-color="#779b00"/><stop offset="0.250" stop-color="#7a9b00"/><stop offset="0.312" stop-color="#7e9b00"/><stop offset="0.375" stop-color="#829b00"/><stop offset="0.438" stop-color="#869b00"/><stop offset="0.500" stop-color="#8a9b00"/><stop offset="0.562" stop-color="#8e9b00"/><stop offset="0.625" stop-color="#929b00"/><stop offset="0.688" stop-color="#969b00"/><stop offset="0.750" stop-color="#9a9b00"/><stop offset="0.812" stop-color="#9b9800"/><stop offset="0.875" stop-color="#9b9400"/><stop offset="0.938" stop-color="#9b9000"/><stop offset="1.000" stop-color="#9b8d00"/></linearGradient><linearGradient id="f151" gradientUnits="userSpaceOnUse" x1="1600.5" y1="0" x2="1834.5" y2="0"><stop offset="0.000" stop-color="#b2ff00"/><stop offset="0.062" stop-color="#b8ff00"/><stop offset="0.125" stop-color="#beff00"/><stop offset="0.188" stop-color="#c4ff00"/><stop offset="0.250" stop-color="#caff00"/><stop offset="0.312" stop-color="#d0ff00"/><stop offset="0.375" stop-color="#d7ff00"/><stop offset="0.438" stop-color="#ddff00"/><stop offset="0.500" stop-color="#e3ff00"/><stop offset="0.562" stop-color="#eaff00"/><stop offset="0.625" stop-color="#f1ff00"/><stop offset="0.688" stop-color="#f7ff00"/><stop offset="0.750" stop-color="#feff00"/><stop offset="0.812" stop-color="#fff800"/><stop offset="0.875" stop-color="#fff200"/><stop offset="0.938" stop-color="#ffec00"/><stop offset="1.000" stop-color="#ffe600"/></linearGradient><linearGradient id="f152" gradientUnits="userSpaceOnUse" x1="1600.5" y1="0" x2="1834.5" y2="0"><stop offset="0.000" stop-color="#6c9b00"/><stop offset="0.062" stop-color="#709b00"/><stop offset="0.125" stop-color="#749b00"/><stop offset="0.188" stop-color="#779b00"/><stop offset="0.250" stop-color="#7b9b00"/><stop offset="0.312" stop-color="#7f9b00"/><stop offset="0.375" stop-color="#839b00"/><stop offset="0.438" stop-color="#879b00"/><stop offset="0.500" stop-color="#8b9b00"/><stop offset="0.562" stop-color="#8f9b00"/><stop offset="0.625" stop-color="#939b00"/><stop offset="0.688" stop-color="#979b00"/><stop offset="0.750" stop-color="#9b9b00"/><stop offset="0.812" stop-color="#9b9700"/><stop offset="0.875" stop-color="#9b9300"/><stop offset="0.938" stop-color="#9b9000"/><stop offset="1.000" stop-color="#9b8c00"/></linearGradient><linearGradient id="f153" gradientUnits="userSpaceOnUse" x1="1600.5" y1="0" x2="1834.5" y2="0"><stop offset="0.000" stop-color="#b3ff00"/><stop offset="0.062" stop-color="#b9ff00"/><stop offset="0.125" stop-color="#bfff00"/><stop offset="0.188" stop-color="#c5ff00"/><stop offset="0.250" stop-color="#cbff00"/><stop offset="0.312" stop-color="#d1ff00"/><stop offset="0.375" stop-color="#d8ff00"/><stop offset="0.438" stop-color="#deff00"/><stop offset="0.500" stop-color="#e5ff00"/><stop offset="0.562" stop-color="#ebff00"/><stop offset="0.625" stop-color="#f2ff00"/><stop offset="0.688" stop-color="#f9ff00"/><stop offset="0.750" stop-color="#fffe00"/><stop offset="0.812" stop-color="#fff700"/><stop offset="0.875" stop-color="#fff000"/><stop offset="0.938" stop-color="#ffea00"/><stop offset="1.000" stop-color="#ffe400"/></linearGradient><linearGradient id="f154" gradientUnits="userSpaceOnUse" x1="1600.5" y1="0" x2="1834.5" y2="0"><stop offset="0.000" stop-color="#6d9b00"/><stop offset="0.062" stop-color="#709b00"/><stop offset="0.125" stop-color="#749b00"/><stop offset="0.188" stop-color="#789b00"/><stop offset="0.250" stop-color="#7c9b00"/><stop offset="0.312" stop-color="#809b00"/><stop offset="0.375" stop-color="#839b00"/><stop offset="0.438" stop-color="#879b00"/><stop offset="0.500" stop-color="#8b9b00"/><stop offset="0.562" stop-color="#8f9b00"/><stop offset="0.625" stop-color="#939b00"/><stop offset="0.688" stop-color="#989b00"/><stop offset="0.750" stop-color="#9b9a00"/><stop offset="0.812" stop-color="#9b9600"/><stop offset="0.875" stop-color="#9b9200"/><stop offset="0.938" stop-color="#9b8f00"/><stop offset="1.000" stop-color="#9b8b00"/></linearGradient><linearGradient id="f155" gradientUnits="userSpaceOnUse" x1="1600.5" y1="0" x2="1834.5" y2="0"><stop offset="0.000" stop-color="#b4ff00"/><stop offset="0.062" stop-color="#baff00"/><stop offset="0.125" stop-color="#c0ff00"/><stop offset="0.188" stop-color="#c6ff00"/><stop offset="0.250" stop-color="#ccff00"/><stop offset="0.312" stop-color="#d3ff00"/><stop offset="0.375" stop-color="#d9ff00"/><stop offset="0.438" stop-color="#dfff00"/><stop offset="0.500" stop-color="#e6ff00"/><stop offset="0.562" stop-color="#edff00"/><stop offset="0.625" stop-color="#f3ff00"/><stop offset="0.688" stop-color="#faff00"/><stop offset="0.750" stop-color="#fffc00"/><stop offset="0.812" stop-color="#fff600"/><stop offset="0.875" stop-color="#ffef00"/><stop offset="0.938" stop-color="#ffe900"/><stop offset="1.000" stop-color="#ffe300"/></linearGradient><linearGradient id="f156" gradientUnits="userSpaceOnUse" x1="1600.5" y1="0" x2="1834.5" y2="0"><stop offset="0.000" stop-color="#6d9b00"/><stop offset="0.062" stop-color="#719b00"/><stop offset="0.125" stop-color="#759b00"/><stop offset="0.188" stop-color="#799b00"/><stop offset="0.250" stop-color="#7c9b00"/><stop offset="0.312" stop-color="#809b00"/><stop offset="0.375" stop-color="#849b00"/><stop offset="0.438" stop-color="#889b00"/><stop offset="0.500" stop-color="#8c9b00"/><stop offset="0.562" stop-color="#909b00"/><stop offset="0.625" stop-color="#949b00"/><stop offset="0.688" stop-color="#989b00"/><stop offset="0.750" stop-color="#9b9a00"/><stop offset="0.812" stop-color="#9b9600"/><stop offset="0.875" stop-color="#9b9200"/><stop offset="0.938" stop-color="#9b8e00"/><stop offset="1.000" stop-color="#9b8a00"/></linearGradient><linearGradient id="f157" gradientUnits="userSpaceOnUse" x1="1600.5" y1="0" x2="1834.5" y2="0"><stop offset="0.000" stop-color="#b5ff00"/><stop offset="0.062" stop-color="#bbff00"/><stop offset="0.125" stop-color="#c1ff00"/><stop offset="0.188" stop-color="#c7ff00"/><stop offset="0.250" stop-color="#cdff00"/><stop offset="0.312" stop-color="#d4ff00"/><stop offset="0.375" stop-color="#daff00"/><stop offset="0.438" stop-color="#e1ff00"/><stop offset="0.500" stop-color="#e7ff00"/><stop offset="0.562" stop-color="#eeff00"/><stop offset="0.625" stop-color="#f5ff00"/><stop offset="0.688" stop-color="#fbff00"/><stop offset="0.750" stop-color="#fffb00"/><stop offset="0.812" stop-color="#fff400"/><stop offset="0.875" stop-color="#ffee00"/><stop offset="0.938" stop-color="#ffe800"/><stop offset="1.000" stop-color="#ffe200"/></linearGradient><linearGradient id="f158" gradientUnits="userSpaceOnUse" x1="1600.5" y1="0" x2="1834.5" y2="0"><stop offset="0.000" stop-color="#6e9b00"/><stop offset="0.062" stop-color="#729b00"/><stop offset="0.125" stop-color="#759b00"/><stop offset="0.188" stop-color="#799b00"/><stop offset="0.250" stop-color="#7d9b00"/><stop offset="0.312" stop-color="#819b00"/><stop offset="0.375" stop-color="#859b00"/><stop offset="0.438" stop-color="#899b00"/><stop offset="0.500" stop-color="#8d9b00"/><stop offset="0.562" stop-color="#919b00"/><stop offset="0.625" stop-color="#959b00"/><stop offset="0.688" stop-color="#999b00"/><stop offset="0.750" stop-color="#9b9900"/><stop offset="0.812" stop-color="#9b9500"/><stop offset="0.875" stop-color="#9b9100"/><stop offset="0.938" stop-color="#9b8d00"/><stop offset="1.000" stop-color="#9b8a00"/></linearGradient><linearGradient id="f159" gradientUnits="userSpaceOnUse" x1="1600.5" y1="0" x2="1834.5" y2="0"><stop offset="0.000" stop-color="#b6ff01"/><stop offset="0.062" stop-color="#bcff00"/><stop offset="0.125" stop-color="#c2ff00"/><stop offset="0.188" stop-color="#c8ff00"/><stop offset="0.250" stop-color="#cfff00"/><stop offset="0.312" stop-color="#d5ff00"/><stop offset="0.375" stop-color="#dbff00"/><stop offset="0.438" stop-color="#e2ff00"/><stop offset="0.500" stop-color="#e8ff00"/><stop offset="0.562" stop-color="#efff00"/><stop offset="0.625" stop-color="#f6ff00"/><stop offset="0.688" stop-color="#fdff00"/><stop offset="0.750" stop-color="#fff900"/><stop offset="0.812" stop-color="#fff300"/><stop offset="0.875" stop-color="#ffed00"/><stop offset="0.938" stop-color="#ffe700"/><stop offset="1.000" stop-color="#ffe100"/></linearGradient><linearGradient id="f160" gradientUnits="userSpaceOnUse" x1="1600.5" y1="0" x2="1834.5" y2="0"><stop offset="0.000" stop-color="#6f9b00"/><stop offset="0.062" stop-color="#729b00"/><stop offset="0.125" stop-color="#769b00"/><stop offset="0.188" stop-color="#7a9b00"/><stop offset="0.250" stop-color="#7e9b00"/><stop offset="0.312" stop-color="#829b00"/><stop offset="0.375" stop-color="#869b00"/><stop offset="0.438" stop-color="#8a9b00"/><stop offset="0.500" stop-color="#8e9b00"/><stop offset="0.562" stop-color="#929b00"/><stop offset="0.625" stop-color="#969b00"/><stop offset="0.688" stop-color="#9a9b00"/><stop offset="0.750" stop-color="#9b9800"/><stop offset="0.812" stop-color="#9b9400"/><stop offset="0.875" stop-color="#9b9000"/><stop offset="0.938" stop-color="#9b8d00"/><stop offset="1.000" stop-color="#9b8900"/></linearGradient><linearGradient id="f161" gradientUnits="userSpaceOnUse" x1="1600.5" y1="0" x2="1834.5" y2="0"><stop offset="0.000" stop-color="#b7ff01"/><stop offset="0.062" stop-color="#bdff00"/><stop offset="0.125" stop-color="#c3ff00"/><stop offset="0.188" stop-color="#c9ff00"/><stop offset="0.250" stop-color="#d0ff00"/><stop offset="0.312" stop-color="#d6ff00"/><stop offset="0.375" stop-color="#ddff00"/><stop offset="0.438" stop-color="#e3ff00"/><stop offset="0.500" stop-color="#eaff00"/><stop offset="0.562" stop-color="#f0ff00"/><stop offset="0.625" stop-color="#f7ff00"/><stop offset="0.688" stop-color="#feff00"/><stop offset="0.750" stop-color="#fff800"/><stop offset="0.812" stop-color="#fff200"/><stop offset="0.875" stop-color="#ffeb00"/><stop offset="0.938" stop-color="#ffe500"/><stop offset="1.000" stop-color="#ffe000"/></linearGradient><linearGradient id="f162" gradientUnits="userSpaceOnUse" x1="1600.5" y1="0" x2="1834.5" y2="0"><stop offset="0.000" stop-color="#6f9b01"/><stop offset="0.062" stop-color="#739b00"/><stop offset="0.125" stop-color="#779b00"/><stop offset="0.188" stop-color="#7b9b00"/><stop offset="0.250" stop-color="#7f9b00"/><stop offset="0.312" stop-color="#829b00"/><stop offset="0.375" stop-color="#869b00"/><stop offset="0.438" stop-color="#8a9b00"/><stop offset="0.500" stop-color="#8e9b00"/><stop offset="0.562" stop-color="#929b00"/><stop offset="0.625" stop-color="#979b00"/><stop offset="0.688" stop-color="#9b9b00"/><stop offset="0.750" stop-color="#9b9700"/><stop offset="0.812" stop-color="#9b9300"/><stop offset="0.875" stop-color="#9b8f00"/><stop offset="0.938" stop-color="#9b8c00"/><stop offset="1.000" stop-color="#9b8800"/></linearGradient><linearGradient id="f163" gradientUnits="userSpaceOnUse" x1="1600.5" y1="0" x2="1834.5" y2="0"><stop offset="0.000" stop-color="#b8ff02"/><stop offset="0.062" stop-color="#beff01"/><stop offset="0.125" stop-color="#c4ff00"/><stop offset="0.188" stop-color="#cbff00"/><stop offset="0.250" stop-color="#d1ff00"/><stop offset="0.312" stop-color="#d7ff00"/><stop offset="0.375" stop-color="#deff00"/><stop offset="0.438" stop-color="#e4ff00"/><stop offset="0.500" stop-color="#ebff00"/><stop offset="0.562" stop-color="#f2ff00"/><stop offset="0.625" stop-color="#f9ff00"/><stop offset="0.688" stop-color="#fffe00"/><stop offset="0.750" stop-color="#fff700"/><stop offset="0.812" stop-color="#fff000"/><stop offset="0.875" stop-color="#ffea00"/><stop offset="0.938" stop-color="#ffe400"/><stop offset="1.000" stop-color="#ffde00"/></linearGradient><linearGradient id="f164" gradientUnits="userSpaceOnUse" x1="1600.5" y1="0" x2="1834.5" y2="0"><stop offset="0.000" stop-color="#709b01"/><stop offset="0.062" stop-color="#749b00"/><stop offset="0.125" stop-color="#789b00"/><stop offset="0.188" stop-color="#7b9b00"/><stop offset="0.250" stop-color="#7f9b00"/><stop offset="0.312" stop-color="#839b00"/><stop offset="0.375" stop-color="#879b00"/><stop offset="0.438" stop-color="#8b9b00"/><stop offset="0.500" stop-color="#8f9b00"/><stop offset="0.562" stop-color="#939b00"/><stop offset="0.625" stop-color="#979b00"/><stop offset="0.688" stop-color="#9b9a00"/><stop offset="0.750" stop-color="#9b9600"/><stop offset="0.812" stop-color="#9b9200"/><stop offset="0.875" stop-color="#9b8f00"/><stop offset="0.938" stop-color="#9b8b00"/><stop offset="1.000" stop-color="#9b8800"/></linearGradient><linearGradient id="f165" gradientUnits="userSpaceOnUse" x1="1600.5" y1="0" x2="1834.5" y2="0"><stop offset="0.000" stop-color="#b9ff02"/><stop offset="0.062" stop-color="#bfff01"/><stop offset="0.125" stop-color="#c5ff00"/><stop offset="0.188" stop-color="#ccff00"/><stop offset="0.250" stop-color="#d2ff00"/><stop offset="0.312" stop-color="#d9ff00"/><stop offset="0.375" stop-color="#dfff00"/><stop offset="0.438" stop-color="#e6ff00"/><stop offset="0.500" stop-color="#ecff00"/><stop offset="0.562" stop-color="#f3ff00"/><stop offset="0.625" stop-color="#faff00"/><stop offset="0.688" stop-color="#fffc00"/><stop offset="0.750" stop-color="#fff500"/><stop offset="0.812" stop-color="#ffef00"/><stop offset="0.875" stop-color="#ffe900"/><stop offset="0.938" stop-color="#ffe300"/><stop offset="1.000" stop-color="#ffdd00"/></linearGradient><linearGradient id="f166" gradientUnits="userSpaceOnUse" x1="1600.5" y1="0" x2="1834.5" y2="0"><stop offset="0.000" stop-color="#719b01"/><stop offset="0.062" stop-color="#749b00"/><stop offset="0.125" stop-color="#789b00"/><stop offset="0.188" stop-color="#7c9b00"/><stop offset="0.250" stop-color="#809b00"/><stop offset="0.312" stop-color="#849b00"/><stop offset="0.375" stop-color="#889b00"/><stop offset="0.438" stop-color="#8c9b00"/><stop offset="0.500" stop-color="#909b00"/><stop offset="0.562" stop-color="#949b00"/><stop offset="0.625" stop-color="#989b00"/><stop offset="0.688" stop-color="#9b9a00"/><stop offset="0.750" stop-color="#9b9600"/><stop offset="0.812" stop-color="#9b9200"/><stop offset="0.875" stop-color="#9b8e00"/><stop offset="0.938" stop-color="#9b8a00"/><stop offset="1.000" stop-color="#9b8700"/></linearGradient><linearGradient id="f167" gradientUnits="userSpaceOnUse" x1="1600.5" y1="0" x2="1834.5" y2="0"><stop offset="0.000" stop-color="#baff03"/><stop offset="0.062" stop-color="#c0ff02"/><stop offset="0.125" stop-color="#c6ff00"/><stop offset="0.188" stop-color="#cdff00"/><stop offset="0.250" stop-color="#d3ff00"/><stop offset="0.312" stop-color="#daff00"/><stop offset="0.375" stop-color="#e0ff00"/><stop offset="0.438" stop-color="#e7ff00"/><stop offset="0.500" stop-color="#eeff00"/><stop offset="0.562" stop-color="#f4ff00"/><stop offset="0.625" stop-color="#fbff00"/><stop offset="0.688" stop-color="#fffb00"/><stop offset="0.750" stop-color="#fff400"/><stop offset="0.812" stop-color="#ffee00"/><stop offset="0.875" stop-color="#ffe800"/><stop offset="0.938" stop-color="#ffe200"/><stop offset="1.000" stop-color="#ffdc00"/></linearGradient><linearGradient id="f168" gradientUnits="userSpaceOnUse" x1="1600.5" y1="0" x2="1834.5" y2="0"><stop offset="0.000" stop-color="#719b02"/><stop offset="0.062" stop-color="#759b01"/><stop offset="0.125" stop-color="#799b00"/><stop offset="0.188" stop-color="#7d9b00"/><stop offset="0.250" stop-color="#819b00"/><stop offset="0.312" stop-color="#859b00"/><stop offset="0.375" stop-color="#899b00"/><stop offset="0.438" stop-color="#8d9b00"/><stop offset="0.500" stop-color="#919b00"/><stop offset="0.562" stop-color="#959b00"/><stop offset="0.625" stop-color="#999b00"/><stop offset="0.688" stop-color="#9b9900"/><stop offset="0.750" stop-color="#9b9500"/><stop offset="0.812" stop-color="#9b9100"/><stop offset="0.875" stop-color="#9b8d00"/><stop offset="0.938" stop-color="#9b8a00"/><stop offset="1.000" stop-color="#9b8600"/></linearGradient><linearGradient id="f169" gradientUnits="userSpaceOnUse" x1="1600.5" y1="0" x2="1834.5" y2="0"><stop offset="0.000" stop-color="#bbff04"/><stop offset="0.062" stop-color="#c1ff02"/><stop offset="0.125" stop-color="#c8ff01"/><stop offset="0.188" stop-color="#ceff00"/><stop offset="0.250" stop-color="#d4ff00"/><stop offset="0.312" stop-color="#dbff00"/><stop offset="0.375" stop-color="#e2ff00"/><stop offset="0.438" stop-color="#e8ff00"/><stop offset="0.500" stop-color="#efff00"/><stop offset="0.562" stop-color="#f6ff00"/><stop offset="0.625" stop-color="#fdff00"/><stop offset="0.688" stop-color="#fff900"/><stop offset="0.750" stop-color="#fff300"/><stop offset="0.812" stop-color="#ffed00"/><stop offset="0.875" stop-color="#ffe600"/><stop offset="0.938" stop-color="#ffe100"/><stop offset="1.000" stop-color="#ffdb00"/></linearGradient><linearGradient id="f170" gradientUnits="userSpaceOnUse" x1="1600.5" y1="0" x2="1834.5" y2="0"><stop offset="0.000" stop-color="#729b02"/><stop offset="0.062" stop-color="#769b01"/><stop offset="0.125" stop-color="#7a9b00"/><stop offset="0.188" stop-color="#7d9b00"/><stop offset="0.250" stop-color="#819b00"/><stop offset="0.312" stop-color="#859b00"/><stop offset="0.375" stop-color="#899b00"/><stop offset="0.438" stop-color="#8d9b00"/><stop offset="0.500" stop-color="#929b00"/><stop offset="0.562" stop-color="#969b00"/><stop offset="0.625" stop-color="#9a9b00"/><stop offset="0.688" stop-color="#9b9800"/><stop offset="0.750" stop-color="#9b9400"/><stop offset="0.812" stop-color="#9b9000"/><stop offset="0.875" stop-color="#9b8c00"/><stop offset="0.938" stop-color="#9b8900"/><stop offset="1.000" stop-color="#9b8500"/></linearGradient><linearGradient id="f171" gradientUnits="userSpaceOnUse" x1="1600.5" y1="0" x2="1834.5" y2="0"><stop offset="0.000" stop-color="#bcff04"/><stop offset="0.062" stop-color="#c2ff03"/><stop offset="0.125" stop-color="#c9ff01"/><stop offset="0.188" stop-color="#cfff00"/><stop offset="0.250" stop-color="#d6ff00"/><stop offset="0.312" stop-color="#dcff00"/><stop offset="0.375" stop-color="#e3ff00"/><stop offset="0.438" stop-color="#e9ff00"/><stop offset="0.500" stop-color="#f0ff00"/><stop offset="0.562" stop-color="#f7ff00"/><stop offset="0.625" stop-color="#feff00"/><stop offset="0.688" stop-color="#fff800"/><stop offset="0.750" stop-color="#fff200"/><stop offset="0.812" stop-color="#ffeb00"/><stop offset="0.875" stop-color="#ffe500"/><stop offset="0.938" stop-color="#ffdf00"/><stop offset="1.000" stop-color="#ffda00"/></linearGradient><linearGradient id="f172" gradientUnits="userSpaceOnUse" x1="1600.5" y1="0" x2="1834.5" y2="0"><stop offset="0.000" stop-color="#739b02"/><stop offset="0.062" stop-color="#769b02"/><stop offset="0.125" stop-color="#7a9b01"/><stop offset="0.188" stop-color="#7e9b00"/><stop offset="0.250" stop-color="#829b00"/><stop offset="0.312" stop-color="#869b00"/><stop offset="0.375" stop-color="#8a9b00"/><stop offset="0.438" stop-color="#8e9b00"/><stop offset="0.500" stop-color="#929b00"/><stop offset="0.562" stop-color="#979b00"/><stop offset="0.625" stop-color="#9b9b00"/><stop offset="0.688" stop-color="#9b9700"/><stop offset="0.750" stop-color="#9b9300"/><stop offset="0.812" stop-color="#9b8f00"/><stop offset="0.875" stop-color="#9b8c00"/><stop offset="0.938" stop-color="#9b8800"/><stop offset="1.000" stop-color="#9b8500"/></linearGradient><linearGradient id="f173" gradientUnits="userSpaceOnUse" x1="1600.5" y1="0" x2="1834.5" y2="0"><stop offset="0.000" stop-color="#bdff05"/><stop offset="0.062" stop-color="#c4ff03"/><stop offset="0.125" stop-color="#caff02"/><stop offset="0.188" stop-color="#d0ff01"/><stop offset="0.250" stop-color="#d7ff00"/><stop offset="0.312" stop-color="#ddff00"/><stop offset="0.375" stop-color="#e4ff00"/><stop offset="0.438" stop-color="#ebff00"/><stop offset="0.500" stop-color="#f2ff00"/><stop offset="0.562" stop-color="#f8ff00"/><stop offset="0.625" stop-color="#fffe00"/><stop offset="0.688" stop-color="#fff700"/><stop offset="0.750" stop-color="#fff000"/><stop offset="0.812" stop-color="#ffea00"/><stop offset="0.875" stop-color="#ffe400"/><stop offset="0.938" stop-color="#ffde00"/><stop offset="1.000" stop-color="#ffd900"/></linearGradient><linearGradient id="f174" gradientUnits="userSpaceOnUse" x1="1600.5" y1="0" x2="1834.5" y2="0"><stop offset="0.000" stop-color="#739b03"/><stop offset="0.062" stop-color="#779b02"/><stop offset="0.125" stop-color="#7b9b01"/><stop offset="0.188" stop-color="#7f9b00"/><stop offset="0.250" stop-color="#839b00"/><stop offset="0.312" stop-color="#879b00"/><stop offset="0.375" stop-color="#8b9b00"/><stop offset="0.438" stop-color="#8f9b00"/><stop offset="0.500" stop-color="#939b00"/><stop offset="0.562" stop-color="#979b00"/><stop offset="0.625" stop-color="#9b9a00"/><stop offset="0.688" stop-color="#9b9600"/><stop offset="0.750" stop-color="#9b9200"/><stop offset="0.812" stop-color="#9b8f00"/><stop offset="0.875" stop-color="#9b8b00"/><stop offset="0.938" stop-color="#9b8700"/><stop offset="1.000" stop-color="#9b8400"/></linearGradient><linearGradient id="f175" gradientUnits="userSpaceOnUse" x1="1600.5" y1="0" x2="1834.5" y2="0"><stop offset="0.000" stop-color="#beff05"/><stop offset="0.062" stop-color="#c5ff04"/><stop offset="0.125" stop-color="#cbff03"/><stop offset="0.188" stop-color="#d2ff01"/><stop offset="0.250" stop-color="#d8ff00"/><stop offset="0.312" stop-color="#dfff00"/><stop offset="0.375" stop-color="#e5ff00"/><stop offset="0.438" stop-color="#ecff00"/><stop offset="0.500" stop-color="#f3ff00"/><stop offset="0.562" stop-color="#faff00"/><stop offset="0.625" stop-color="#fffc00"/><stop offset="0.688" stop-color="#fff500"/><stop offset="0.750" stop-color="#ffef00"/><stop offset="0.812" stop-color="#ffe900"/><stop offset="0.875" stop-color="#ffe300"/><stop offset="0.938" stop-color="#ffdd00"/><stop offset="1.000" stop-color="#ffd700"/></linearGradient><linearGradient id="f176" gradientUnits="userSpaceOnUse" x1="1600.5" y1="0" x2="1834.5" y2="0"><stop offset="0.000" stop-color="#749b03"/><stop offset="0.062" stop-color="#789b02"/><stop offset="0.125" stop-color="#7c9b01"/><stop offset="0.188" stop-color="#809b01"/><stop offset="0.250" stop-color="#849b00"/><stop offset="0.312" stop-color="#889b00"/><stop offset="0.375" stop-color="#8c9b00"/><stop offset="0.438" stop-color="#909b00"/><stop offset="0.500" stop-color="#949b00"/><stop offset="0.562" stop-color="#989b00"/><stop offset="0.625" stop-color="#9b9a00"/><stop offset="0.688" stop-color="#9b9600"/><stop offset="0.750" stop-color="#9b9200"/><stop offset="0.812" stop-color="#9b8e00"/><stop offset="0.875" stop-color="#9b8a00"/><stop offset="0.938" stop-color="#9b8700"/><stop offset="1.000" stop-color="#9b8300"/></linearGradient><linearGradient id="f177" gradientUnits="userSpaceOnUse" x1="1600.5" y1="0" x2="1834.5" y2="0"><stop offset="0.000" stop-color="#bfff06"/><stop offset="0.062" stop-color="#c6ff05"/><stop offset="0.125" stop-color="#ccff03"/><stop offset="0.188" stop-color="#d3ff02"/><stop offset="0.250" stop-color="#d9ff00"/><stop offset="0.312" stop-color="#e0ff00"/><stop offset="0.375" stop-color="#e7ff00"/><stop offset="0.438" stop-color="#edff00"/><stop offset="0.500" stop-color="#f4ff00"/><stop offset="0.562" stop-color="#fbff00"/><stop offset="0.625" stop-color="#fffb00"/><stop offset="0.688" stop-color="#fff400"/><stop offset="0.750" stop-color="#ffee00"/><stop offset="0.812" stop-color="#ffe700"/><stop offset="0.875" stop-color="#ffe200"/><stop offset="0.938" stop-color="#ffdc00"/><stop offset="1.000" stop-color="#ffd600"/></linearGradient><linearGradient id="f178" gradientUnits="userSpaceOnUse" x1="1600.5" y1="0" x2="1834.5" y2="0"><stop offset="0.000" stop-color="#759b03"/><stop offset="0.062" stop-color="#789b03"/><stop offset="0.125" stop-color="#7c9b02"/><stop offset="0.188" stop-color="#809b01"/><stop offset="0.250" stop-color="#849b00"/><stop offset="0.312" stop-color="#889b00"/><stop offset="0.375" stop-color="#8c9b00"/><stop offset="0.438" stop-color="#919b00"/><stop offset="0.500" stop-color="#959b00"/><stop offset="0.562" stop-color="#999b00"/><stop offset="0.625" stop-color="#9b9900"/><stop offset="0.688" stop-color="#9b9500"/><stop offset="0.750" stop-color="#9b9100"/><stop offset="0.812" stop-color="#9b8d00"/><stop offset="0.875" stop-color="#9b8900"/><stop offset="0.938" stop-color="#9b8600"/><stop offset="1.000" stop-color="#9b8300"/></linearGradient><linearGradient id="f179" gradientUnits="userSpaceOnUse" x1="1600.5" y1="0" x2="1834.5" y2="0"><stop offset="0.000" stop-color="#c1ff07"/><stop offset="0.062" stop-color="#c7ff05"/><stop offset="0.125" stop-color="#cdff04"/><stop offset="0.188" stop-color="#d4ff02"/><stop offset="0.250" stop-color="#daff01"/><stop offset="0.312" stop-color="#e1ff00"/><stop offset="0.375" stop-color="#e8ff00"/><stop offset="0.438" stop-color="#efff00"/><stop offset="0.500" stop-color="#f6ff00"/><stop offset="0.562" stop-color="#fdff00"/><stop offset="0.625" stop-color="#fff900"/><stop offset="0.688" stop-color="#fff300"/><stop offset="0.750" stop-color="#ffec00"/><stop offset="0.812" stop-color="#ffe600"/><stop offset="0.875" stop-color="#ffe000"/><stop offset="0.938" stop-color="#ffdb00"/><stop offset="1.000" stop-color="#ffd500"/></linearGradient><linearGradient id="f180" gradientUnits="userSpaceOnUse" x1="1600.5" y1="0" x2="1834.5" y2="0"><stop offset="0.000" stop-color="#759b04"/><stop offset="0.062" stop-color="#799b03"/><stop offset="0.125" stop-color="#7d9b02"/><stop offset="0.188" stop-color="#819b01"/><stop offset="0.250" stop-color="#859b00"/><stop offset="0.312" stop-color="#899b00"/><stop offset="0.375" stop-color="#8d9b00"/><stop offset="0.438" stop-color="#919b00"/><stop offset="0.500" stop-color="#969b00"/><stop offset="0.562" stop-color="#9a9b00"/><stop offset="0.625" stop-color="#9b9800"/><stop offset="0.688" stop-color="#9b9400"/><stop offset="0.750" stop-color="#9b9000"/><stop offset="0.812" stop-color="#9b8c00"/><stop offset="0.875" stop-color="#9b8900"/><stop offset="0.938" stop-color="#9b8500"/><stop offset="1.000" stop-color="#9b8200"/></linearGradient><linearGradient id="f181" gradientUnits="userSpaceOnUse" x1="1600.5" y1="0" x2="1834.5" y2="0"><stop offset="0.000" stop-color="#c2ff07"/><stop offset="0.062" stop-color="#c8ff06"/><stop offset="0.125" stop-color="#cfff04"/><stop offset="0.188" stop-color="#d5ff03"/><stop offset="0.250" stop-color="#dcff02"/><stop offset="0.312" stop-color="#e2ff00"/><stop offset="0.375" stop-color="#e9ff00"/><stop offset="0.438" stop-color="#f0ff00"/><stop offset="0.500" stop-color="#f7ff00"/><stop offset="0.562" stop-color="#feff00"/><stop offset="0.625" stop-color="#fff800"/><stop offset="0.688" stop-color="#fff100"/><stop offset="0.750" stop-color="#ffeb00"/><stop offset="0.812" stop-color="#ffe500"/><stop offset="0.875" stop-color="#ffdf00"/><stop offset="0.938" stop-color="#ffd900"/><stop offset="1.000" stop-color="#ffd400"/></linearGradient><linearGradient id="f182" gradientUnits="userSpaceOnUse" x1="1600.5" y1="0" x2="1834.5" y2="0"><stop offset="0.000" stop-color="#769b04"/><stop offset="0.062" stop-color="#7a9b03"/><stop offset="0.125" stop-color="#7e9b03"/><stop offset="0.188" stop-color="#829b02"/><stop offset="0.250" stop-color="#869b01"/><stop offset="0.312" stop-color="#8a9b00"/><stop offset="0.375" stop-color="#8e9b00"/><stop offset="0.438" stop-color="#929b00"/><stop offset="0.500" stop-color="#969b00"/><stop offset="0.562" stop-color="#9b9b00"/><stop offset="0.625" stop-color="#9b9700"/><stop offset="0.688" stop-color="#9b9300"/><stop offset="0.750" stop-color="#9b8f00"/><stop offset="0.812" stop-color="#9b8b00"/><stop offset="0.875" stop-color="#9b8800"/><stop offset="0.938" stop-color="#9b8400"/><stop offset="1.000" stop-color="#9b8100"/></linearGradient><linearGradient id="f183" gradientUnits="userSpaceOnUse" x1="1600.5" y1="0" x2="1834.5" y2="0"><stop offset="0.000" stop-color="#c3ff08"/><stop offset="0.062" stop-color="#c9ff06"/><stop offset="0.125" stop-color="#d0ff05"/><stop offset="0.188" stop-color="#d6ff04"/><stop offset="0.250" stop-color="#ddff02"/><stop offset="0.312" stop-color="#e4ff01"/><stop offset="0.375" stop-color="#eaff00"/><stop offset="0.438" stop-color="#f1ff00"/><stop offset="0.500" stop-color="#f8ff00"/><stop offset="0.562" stop-color="#fffe00"/><stop offset="0.625" stop-color="#fff700"/><stop offset="0.688" stop-color="#fff000"/><stop offset="0.750" stop-color="#ffea00"/><stop offset="0.812" stop-color="#ffe400"/><stop offset="0.875" stop-color="#ffde00"/><stop offset="0.938" stop-color="#ffd800"/><stop offset="1.000" stop-color="#ffd300"/></linearGradient><linearGradient id="f184" gradientUnits="userSpaceOnUse" x1="1600.5" y1="0" x2="1834.5" y2="0"><stop offset="0.000" stop-color="#779b05"/><stop offset="0.062" stop-color="#7b9b04"/><stop offset="0.125" stop-color="#7f9b03"/><stop offset="0.188" stop-color="#839b02"/><stop offset="0.250" stop-color="#879b01"/><stop offset="0.312" stop-color="#8b9b00"/><stop offset="0.375" stop-color="#8f9b00"/><stop offset="0.438" stop-color="#939b00"/><stop offset="0.500" stop-color="#979b00"/><stop offset="0.562" stop-color="#9b9b00"/><stop offset="0.625" stop-color="#9b9600"/><stop offset="0.688" stop-color="#9b9200"/><stop offset="0.750" stop-color="#9b8e00"/><stop offset="0.812" stop-color="#9b8b00"/><stop offset="0.875" stop-color="#9b8700"/><stop offset="0.938" stop-color="#9b8400"/><stop offset="1.000" stop-color="#9b8000"/></linearGradient><linearGradient id="f185" gradientUnits="userSpaceOnUse" x1="1600.5" y1="0" x2="1834.5" y2="0"><stop offset="0.000" stop-color="#c4ff08"/><stop offset="0.062" stop-color="#caff07"/><stop offset="0.125" stop-color="#d1ff06"/><stop offset="0.188" stop-color="#d8ff04"/><stop offset="0.250" stop-color="#deff03"/><stop offset="0.312" stop-color="#e5ff01"/><stop offset="0.375" stop-color="#ecff00"/><stop offset="0.438" stop-color="#f3ff00"/><stop offset="0.500" stop-color="#faff00"/><stop offset="0.562" stop-color="#fffc00"/><stop offset="0.625" stop-color="#fff500"/><stop offset="0.688" stop-color="#ffef00"/><stop offset="0.750" stop-color="#ffe900"/><stop offset="0.812" stop-color="#ffe300"/><stop offset="0.875" stop-color="#ffdd00"/><stop offset="0.938" stop-color="#ffd700"/><stop offset="1.000" stop-color="#ffd200"/></linearGradient><linearGradient id="f186" gradientUnits="userSpaceOnUse" x1="1600.5" y1="0" x2="1834.5" y2="0"><stop offset="0.000" stop-color="#779b05"/><stop offset="0.062" stop-color="#7b9b04"/><stop offset="0.125" stop-color="#7f9b03"/><stop offset="0.188" stop-color="#839b02"/><stop offset="0.250" stop-color="#879b02"/><stop offset="0.312" stop-color="#8b9b01"/><stop offset="0.375" stop-color="#909b00"/><stop offset="0.438" stop-color="#949b00"/><stop offset="0.500" stop-color="#989b00"/><stop offset="0.562" stop-color="#9b9a00"/><stop offset="0.625" stop-color="#9b9500"/><stop offset="0.688" stop-color="#9b9100"/><stop offset="0.750" stop-color="#9b8e00"/><stop offset="0.812" stop-color="#9b8a00"/><stop offset="0.875" stop-color="#9b8600"/><stop offset="0.938" stop-color="#9b8300"/><stop offset="1.000" stop-color="#9b8000"/></linearGradient><linearGradient id="f187" gradientUnits="userSpaceOnUse" x1="1600.5" y1="0" x2="1834.5" y2="0"><stop offset="0.000" stop-color="#c5ff09"/><stop offset="0.062" stop-color="#ccff08"/><stop offset="0.125" stop-color="#d2ff06"/><stop offset="0.188" stop-color="#d9ff05"/><stop offset="0.250" stop-color="#dfff03"/><stop offset="0.312" stop-color="#e6ff02"/><stop offset="0.375" stop-color="#edff01"/><stop offset="0.438" stop-color="#f4ff00"/><stop offset="0.500" stop-color="#fbff00"/><stop offset="0.562" stop-color="#fffb00"/><stop offset="0.625" stop-color="#fff400"/><stop offset="0.688" stop-color="#ffee00"/><stop offset="0.750" stop-color="#ffe700"/><stop offset="0.812" stop-color="#ffe100"/><stop offset="0.875" stop-color="#ffdc00"/><stop offset="0.938" stop-color="#ffd600"/><stop offset="1.000" stop-color="#ffd100"/></linearGradient><linearGradient id="f188" gradientUnits="userSpaceOnUse" x1="1600.5" y1="0" x2="1834.5" y2="0"><stop offset="0.000" stop-color="#789b05"/><stop offset="0.062" stop-color="#7c9b04"/><stop offset="0.125" stop-color="#809b04"/><stop offset="0.188" stop-color="#849b03"/><stop offset="0.250" stop-color="#889b02"/><stop offset="0.312" stop-color="#8c9b01"/><stop offset="0.375" stop-color="#909b00"/><stop offset="0.438" stop-color="#959b00"/><stop offset="0.500" stop-color="#999b00"/><stop offset="0.562" stop-color="#9b9900"/><stop offset="0.625" stop-color="#9b9500"/><stop offset="0.688" stop-color="#9b9100"/><stop offset="0.750" stop-color="#9b8d00"/><stop offset="0.812" stop-color="#9b8900"/><stop offset="0.875" stop-color="#9b8600"/><stop offset="0.938" stop-color="#9b8200"/><stop offset="1.000" stop-color="#9b7f00"/></linearGradient><linearGradient id="f189" gradientUnits="userSpaceOnUse" x1="1600.5" y1="0" x2="1834.5" y2="0"><stop offset="0.000" stop-color="#c6ff0a"/><stop offset="0.062" stop-color="#cdff08"/><stop offset="0.125" stop-color="#d3ff07"/><stop offset="0.188" stop-color="#daff05"/><stop offset="0.250" stop-color="#e1ff04"/><stop offset="0.312" stop-color="#e8ff03"/><stop offset="0.375" stop-color="#eeff01"/><stop offset="0.438" stop-color="#f5ff00"/><stop offset="0.500" stop-color="#fdff00"/><stop offset="0.562" stop-color="#fff900"/><stop offset="0.625" stop-color="#fff300"/><stop offset="0.688" stop-color="#ffec00"/><stop offset="0.750" stop-color="#ffe600"/><stop offset="0.812" stop-color="#ffe000"/><stop offset="0.875" stop-color="#ffda00"/><stop offset="0.938" stop-color="#ffd500"/><stop offset="1.000" stop-color="#ffcf00"/></linearGradient><linearGradient id="f190" gradientUnits="userSpaceOnUse" x1="1600.5" y1="0" x2="1834.5" y2="0"><stop offset="0.000" stop-color="#799b06"/><stop offset="0.062" stop-color="#7d9b05"/><stop offset="0.125" stop-color="#819b04"/><stop offset="0.188" stop-color="#859b03"/><stop offset="0.250" stop-color="#899b02"/><stop offset="0.312" stop-color="#8d9b01"/><stop offset="0.375" stop-color="#919b01"/><stop offset="0.438" stop-color="#969b00"/><stop offset="0.500" stop-color="#9a9b00"/><stop offset="0.562" stop-color="#9b9800"/><stop offset="0.625" stop-color="#9b9400"/><stop offset="0.688" stop-color="#9b9000"/><stop offset="0.750" stop-color="#9b8c00"/><stop offset="0.812" stop-color="#9b8800"/><stop offset="0.875" stop-color="#9b8500"/><stop offset="0.938" stop-color="#9b8200"/><stop offset="1.000" stop-color="#9b7e00"/></linearGradient><linearGradient id="f191" gradientUnits="userSpaceOnUse" x1="1600.5" y1="0" x2="1834.5" y2="0"><stop offset="0.000" stop-color="#c7ff0a"/><stop offset="0.062" stop-color="#ceff09"/><stop offset="0.125" stop-color="#d5ff08"/><stop offset="0.188" stop-color="#dbff06"/><stop offset="0.250" stop-color="#e2ff05"/><stop offset="0.312" stop-color="#e9ff03"/><stop offset="0.375" stop-color="#f0ff02"/><stop offset="0.438" stop-color="#f7ff00"/><stop offset="0.500" stop-color="#feff00"/><stop offset="0.562" stop-color="#fff800"/><stop offset="0.625" stop-color="#fff100"/><stop offset="0.688" stop-color="#ffeb00"/><stop offset="0.750" stop-color="#ffe500"/><stop offset="0.812" stop-color="#ffdf00"/><stop offset="0.875" stop-color="#ffd900"/><stop offset="0.938" stop-color="#ffd400"/><stop offset="1.000" stop-color="#ffce00"/></linearGradient><linearGradient id="f192" gradientUnits="userSpaceOnUse" x1="1600.5" y1="0" x2="1834.5" y2="0"><stop offset="0.000" stop-color="#799b06"/><stop offset="0.062" stop-color="#7d9b05"/><stop offset="0.125" stop-color="#819b04"/><stop offset="0.188" stop-color="#869b04"/><stop offset="0.250" stop-color="#8a9b03"/><stop offset="0.312" stop-color="#8e9b02"/><stop offset="0.375" stop-color="#929b01"/><stop offset="0.438" stop-color="#969b00"/><stop offset="0.500" stop-color="#9b9b00"/><stop offset="0.562" stop-color="#9b9700"/><stop offset="0.625" stop-color="#9b9300"/><stop offset="0.688" stop-color="#9b8f00"/><stop offset="0.750" stop-color="#9b8b00"/><stop offset="0.812" stop-color="#9b8800"/><stop offset="0.875" stop-color="#9b8400"/><stop offset="0.938" stop-color="#9b8100"/><stop offset="1.000" stop-color="#9b7e00"/></linearGradient><linearGradient id="f193" gradientUnits="userSpaceOnUse" x1="1600.5" y1="0" x2="1834.5" y2="0"><stop offset="0.000" stop-color="#c9ff0b"/><stop offset="0.062" stop-color="#cfff0a"/><stop offset="0.125" stop-color="#d6ff08"/><stop offset="0.188" stop-color="#ddff07"/><stop offset="0.250" stop-color="#e3ff05"/><stop offset="0.312" stop-color="#eaff04"/><stop offset="0.375" stop-color="#f1ff02"/><stop offset="0.438" stop-color="#f8ff01"/><stop offset="0.500" stop-color="#fffe00"/><stop offset="0.562" stop-color="#fff700"/><stop offset="0.625" stop-color="#fff000"/><stop offset="0.688" stop-color="#ffea00"/><stop offset="0.750" stop-color="#ffe300"/><stop offset="0.812" stop-color="#ffde00"/><stop offset="0.875" stop-color="#ffd800"/><stop offset="0.938" stop-color="#ffd200"/><stop offset="1.000" stop-color="#ffcd00"/></linearGradient><linearGradient id="f194" gradientUnits="userSpaceOnUse" x1="1600.5" y1="0" x2="1834.5" y2="0"><stop offset="0.000" stop-color="#7a9b06"/><stop offset="0.062" stop-color="#7e9b06"/><stop offset="0.125" stop-color="#829b05"/><stop offset="0.188" stop-color="#869b04"/><stop offset="0.250" stop-color="#8a9b03"/><stop offset="0.312" stop-color="#8f9b02"/><stop offset="0.375" stop-color="#939b01"/><stop offset="0.438" stop-color="#979b00"/><stop offset="0.500" stop-color="#9b9b00"/><stop offset="0.562" stop-color="#9b9600"/><stop offset="0.625" stop-color="#9b9200"/><stop offset="0.688" stop-color="#9b8e00"/><stop offset="0.750" stop-color="#9b8b00"/><stop offset="0.812" stop-color="#9b8700"/><stop offset="0.875" stop-color="#9b8400"/><stop offset="0.938" stop-color="#9b8000"/><stop offset="1.000" stop-color="#9b7d00"/></linearGradient><linearGradient id="f195" gradientUnits="userSpaceOnUse" x1="1600.5" y1="0" x2="1834.5" y2="0"><stop offset="0.000" stop-color="#caff0c"/><stop offset="0.062" stop-color="#d0ff0a"/><stop offset="0.125" stop-color="#d7ff09"/><stop offset="0.188" stop-color="#deff07"/><stop offset="0.250" stop-color="#e5ff06"/><stop offset="0.312" stop-color="#ecff04"/><stop offset="0.375" stop-color="#f3ff03"/><stop offset="0.438" stop-color="#faff02"/><stop offset="0.500" stop-color="#fffc00"/><stop offset="0.562" stop-color="#fff500"/><stop offset="0.625" stop-color="#ffef00"/><stop offset="0.688" stop-color="#ffe800"/><stop offset="0.750" stop-color="#ffe200"/><stop offset="0.812" stop-color="#ffdc00"/><stop offset="0.875" stop-color="#ffd700"/><stop offset="0.938" stop-color="#ffd100"/><stop offset="1.000" stop-color="#ffcc00"/></linearGradient><linearGradient id="f196" gradientUnits="userSpaceOnUse" x1="1600.5" y1="0" x2="1834.5" y2="0"><stop offset="0.000" stop-color="#7b9b07"/><stop offset="0.062" stop-color="#7f9b06"/><stop offset="0.125" stop-color="#839b05"/><stop offset="0.188" stop-color="#879b04"/><stop offset="0.250" stop-color="#8b9b03"/><stop offset="0.312" stop-color="#8f9b03"/><stop offset="0.375" stop-color="#949b02"/><stop offset="0.438" stop-color="#989b01"/><stop offset="0.500" stop-color="#9b9a00"/><stop offset="0.562" stop-color="#9b9500"/><stop offset="0.625" stop-color="#9b9100"/><stop offset="0.688" stop-color="#9b8e00"/><stop offset="0.750" stop-color="#9b8a00"/><stop offset="0.812" stop-color="#9b8600"/><stop offset="0.875" stop-color="#9b8300"/><stop offset="0.938" stop-color="#9b7f00"/><stop offset="1.000" stop-color="#9b7c00"/></linearGradient><linearGradient id="f197" gradientUnits="userSpaceOnUse" x1="1600.5" y1="0" x2="1834.5" y2="0"><stop offset="0.000" stop-color="#cbff0c"/><stop offset="0.062" stop-color="#d2ff0b"/><stop offset="0.125" stop-color="#d8ff09"/><stop offset="0.188" stop-color="#dfff08"/><stop offset="0.250" stop-color="#e6ff07"/><stop offset="0.312" stop-color="#edff05"/><stop offset="0.375" stop-color="#f4ff04"/><stop offset="0.438" stop-color="#fbff02"/><stop offset="0.500" stop-color="#fffb01"/><stop offset="0.562" stop-color="#fff400"/><stop offset="0.625" stop-color="#ffed00"/><stop offset="0.688" stop-color="#ffe700"/><stop offset="0.750" stop-color="#ffe100"/><stop offset="0.812" stop-color="#ffdb00"/><stop offset="0.875" stop-color="#ffd600"/><stop offset="0.938" stop-color="#ffd000"/><stop offset="1.000" stop-color="#ffcb00"/></linearGradient><linearGradient id="f198" gradientUnits="userSpaceOnUse" x1="1600.5" y1="0" x2="1834.5" y2="0"><stop offset="0.000" stop-color="#7c9b07"/><stop offset="0.062" stop-color="#809b06"/><stop offset="0.125" stop-color="#849b06"/><stop offset="0.188" stop-color="#889b05"/><stop offset="0.250" stop-color="#8c9b04"/><stop offset="0.312" stop-color="#909b03"/><stop offset="0.375" stop-color="#959b02"/><stop offset="0.438" stop-color="#999b01"/><stop offset="0.500" stop-color="#9b9900"/><stop offset="0.562" stop-color="#9b9500"/><stop offset="0.625" stop-color="#9b9100"/><stop offset="0.688" stop-color="#9b8d00"/><stop offset="0.750" stop-color="#9b8900"/><stop offset="0.812" stop-color="#9b8600"/><stop offset="0.875" stop-color="#9b8200"/><stop offset="0.938" stop-color="#9b7f00"/><stop offset="1.000" stop-color="#9b7c00"/></linearGradient><linearGradient id="f199" gradientUnits="userSpaceOnUse" x1="1600.5" y1="0" x2="1834.5" y2="0"><stop offset="0.000" stop-color="#ccff0d"/><stop offset="0.062" stop-color="#d3ff0b"/><stop offset="0.125" stop-color="#daff0a"/><stop offset="0.188" stop-color="#e0ff09"/><stop offset="0.250" stop-color="#e7ff07"/><stop offset="0.312" stop-color="#eeff06"/><stop offset="0.375" stop-color="#f5ff04"/><stop offset="0.438" stop-color="#fcff03"/><stop offset="0.500" stop-color="#fff901"/><stop offset="0.562" stop-color="#fff300"/><stop offset="0.625" stop-color="#ffec00"/><stop offset="0.688" stop-color="#ffe600"/><stop offset="0.750" stop-color="#ffe000"/><stop offset="0.812" stop-color="#ffda00"/><stop offset="0.875" stop-color="#ffd400"/><stop offset="0.938" stop-color="#ffcf00"/><stop offset="1.000" stop-color="#ffca00"/></linearGradient><linearGradient id="f200" gradientUnits="userSpaceOnUse" x1="1600.5" y1="0" x2="1834.5" y2="0"><stop offset="0.000" stop-color="#7c9b08"/><stop offset="0.062" stop-color="#809b07"/><stop offset="0.125" stop-color="#859b06"/><stop offset="0.188" stop-color="#899b05"/><stop offset="0.250" stop-color="#8d9b04"/><stop offset="0.312" stop-color="#919b03"/><stop offset="0.375" stop-color="#959b02"/><stop offset="0.438" stop-color="#9a9b02"/><stop offset="0.500" stop-color="#9b9801"/><stop offset="0.562" stop-color="#9b9400"/><stop offset="0.625" stop-color="#9b9000"/><stop offset="0.688" stop-color="#9b8c00"/><stop offset="0.750" stop-color="#9b8800"/><stop offset="0.812" stop-color="#9b8500"/><stop offset="0.875" stop-color="#9b8100"/><stop offset="0.938" stop-color="#9b7e00"/><stop offset="1.000" stop-color="#9b7b00"/></linearGradient><linearGradient id="f201" gradientUnits="userSpaceOnUse" x1="1600.5" y1="0" x2="1834.5" y2="0"><stop offset="0.000" stop-color="#cdff0e"/><stop offset="0.062" stop-color="#d4ff0c"/><stop offset="0.125" stop-color="#dbff0b"/><stop offset="0.188" stop-color="#e2ff09"/><stop offset="0.250" stop-color="#e9ff08"/><stop offset="0.312" stop-color="#f0ff06"/><stop offset="0.375" stop-color="#f7ff05"/><stop offset="0.438" stop-color="#feff03"/><stop offset="0.500" stop-color="#fff802"/><stop offset="0.562" stop-color="#fff100"/><stop offset="0.625" stop-color="#ffeb00"/><stop offset="0.688" stop-color="#ffe500"/><stop offset="0.750" stop-color="#ffdf00"/><stop offset="0.812" stop-color="#ffd900"/><stop offset="0.875" stop-color="#ffd300"/><stop offset="0.938" stop-color="#ffce00"/><stop offset="1.000" stop-color="#ffc900"/></linearGradient><linearGradient id="f202" gradientUnits="userSpaceOnUse" x1="1600.5" y1="0" x2="1834.5" y2="0"><stop offset="0.000" stop-color="#7d9b08"/><stop offset="0.062" stop-color="#819b07"/><stop offset="0.125" stop-color="#859b06"/><stop offset="0.188" stop-color="#899b05"/><stop offset="0.250" stop-color="#8e9b05"/><stop offset="0.312" stop-color="#929b04"/><stop offset="0.375" stop-color="#969b03"/><stop offset="0.438" stop-color="#9b9b02"/><stop offset="0.500" stop-color="#9b9701"/><stop offset="0.562" stop-color="#9b9300"/><stop offset="0.625" stop-color="#9b8f00"/><stop offset="0.688" stop-color="#9b8b00"/><stop offset="0.750" stop-color="#9b8800"/><stop offset="0.812" stop-color="#9b8400"/><stop offset="0.875" stop-color="#9b8100"/><stop offset="0.938" stop-color="#9b7d00"/><stop offset="1.000" stop-color="#9b7a00"/></linearGradient><linearGradient id="f203" gradientUnits="userSpaceOnUse" x1="1600.5" y1="0" x2="1834.5" y2="0"><stop offset="0.000" stop-color="#cfff0e"/><stop offset="0.062" stop-color="#d5ff0d"/><stop offset="0.125" stop-color="#dcff0b"/><stop offset="0.188" stop-color="#e3ff0a"/><stop offset="0.250" stop-color="#eaff09"/><stop offset="0.312" stop-color="#f1ff07"/><stop offset="0.375" stop-color="#f8ff06"/><stop offset="0.438" stop-color="#fffe04"/><stop offset="0.500" stop-color="#fff702"/><stop offset="0.562" stop-color="#fff001"/><stop offset="0.625" stop-color="#ffe900"/><stop offset="0.688" stop-color="#ffe300"/><stop offset="0.750" stop-color="#ffdd00"/><stop offset="0.812" stop-color="#ffd800"/><stop offset="0.875" stop-color="#ffd200"/><stop offset="0.938" stop-color="#ffcd00"/><stop offset="1.000" stop-color="#ffc800"/></linearGradient><linearGradient id="f204" gradientUnits="userSpaceOnUse" x1="1600.5" y1="0" x2="1834.5" y2="0"><stop offset="0.000" stop-color="#7e9b08"/><stop offset="0.062" stop-color="#829b08"/><stop offset="0.125" stop-color="#869b07"/><stop offset="0.188" stop-color="#8a9b06"/><stop offset="0.250" stop-color="#8e9b05"/><stop offset="0.312" stop-color="#939b04"/><stop offset="0.375" stop-color="#979b03"/><stop offset="0.438" stop-color="#9b9b02"/><stop offset="0.500" stop-color="#9b9601"/><stop offset="0.562" stop-color="#9b9200"/><stop offset="0.625" stop-color="#9b8e00"/><stop offset="0.688" stop-color="#9b8a00"/><stop offset="0.750" stop-color="#9b8700"/><stop offset="0.812" stop-color="#9b8300"/><stop offset="0.875" stop-color="#9b8000"/><stop offset="0.938" stop-color="#9b7d00"/><stop offset="1.000" stop-color="#9b7a00"/></linearGradient><linearGradient id="f205" gradientUnits="userSpaceOnUse" x1="1600.5" y1="0" x2="1834.5" y2="0"><stop offset="0.000" stop-color="#d0ff0f"/><stop offset="0.062" stop-color="#d7ff0d"/><stop offset="0.125" stop-color="#ddff0c"/><stop offset="0.188" stop-color="#e4ff0b"/><stop offset="0.250" stop-color="#ebff09"/><stop offset="0.312" stop-color="#f2ff08"/><stop offset="0.375" stop-color="#f9ff06"/><stop offset="0.438" stop-color="#fffc05"/><stop offset="0.500" stop-color="#fff503"/><stop offset="0.562" stop-color="#ffef02"/><stop offset="0.625" stop-color="#ffe800"/><stop offset="0.688" stop-color="#ffe200"/><stop offset="0.750" stop-color="#ffdc00"/><stop offset="0.812" stop-color="#ffd600"/><stop offset="0.875" stop-color="#ffd100"/><stop offset="0.938" stop-color="#ffcc00"/><stop offset="1.000" stop-color="#ffc700"/></linearGradient><linearGradient id="f206" gradientUnits="userSpaceOnUse" x1="1600.5" y1="0" x2="1834.5" y2="0"><stop offset="0.000" stop-color="#7f9b09"/><stop offset="0.062" stop-color="#839b08"/><stop offset="0.125" stop-color="#879b07"/><stop offset="0.188" stop-color="#8b9b06"/><stop offset="0.250" stop-color="#8f9b05"/><stop offset="0.312" stop-color="#949b05"/><stop offset="0.375" stop-color="#989b04"/><stop offset="0.438" stop-color="#9b9a03"/><stop offset="0.500" stop-color="#9b9502"/><stop offset="0.562" stop-color="#9b9101"/><stop offset="0.625" stop-color="#9b8d00"/><stop offset="0.688" stop-color="#9b8a00"/><stop offset="0.750" stop-color="#9b8600"/><stop offset="0.812" stop-color="#9b8300"/><stop offset="0.875" stop-color="#9b7f00"/><stop offset="0.938" stop-color="#9b7c00"/><stop offset="1.000" stop-color="#9b7900"/></linearGradient><linearGradient id="f207" gradientUnits="userSpaceOnUse" x1="1600.5" y1="0" x2="1834.5" y2="0"><stop offset="0.000" stop-color="#d1ff0f"/><stop offset="0.062" stop-color="#d8ff0e"/><stop offset="0.125" stop-color="#dfff0d"/><stop offset="0.188" stop-color="#e6ff0b"/><stop offset="0.250" stop-color="#edff0a"/><stop offset="0.312" stop-color="#f4ff08"/><stop offset="0.375" stop-color="#fbff07"/><stop offset="0.438" stop-color="#fffb05"/><stop offset="0.500" stop-color="#fff404"/><stop offset="0.562" stop-color="#ffed02"/><stop offset="0.625" stop-color="#ffe701"/><stop offset="0.688" stop-color="#ffe100"/><stop offset="0.750" stop-color="#ffdb00"/><stop offset="0.812" stop-color="#ffd500"/><stop offset="0.875" stop-color="#ffd000"/><stop offset="0.938" stop-color="#ffcb00"/><stop offset="1.000" stop-color="#ffc500"/></linearGradient><linearGradient id="f208" gradientUnits="userSpaceOnUse" x1="1600.5" y1="0" x2="1834.5" y2="0"><stop offset="0.000" stop-color="#7f9b09"/><stop offset="0.062" stop-color="#839b08"/><stop offset="0.125" stop-color="#889b08"/><stop offset="0.188" stop-color="#8c9b07"/><stop offset="0.250" stop-color="#909b06"/><stop offset="0.312" stop-color="#949b05"/><stop offset="0.375" stop-color="#999b04"/><stop offset="0.438" stop-color="#9b9903"/><stop offset="0.500" stop-color="#9b9502"/><stop offset="0.562" stop-color="#9b9101"/><stop offset="0.625" stop-color="#9b8d00"/><stop offset="0.688" stop-color="#9b8900"/><stop offset="0.750" stop-color="#9b8500"/><stop offset="0.812" stop-color="#9b8200"/><stop offset="0.875" stop-color="#9b7f00"/><stop offset="0.938" stop-color="#9b7b00"/><stop offset="1.000" stop-color="#9b7800"/></linearGradient><linearGradient id="f209" gradientUnits="userSpaceOnUse" x1="1600.5" y1="0" x2="1834.5" y2="0"><stop offset="0.000" stop-color="#d2ff10"/><stop offset="0.062" stop-color="#d9ff0f"/><stop offset="0.125" stop-color="#e0ff0d"/><stop offset="0.188" stop-color="#e7ff0c"/><stop offset="0.250" stop-color="#eeff0a"/><stop offset="0.312" stop-color="#f5ff09"/><stop offset="0.375" stop-color="#fcff08"/><stop offset="0.438" stop-color="#fff906"/><stop offset="0.500" stop-color="#fff304"/><stop offset="0.562" stop-color="#ffec03"/><stop offset="0.625" stop-color="#ffe601"/><stop offset="0.688" stop-color="#ffdf00"/><stop offset="0.750" stop-color="#ffda00"/><stop offset="0.812" stop-color="#ffd400"/><stop offset="0.875" stop-color="#ffcf00"/><stop offset="0.938" stop-color="#ffc900"/><stop offset="1.000" stop-color="#ffc400"/></linearGradient><linearGradient id="f210" gradientUnits="userSpaceOnUse" x1="1600.5" y1="0" x2="1834.5" y2="0"><stop offset="0.000" stop-color="#809b0a"/><stop offset="0.062" stop-color="#849b09"/><stop offset="0.125" stop-color="#889b08"/><stop offset="0.188" stop-color="#8d9b07"/><stop offset="0.250" stop-color="#919b06"/><stop offset="0.312" stop-color="#959b05"/><stop offset="0.375" stop-color="#9a9b04"/><stop offset="0.438" stop-color="#9b9803"/><stop offset="0.500" stop-color="#9b9402"/><stop offset="0.562" stop-color="#9b9001"/><stop offset="0.625" stop-color="#9b8c01"/><stop offset="0.688" stop-color="#9b8800"/><stop offset="0.750" stop-color="#9b8500"/><stop offset="0.812" stop-color="#9b8100"/><stop offset="0.875" stop-color="#9b7e00"/><stop offset="0.938" stop-color="#9b7b00"/><stop offset="1.000" stop-color="#9b7800"/></linearGradient><linearGradient id="f211" gradientUnits="userSpaceOnUse" x1="1600.5" y1="0" x2="1834.5" y2="0"><stop offset="0.000" stop-color="#d4ff11"/><stop offset="0.062" stop-color="#daff0f"/><stop offset="0.125" stop-color="#e1ff0e"/><stop offset="0.188" stop-color="#e8ff0d"/><stop offset="0.250" stop-color="#efff0b"/><stop offset="0.312" stop-color="#f7ff0a"/><stop offset="0.375" stop-color="#feff08"/><stop offset="0.438" stop-color="#fff807"/><stop offset="0.500" stop-color="#fff105"/><stop offset="0.562" stop-color="#ffeb03"/><stop offset="0.625" stop-color="#ffe402"/><stop offset="0.688" stop-color="#ffde00"/><stop offset="0.750" stop-color="#ffd800"/><stop offset="0.812" stop-color="#ffd300"/><stop offset="0.875" stop-color="#ffcd00"/><stop offset="0.938" stop-color="#ffc800"/><stop offset="1.000" stop-color="#ffc300"/></linearGradient><linearGradient id="f212" gradientUnits="userSpaceOnUse" x1="1600.5" y1="0" x2="1834.5" y2="0"><stop offset="0.000" stop-color="#819b0a"/><stop offset="0.062" stop-color="#859b09"/><stop offset="0.125" stop-color="#899b08"/><stop offset="0.188" stop-color="#8d9b07"/><stop offset="0.250" stop-color="#929b07"/><stop offset="0.312" stop-color="#969b06"/><stop offset="0.375" stop-color="#9b9b05"/><stop offset="0.438" stop-color="#9b9704"/><stop offset="0.500" stop-color="#9b9303"/><stop offset="0.562" stop-color="#9b8f02"/><stop offset="0.625" stop-color="#9b8b01"/><stop offset="0.688" stop-color="#9b8700"/><stop offset="0.750" stop-color="#9b8400"/><stop offset="0.812" stop-color="#9b8000"/><stop offset="0.875" stop-color="#9b7d00"/><stop offset="0.938" stop-color="#9b7a00"/><stop offset="1.000" stop-color="#9b7700"/></linearGradient><linearGradient id="f213" gradientUnits="userSpaceOnUse" x1="1600.5" y1="0" x2="1834.5" y2="0"><stop offset="0.000" stop-color="#d5ff12"/><stop offset="0.062" stop-color="#dcff10"/><stop offset="0.125" stop-color="#e3ff0f"/><stop offset="0.188" stop-color="#eaff0d"/><stop offset="0.250" stop-color="#f1ff0c"/><stop offset="0.312" stop-color="#f8ff0a"/><stop offset="0.375" stop-color="#fffe09"/><stop offset="0.438" stop-color="#fff707"/><stop offset="0.500" stop-color="#fff005"/><stop offset="0.562" stop-color="#ffe904"/><stop offset="0.625" stop-color="#ffe302"/><stop offset="0.688" stop-color="#ffdd01"/><stop offset="0.750" stop-color="#ffd700"/><stop offset="0.812" stop-color="#ffd200"/><stop offset="0.875" stop-color="#ffcc00"/><stop offset="0.938" stop-color="#ffc700"/><stop offset="1.000" stop-color="#ffc200"/></linearGradient><linearGradient id="f214" gradientUnits="userSpaceOnUse" x1="1600.5" y1="0" x2="1834.5" y2="0"><stop offset="0.000" stop-color="#829b0a"/><stop offset="0.062" stop-color="#869b0a"/><stop offset="0.125" stop-color="#8a9b09"/><stop offset="0.188" stop-color="#8e9b08"/><stop offset="0.250" stop-color="#939b07"/><stop offset="0.312" stop-color="#979b06"/><stop offset="0.375" stop-color="#9b9b05"/><stop offset="0.438" stop-color="#9b9604"/><stop offset="0.500" stop-color="#9b9203"/><stop offset="0.562" stop-color="#9b8e02"/><stop offset="0.625" stop-color="#9b8a01"/><stop offset="0.688" stop-color="#9b8700"/><stop offset="0.750" stop-color="#9b8300"/><stop offset="0.812" stop-color="#9b8000"/><stop offset="0.875" stop-color="#9b7c00"/><stop offset="0.938" stop-color="#9b7900"/><stop offset="1.000" stop-color="#9b7600"/></linearGradient><linearGradient id="f215" gradientUnits="userSpaceOnUse" x1="1600.5" y1="0" x2="1834.5" y2="0"><stop offset="0.000" stop-color="#d6ff12"/><stop offset="0.062" stop-color="#ddff11"/><stop offset="0.125" stop-color="#e4ff0f"/><stop offset="0.188" stop-color="#ebff0e"/><stop offset="0.250" stop-color="#f2ff0d"/><stop offset="0.312" stop-color="#f9ff0b"/><stop offset="0.375" stop-color="#fffc09"/><stop offset="0.438" stop-color="#fff508"/><stop offset="0.500" stop-color="#ffee06"/><stop offset="0.562" stop-color="#ffe805"/><stop offset="0.625" stop-color="#ffe203"/><stop offset="0.688" stop-color="#ffdc02"/><stop offset="0.750" stop-color="#ffd600"/><stop offset="0.812" stop-color="#ffd000"/><stop offset="0.875" stop-color="#ffcb00"/><stop offset="0.938" stop-color="#ffc600"/><stop offset="1.000" stop-color="#ffc100"/></linearGradient><linearGradient id="f216" gradientUnits="userSpaceOnUse" x1="1600.5" y1="0" x2="1834.5" y2="0"><stop offset="0.000" stop-color="#829b0b"/><stop offset="0.062" stop-color="#879b0a"/><stop offset="0.125" stop-color="#8b9b09"/><stop offset="0.188" stop-color="#8f9b08"/><stop offset="0.250" stop-color="#949b07"/><stop offset="0.312" stop-color="#989b07"/><stop offset="0.375" stop-color="#9b9a06"/><stop offset="0.438" stop-color="#9b9505"/><stop offset="0.500" stop-color="#9b9104"/><stop offset="0.562" stop-color="#9b8d03"/><stop offset="0.625" stop-color="#9b8902"/><stop offset="0.688" stop-color="#9b8601"/><stop offset="0.750" stop-color="#9b8200"/><stop offset="0.812" stop-color="#9b7f00"/><stop offset="0.875" stop-color="#9b7c00"/><stop offset="0.938" stop-color="#9b7900"/><stop offset="1.000" stop-color="#9b7600"/></linearGradient><linearGradient id="f217" gradientUnits="userSpaceOnUse" x1="1600.5" y1="0" x2="1834.5" y2="0"><stop offset="0.000" stop-color="#d7ff13"/><stop offset="0.062" stop-color="#deff11"/><stop offset="0.125" stop-color="#e5ff10"/><stop offset="0.188" stop-color="#ecff0f"/><stop offset="0.250" stop-color="#f4ff0d"/><stop offset="0.312" stop-color="#fbff0c"/><stop offset="0.375" stop-color="#fffb0a"/><stop offset="0.438" stop-color="#fff408"/><stop offset="0.500" stop-color="#ffed07"/><stop offset="0.562" stop-color="#ffe705"/><stop offset="0.625" stop-color="#ffe004"/><stop offset="0.688" stop-color="#ffda02"/><stop offset="0.750" stop-color="#ffd501"/><stop offset="0.812" stop-color="#ffcf00"/><stop offset="0.875" stop-color="#ffca00"/><stop offset="0.938" stop-color="#ffc500"/><stop offset="1.000" stop-color="#ffc000"/></linearGradient><linearGradient id="f218" gradientUnits="userSpaceOnUse" x1="1600.5" y1="0" x2="1834.5" y2="0"><stop offset="0.000" stop-color="#839b0b"/><stop offset="0.062" stop-color="#879b0a"/><stop offset="0.125" stop-color="#8c9b0a"/><stop offset="0.188" stop-color="#909b09"/><stop offset="0.250" stop-color="#949b08"/><stop offset="0.312" stop-color="#999b07"/><stop offset="0.375" stop-color="#9b9906"/><stop offset="0.438" stop-color="#9b9505"/><stop offset="0.500" stop-color="#9b9004"/><stop offset="0.562" stop-color="#9b8c03"/><stop offset="0.625" stop-color="#9b8902"/><stop offset="0.688" stop-color="#9b8501"/><stop offset="0.750" stop-color="#9b8200"/><stop offset="0.812" stop-color="#9b7e00"/><stop offset="0.875" stop-color="#9b7b00"/><stop offset="0.938" stop-color="#9b7800"/><stop offset="1.000" stop-color="#9b7500"/></linearGradient><linearGradient id="f219" gradientUnits="userSpaceOnUse" x1="1600.5" y1="0" x2="1834.5" y2="0"><stop offset="0.000" stop-color="#d9ff14"/><stop offset="0.062" stop-color="#e0ff12"/><stop offset="0.125" stop-color="#e7ff11"/><stop offset="0.188" stop-color="#eeff0f"/><stop offset="0.250" stop-color="#f5ff0e"/><stop offset="0.312" stop-color="#fcff0c"/><stop offset="0.375" stop-color="#fff90b"/><stop offset="0.438" stop-color="#fff209"/><stop offset="0.500" stop-color="#ffec07"/><stop offset="0.562" stop-color="#ffe506"/><stop offset="0.625" stop-color="#ffdf04"/><stop offset="0.688" stop-color="#ffd903"/><stop offset="0.750" stop-color="#ffd401"/><stop offset="0.812" stop-color="#ffce00"/><stop offset="0.875" stop-color="#ffc900"/><stop offset="0.938" stop-color="#ffc400"/><stop offset="1.000" stop-color="#ffbf00"/></linearGradient><linearGradient id="f220" gradientUnits="userSpaceOnUse" x1="1600.5" y1="0" x2="1834.5" y2="0"><stop offset="0.000" stop-color="#849b0c"/><stop offset="0.062" stop-color="#889b0b"/><stop offset="0.125" stop-color="#8c9b0a"/><stop offset="0.188" stop-color="#919b09"/><stop offset="0.250" stop-color="#959b08"/><stop offset="0.312" stop-color="#9a9b07"/><stop offset="0.375" stop-color="#9b9806"/><stop offset="0.438" stop-color="#9b9405"/><stop offset="0.500" stop-color="#9b9004"/><stop offset="0.562" stop-color="#9b8c03"/><stop offset="0.625" stop-color="#9b8802"/><stop offset="0.688" stop-color="#9b8401"/><stop offset="0.750" stop-color="#9b8101"/><stop offset="0.812" stop-color="#9b7e00"/><stop offset="0.875" stop-color="#9b7a00"/><stop offset="0.938" stop-color="#9b7700"/><stop offset="1.000" stop-color="#9b7400"/></linearGradient><linearGradient id="f221" gradientUnits="userSpaceOnUse" x1="1600.5" y1="0" x2="1834.5" y2="0"><stop offset="0.000" stop-color="#daff14"/><stop offset="0.062" stop-color="#e1ff13"/><stop offset="0.125" stop-color="#e8ff11"/><stop offset="0.188" stop-color="#efff10"/><stop offset="0.250" stop-color="#f6ff0f"/><stop offset="0.312" stop-color="#feff0d"/><stop offset="0.375" stop-color="#fff80b"/><stop offset="0.438" stop-color="#fff10a"/><stop offset="0.500" stop-color="#ffea08"/><stop offset="0.562" stop-color="#ffe406"/><stop offset="0.625" stop-color="#ffde05"/><stop offset="0.688" stop-color="#ffd803"/><stop offset="0.750" stop-color="#ffd202"/><stop offset="0.812" stop-color="#ffcd00"/><stop offset="0.875" stop-color="#ffc800"/><stop offset="0.938" stop-color="#ffc300"/><stop offset="1.000" stop-color="#ffbe00"/></linearGradient><linearGradient id="f222" gradientUnits="userSpaceOnUse" x1="1600.5" y1="0" x2="1834.5" y2="0"><stop offset="0.000" stop-color="#859b0c"/><stop offset="0.062" stop-color="#899b0b"/><stop offset="0.125" stop-color="#8d9b0a"/><stop offset="0.188" stop-color="#929b0a"/><stop offset="0.250" stop-color="#969b09"/><stop offset="0.312" stop-color="#9b9b08"/><stop offset="0.375" stop-color="#9b9707"/><stop offset="0.438" stop-color="#9b9306"/><stop offset="0.500" stop-color="#9b8f05"/><stop offset="0.562" stop-color="#9b8b04"/><stop offset="0.625" stop-color="#9b8703"/><stop offset="0.688" stop-color="#9b8402"/><stop offset="0.750" stop-color="#9b8001"/><stop offset="0.812" stop-color="#9b7d00"/><stop offset="0.875" stop-color="#9b7a00"/><stop offset="0.938" stop-color="#9b7700"/><stop offset="1.000" stop-color="#9b7400"/></linearGradient><linearGradient id="f223" gradientUnits="userSpaceOnUse" x1="1600.5" y1="0" x2="1834.5" y2="0"><stop offset="0.000" stop-color="#dbff15"/><stop offset="0.062" stop-color="#e2ff14"/><stop offset="0.125" stop-color="#e9ff12"/><stop offset="0.188" stop-color="#f1ff11"/><stop offset="0.250" stop-color="#f8ff0f"/><stop offset="0.312" stop-color="#fffe0e"/><stop offset="0.375" stop-color="#fff70c"/><stop offset="0.438" stop-color="#fff00a"/><stop offset="0.500" stop-color="#ffe908"/><stop offset="0.562" stop-color="#ffe307"/><stop offset="0.625" stop-color="#ffdd05"/><stop offset="0.688" stop-color="#ffd704"/><stop offset="0.750" stop-color="#ffd102"/><stop offset="0.812" stop-color="#ffcc01"/><stop offset="0.875" stop-color="#ffc700"/><stop offset="0.938" stop-color="#ffc200"/><stop offset="1.000" stop-color="#ffbd00"/></linearGradient><linearGradient id="f224" gradientUnits="userSpaceOnUse" x1="1600.5" y1="0" x2="1834.5" y2="0"><stop offset="0.000" stop-color="#859b0d"/><stop offset="0.062" stop-color="#8a9b0c"/><stop offset="0.125" stop-color="#8e9b0b"/><stop offset="0.188" stop-color="#939b0a"/><stop offset="0.250" stop-color="#979b09"/><stop offset="0.312" stop-color="#9b9b08"/><stop offset="0.375" stop-color="#9b9607"/><stop offset="0.438" stop-color="#9b9206"/><stop offset="0.500" stop-color="#9b8e05"/><stop offset="0.562" stop-color="#9b8a04"/><stop offset="0.625" stop-color="#9b8603"/><stop offset="0.688" stop-color="#9b8302"/><stop offset="0.750" stop-color="#9b7f01"/><stop offset="0.812" stop-color="#9b7c00"/><stop offset="0.875" stop-color="#9b7900"/><stop offset="0.938" stop-color="#9b7600"/><stop offset="1.000" stop-color="#9b7300"/></linearGradient><linearGradient id="f225" gradientUnits="userSpaceOnUse" x1="1600.5" y1="0" x2="1834.5" y2="0"><stop offset="0.000" stop-color="#dcff16"/><stop offset="0.062" stop-color="#e4ff14"/><stop offset="0.125" stop-color="#ebff13"/><stop offset="0.188" stop-color="#f2ff11"/><stop offset="0.250" stop-color="#f9ff10"/><stop offset="0.312" stop-color="#fffc0e"/><stop offset="0.375" stop-color="#fff50d"/><stop offset="0.438" stop-color="#ffee0b"/><stop offset="0.500" stop-color="#ffe809"/><stop offset="0.562" stop-color="#ffe107"/><stop offset="0.625" stop-color="#ffdb06"/><stop offset="0.688" stop-color="#ffd604"/><stop offset="0.750" stop-color="#ffd003"/><stop offset="0.812" stop-color="#ffcb02"/><stop offset="0.875" stop-color="#ffc600"/><stop offset="0.938" stop-color="#ffc100"/><stop offset="1.000" stop-color="#ffbc00"/></linearGradient><linearGradient id="f226" gradientUnits="userSpaceOnUse" x1="1600.5" y1="0" x2="1834.5" y2="0"><stop offset="0.000" stop-color="#869b0d"/><stop offset="0.062" stop-color="#8b9b0c"/><stop offset="0.125" stop-color="#8f9b0b"/><stop offset="0.188" stop-color="#939b0a"/><stop offset="0.250" stop-color="#989b0a"/><stop offset="0.312" stop-color="#9b9a09"/><stop offset="0.375" stop-color="#9b9507"/><stop offset="0.438" stop-color="#9b9106"/><stop offset="0.500" stop-color="#9b8d05"/><stop offset="0.562" stop-color="#9b8904"/><stop offset="0.625" stop-color="#9b8603"/><stop offset="0.688" stop-color="#9b8202"/><stop offset="0.750" stop-color="#9b7f02"/><stop offset="0.812" stop-color="#9b7b01"/><stop offset="0.875" stop-color="#9b7800"/><stop offset="0.938" stop-color="#9b7500"/><stop offset="1.000" stop-color="#9b7200"/></linearGradient><linearGradient id="f227" gradientUnits="userSpaceOnUse" x1="1600.5" y1="0" x2="1834.5" y2="0"><stop offset="0.000" stop-color="#deff16"/><stop offset="0.062" stop-color="#e5ff15"/><stop offset="0.125" stop-color="#ecff14"/><stop offset="0.188" stop-color="#f3ff12"/><stop offset="0.250" stop-color="#fbff11"/><stop offset="0.312" stop-color="#fffb0f"/><stop offset="0.375" stop-color="#fff40d"/><stop offset="0.438" stop-color="#ffed0b"/><stop offset="0.500" stop-color="#ffe60a"/><stop offset="0.562" stop-color="#ffe008"/><stop offset="0.625" stop-color="#ffda06"/><stop offset="0.688" stop-color="#ffd405"/><stop offset="0.750" stop-color="#ffcf03"/><stop offset="0.812" stop-color="#ffca02"/><stop offset="0.875" stop-color="#ffc401"/><stop offset="0.938" stop-color="#ffbf00"/><stop offset="1.000" stop-color="#ffbb00"/></linearGradient><linearGradient id="f228" gradientUnits="userSpaceOnUse" x1="1600.5" y1="0" x2="1834.5" y2="0"><stop offset="0.000" stop-color="#879b0d"/><stop offset="0.062" stop-color="#8b9b0d"/><stop offset="0.125" stop-color="#909b0c"/><stop offset="0.188" stop-color="#949b0b"/><stop offset="0.250" stop-color="#999b0a"/><stop offset="0.312" stop-color="#9b9909"/><stop offset="0.375" stop-color="#9b9408"/><stop offset="0.438" stop-color="#9b9007"/><stop offset="0.500" stop-color="#9b8c06"/><stop offset="0.562" stop-color="#9b8905"/><stop offset="0.625" stop-color="#9b8504"/><stop offset="0.688" stop-color="#9b8103"/><stop offset="0.750" stop-color="#9b7e02"/><stop offset="0.812" stop-color="#9b7b01"/><stop offset="0.875" stop-color="#9b7800"/><stop offset="0.938" stop-color="#9b7500"/><stop offset="1.000" stop-color="#9b7200"/></linearGradient><linearGradient id="f229" gradientUnits="userSpaceOnUse" x1="1600.5" y1="0" x2="1834.5" y2="0"><stop offset="0.000" stop-color="#dfff17"/><stop offset="0.062" stop-color="#e6ff16"/><stop offset="0.125" stop-color="#edff14"/><stop offset="0.188" stop-color="#f5ff13"/><stop offset="0.250" stop-color="#fcff11"/><stop offset="0.312" stop-color="#fff910"/><stop offset="0.375" stop-color="#fff20e"/><stop offset="0.438" stop-color="#ffec0c"/><stop offset="0.500" stop-color="#ffe50a"/><stop offset="0.562" stop-color="#ffdf09"/><stop offset="0.625" stop-color="#ffd907"/><stop offset="0.688" stop-color="#ffd305"/><stop offset="0.750" stop-color="#ffce04"/><stop offset="0.812" stop-color="#ffc803"/><stop offset="0.875" stop-color="#ffc301"/><stop offset="0.938" stop-color="#ffbe00"/><stop offset="1.000" stop-color="#ffba00"/></linearGradient><linearGradient id="f230" gradientUnits="userSpaceOnUse" x1="1600.5" y1="0" x2="1834.5" y2="0"><stop offset="0.000" stop-color="#889b0e"/><stop offset="0.062" stop-color="#8c9b0d"/><stop offset="0.125" stop-color="#919b0c"/><stop offset="0.188" stop-color="#959b0b"/><stop offset="0.250" stop-color="#9a9b0a"/><stop offset="0.312" stop-color="#9b9809"/><stop offset="0.375" stop-color="#9b9408"/><stop offset="0.438" stop-color="#9b9007"/><stop offset="0.500" stop-color="#9b8c06"/><stop offset="0.562" stop-color="#9b8805"/><stop offset="0.625" stop-color="#9b8404"/><stop offset="0.688" stop-color="#9b8103"/><stop offset="0.750" stop-color="#9b7d02"/><stop offset="0.812" stop-color="#9b7a01"/><stop offset="0.875" stop-color="#9b7701"/><stop offset="0.938" stop-color="#9b7400"/><stop offset="1.000" stop-color="#9b7100"/></linearGradient><linearGradient id="f231" gradientUnits="userSpaceOnUse" x1="1600.5" y1="0" x2="1834.5" y2="0"><stop offset="0.000" stop-color="#e0ff18"/><stop offset="0.062" stop-color="#e8ff16"/><stop offset="0.125" stop-color="#efff15"/><stop offset="0.188" stop-color="#f6ff14"/><stop offset="0.250" stop-color="#feff12"/><stop offset="0.312" stop-color="#fff810"/><stop offset="0.375" stop-color="#fff10e"/><stop offset="0.438" stop-color="#ffea0d"/><stop offset="0.500" stop-color="#ffe40b"/><stop offset="0.562" stop-color="#ffde09"/><stop offset="0.625" stop-color="#ffd808"/><stop offset="0.688" stop-color="#ffd206"/><stop offset="0.750" stop-color="#ffcd05"/><stop offset="0.812" stop-color="#ffc703"/><stop offset="0.875" stop-color="#ffc202"/><stop offset="0.938" stop-color="#ffbd00"/><stop offset="1.000" stop-color="#ffb900"/></linearGradient><linearGradient id="f232" gradientUnits="userSpaceOnUse" x1="1600.5" y1="0" x2="1834.5" y2="0"><stop offset="0.000" stop-color="#899b0e"/><stop offset="0.062" stop-color="#8d9b0d"/><stop offset="0.125" stop-color="#929b0d"/><stop offset="0.188" stop-color="#969b0c"/><stop offset="0.250" stop-color="#9b9b0b"/><stop offset="0.312" stop-color="#9b970a"/><stop offset="0.375" stop-color="#9b9309"/><stop offset="0.438" stop-color="#9b8f07"/><stop offset="0.500" stop-color="#9b8b06"/><stop offset="0.562" stop-color="#9b8705"/><stop offset="0.625" stop-color="#9b8304"/><stop offset="0.688" stop-color="#9b8003"/><stop offset="0.750" stop-color="#9b7d03"/><stop offset="0.812" stop-color="#9b7902"/><stop offset="0.875" stop-color="#9b7601"/><stop offset="0.938" stop-color="#9b7300"/><stop offset="1.000" stop-color="#9b7000"/></linearGradient><linearGradient id="f233" gradientUnits="userSpaceOnUse" x1="1600.5" y1="0" x2="1834.5" y2="0"><stop offset="0.000" stop-color="#e2ff19"/><stop offset="0.062" stop-color="#e9ff17"/><stop offset="0.125" stop-color="#f0ff16"/><stop offset="0.188" stop-color="#f8ff14"/><stop offset="0.250" stop-color="#fffe13"/><stop offset="0.312" stop-color="#fff711"/><stop offset="0.375" stop-color="#fff00f"/><stop offset="0.438" stop-color="#ffe90d"/><stop offset="0.500" stop-color="#ffe20b"/><stop offset="0.562" stop-color="#ffdc0a"/><stop offset="0.625" stop-color="#ffd608"/><stop offset="0.688" stop-color="#ffd107"/><stop offset="0.750" stop-color="#ffcb05"/><stop offset="0.812" stop-color="#ffc604"/><stop offset="0.875" stop-color="#ffc102"/><stop offset="0.938" stop-color="#ffbc01"/><stop offset="1.000" stop-color="#ffb800"/></linearGradient><linearGradient id="f234" gradientUnits="userSpaceOnUse" x1="1600.5" y1="0" x2="1834.5" y2="0"><stop offset="0.000" stop-color="#8a9b0f"/><stop offset="0.062" stop-color="#8e9b0e"/><stop offset="0.125" stop-color="#929b0d"/><stop offset="0.188" stop-color="#979b0c"/><stop offset="0.250" stop-color="#9b9b0b"/><stop offset="0.312" stop-color="#9b960a"/><stop offset="0.375" stop-color="#9b9209"/><stop offset="0.438" stop-color="#9b8e08"/><stop offset="0.500" stop-color="#9b8a07"/><stop offset="0.562" stop-color="#9b8606"/><stop offset="0.625" stop-color="#9b8305"/><stop offset="0.688" stop-color="#9b7f04"/><stop offset="0.750" stop-color="#9b7c03"/><stop offset="0.812" stop-color="#9b7902"/><stop offset="0.875" stop-color="#9b7601"/><stop offset="0.938" stop-color="#9b7300"/><stop offset="1.000" stop-color="#9b7000"/></linearGradient><linearGradient id="f235" gradientUnits="userSpaceOnUse" x1="1600.5" y1="0" x2="1834.5" y2="0"><stop offset="0.000" stop-color="#e3ff19"/><stop offset="0.062" stop-color="#eaff18"/><stop offset="0.125" stop-color="#f2ff16"/><stop offset="0.188" stop-color="#f9ff15"/><stop offset="0.250" stop-color="#fffc13"/><stop offset="0.312" stop-color="#fff511"/><stop offset="0.375" stop-color="#ffee10"/><stop offset="0.438" stop-color="#ffe80e"/><stop offset="0.500" stop-color="#ffe10c"/><stop offset="0.562" stop-color="#ffdb0a"/><stop offset="0.625" stop-color="#ffd509"/><stop offset="0.688" stop-color="#ffd007"/><stop offset="0.750" stop-color="#ffca06"/><stop offset="0.812" stop-color="#ffc504"/><stop offset="0.875" stop-color="#ffc003"/><stop offset="0.938" stop-color="#ffbb02"/><stop offset="1.000" stop-color="#ffb700"/></linearGradient><linearGradient id="f236" gradientUnits="userSpaceOnUse" x1="1600.5" y1="0" x2="1834.5" y2="0"><stop offset="0.000" stop-color="#8a9b0f"/><stop offset="0.062" stop-color="#8f9b0e"/><stop offset="0.125" stop-color="#939b0e"/><stop offset="0.188" stop-color="#989b0d"/><stop offset="0.250" stop-color="#9b9a0c"/><stop offset="0.312" stop-color="#9b950a"/><stop offset="0.375" stop-color="#9b9109"/><stop offset="0.438" stop-color="#9b8d08"/><stop offset="0.500" stop-color="#9b8907"/><stop offset="0.562" stop-color="#9b8506"/><stop offset="0.625" stop-color="#9b8205"/><stop offset="0.688" stop-color="#9b7e04"/><stop offset="0.750" stop-color="#9b7b03"/><stop offset="0.812" stop-color="#9b7802"/><stop offset="0.875" stop-color="#9b7502"/><stop offset="0.938" stop-color="#9b7201"/><stop offset="1.000" stop-color="#9b6f00"/></linearGradient><linearGradient id="f237" gradientUnits="userSpaceOnUse" x1="1600.5" y1="0" x2="1834.5" y2="0"><stop offset="0.000" stop-color="#e5ff1a"/><stop offset="0.062" stop-color="#ecff19"/><stop offset="0.125" stop-color="#f3ff17"/><stop offset="0.188" stop-color="#fbff16"/><stop offset="0.250" stop-color="#fffb14"/><stop offset="0.312" stop-color="#fff412"/><stop offset="0.375" stop-color="#ffed10"/><stop offset="0.438" stop-color="#ffe60e"/><stop offset="0.500" stop-color="#ffe00d"/><stop offset="0.562" stop-color="#ffda0b"/><stop offset="0.625" stop-color="#ffd409"/><stop offset="0.688" stop-color="#ffce08"/><stop offset="0.750" stop-color="#ffc906"/><stop offset="0.812" stop-color="#ffc405"/><stop offset="0.875" stop-color="#ffbf03"/><stop offset="0.938" stop-color="#ffba02"/><stop offset="1.000" stop-color="#ffb501"/></linearGradient><linearGradient id="f238" gradientUnits="userSpaceOnUse" x1="1600.5" y1="0" x2="1834.5" y2="0"><stop offset="0.000" stop-color="#8b9b10"/><stop offset="0.062" stop-color="#909b0f"/><stop offset="0.125" stop-color="#949b0e"/><stop offset="0.188" stop-color="#999b0d"/><stop offset="0.250" stop-color="#9b990c"/><stop offset="0.312" stop-color="#9b940b"/><stop offset="0.375" stop-color="#9b900a"/><stop offset="0.438" stop-color="#9b8c09"/><stop offset="0.500" stop-color="#9b8807"/><stop offset="0.562" stop-color="#9b8506"/><stop offset="0.625" stop-color="#9b8105"/><stop offset="0.688" stop-color="#9b7e04"/><stop offset="0.750" stop-color="#9b7a04"/><stop offset="0.812" stop-color="#9b7703"/><stop offset="0.875" stop-color="#9b7402"/><stop offset="0.938" stop-color="#9b7101"/><stop offset="1.000" stop-color="#9b6f00"/></linearGradient><linearGradient id="f239" gradientUnits="userSpaceOnUse" x1="1600.5" y1="0" x2="1834.5" y2="0"><stop offset="0.000" stop-color="#e6ff1b"/><stop offset="0.062" stop-color="#edff19"/><stop offset="0.125" stop-color="#f5ff18"/><stop offset="0.188" stop-color="#fcff16"/><stop offset="0.250" stop-color="#fff915"/><stop offset="0.312" stop-color="#fff213"/><stop offset="0.375" stop-color="#ffeb11"/><stop offset="0.438" stop-color="#ffe50f"/><stop offset="0.500" stop-color="#ffdf0d"/><stop offset="0.562" stop-color="#ffd90b"/><stop offset="0.625" stop-color="#ffd30a"/><stop offset="0.688" stop-color="#ffcd08"/><stop offset="0.750" stop-color="#ffc807"/><stop offset="0.812" stop-color="#ffc305"/><stop offset="0.875" stop-color="#ffbe04"/><stop offset="0.938" stop-color="#ffb903"/><stop offset="1.000" stop-color="#ffb401"/></linearGradient><linearGradient id="f240" gradientUnits="userSpaceOnUse" x1="1600.5" y1="0" x2="1834.5" y2="0"><stop offset="0.000" stop-color="#8c9b10"/><stop offset="0.062" stop-color="#909b0f"/><stop offset="0.125" stop-color="#959b0e"/><stop offset="0.188" stop-color="#9a9b0e"/><stop offset="0.250" stop-color="#9b980c"/><stop offset="0.312" stop-color="#9b940b"/><stop offset="0.375" stop-color="#9b8f0a"/><stop offset="0.438" stop-color="#9b8b09"/><stop offset="0.500" stop-color="#9b8808"/><stop offset="0.562" stop-color="#9b8407"/><stop offset="0.625" stop-color="#9b8006"/><stop offset="0.688" stop-color="#9b7d05"/><stop offset="0.750" stop-color="#9b7a04"/><stop offset="0.812" stop-color="#9b7703"/><stop offset="0.875" stop-color="#9b7402"/><stop offset="0.938" stop-color="#9b7101"/><stop offset="1.000" stop-color="#9b6e01"/></linearGradient><linearGradient id="f241" gradientUnits="userSpaceOnUse" x1="1600.5" y1="0" x2="1834.5" y2="0"><stop offset="0.000" stop-color="#e7ff1c"/><stop offset="0.062" stop-color="#efff1a"/><stop offset="0.125" stop-color="#f6ff19"/><stop offset="0.188" stop-color="#feff17"/><stop offset="0.250" stop-color="#fff815"/><stop offset="0.312" stop-color="#fff113"/><stop offset="0.375" stop-color="#ffea11"/><stop offset="0.438" stop-color="#ffe40f"/><stop offset="0.500" stop-color="#ffdd0e"/><stop offset="0.562" stop-color="#ffd70c"/><stop offset="0.625" stop-color="#ffd20a"/><stop offset="0.688" stop-color="#ffcc09"/><stop offset="0.750" stop-color="#ffc707"/><stop offset="0.812" stop-color="#ffc206"/><stop offset="0.875" stop-color="#ffbd04"/><stop offset="0.938" stop-color="#ffb803"/><stop offset="1.000" stop-color="#ffb302"/></linearGradient><linearGradient id="f242" gradientUnits="userSpaceOnUse" x1="1600.5" y1="0" x2="1834.5" y2="0"><stop offset="0.000" stop-color="#8d9b11"/><stop offset="0.062" stop-color="#919b10"/><stop offset="0.125" stop-color="#969b0f"/><stop offset="0.188" stop-color="#9a9b0e"/><stop offset="0.250" stop-color="#9b970d"/><stop offset="0.312" stop-color="#9b930c"/><stop offset="0.375" stop-color="#9b8f0a"/><stop offset="0.438" stop-color="#9b8b09"/><stop offset="0.500" stop-color="#9b8708"/><stop offset="0.562" stop-color="#9b8307"/><stop offset="0.625" stop-color="#9b8006"/><stop offset="0.688" stop-color="#9b7c05"/><stop offset="0.750" stop-color="#9b7904"/><stop offset="0.812" stop-color="#9b7603"/><stop offset="0.875" stop-color="#9b7302"/><stop offset="0.938" stop-color="#9b7002"/><stop offset="1.000" stop-color="#9b6d01"/></linearGradient><linearGradient id="f243" gradientUnits="userSpaceOnUse" x1="1600.5" y1="0" x2="1834.5" y2="0"><stop offset="0.000" stop-color="#e9ff1c"/><stop offset="0.062" stop-color="#f0ff1b"/><stop offset="0.125" stop-color="#f8ff19"/><stop offset="0.188" stop-color="#fffe18"/><stop offset="0.250" stop-color="#fff616"/><stop offset="0.312" stop-color="#ffef14"/><stop offset="0.375" stop-color="#ffe912"/><stop offset="0.438" stop-color="#ffe210"/><stop offset="0.500" stop-color="#ffdc0e"/><stop offset="0.562" stop-color="#ffd60d"/><stop offset="0.625" stop-color="#ffd00b"/><stop offset="0.688" stop-color="#ffcb09"/><stop offset="0.750" stop-color="#ffc608"/><stop offset="0.812" stop-color="#ffc006"/><stop offset="0.875" stop-color="#ffbc05"/><stop offset="0.938" stop-color="#ffb704"/><stop offset="1.000" stop-color="#ffb202"/></linearGradient><linearGradient id="f244" gradientUnits="userSpaceOnUse" x1="1600.5" y1="0" x2="1834.5" y2="0"><stop offset="0.000" stop-color="#8e9b11"/><stop offset="0.062" stop-color="#929b10"/><stop offset="0.125" stop-color="#979b0f"/><stop offset="0.188" stop-color="#9b9b0e"/><stop offset="0.250" stop-color="#9b960d"/><stop offset="0.312" stop-color="#9b920c"/><stop offset="0.375" stop-color="#9b8e0b"/><stop offset="0.438" stop-color="#9b8a0a"/><stop offset="0.500" stop-color="#9b8608"/><stop offset="0.562" stop-color="#9b8207"/><stop offset="0.625" stop-color="#9b7f06"/><stop offset="0.688" stop-color="#9b7c05"/><stop offset="0.750" stop-color="#9b7805"/><stop offset="0.812" stop-color="#9b7504"/><stop offset="0.875" stop-color="#9b7203"/><stop offset="0.938" stop-color="#9b6f02"/><stop offset="1.000" stop-color="#9b6d01"/></linearGradient><clipPath id="cIin"><path d="M1600.8,175 L1834.3,329.2 V351 H1600.8Z"/></clipPath><clipPath id="cIout"><path d="M1600.8,153.7 H1834.3 V329.2 L1600.8,175Z"/></clipPath></defs>
<g clip-path="url(#cIin)"><rect x="1600.5" y="153.5" width="234.0" height="4.6" fill="url(#f145)"/><rect x="1600.5" y="157.5" width="234.0" height="4.6" fill="url(#f147)"/><rect x="1600.5" y="161.5" width="234.0" height="4.6" fill="url(#f149)"/><rect x="1600.5" y="165.5" width="234.0" height="4.6" fill="url(#f151)"/><rect x="1600.5" y="169.5" width="234.0" height="4.6" fill="url(#f153)"/><rect x="1600.5" y="173.5" width="234.0" height="4.6" fill="url(#f155)"/><rect x="1600.5" y="177.5" width="234.0" height="4.6" fill="url(#f157)"/><rect x="1600.5" y="181.5" width="234.0" height="4.6" fill="url(#f159)"/><rect x="1600.5" y="185.5" width="234.0" height="4.6" fill="url(#f161)"/><rect x="1600.5" y="189.5" width="234.0" height="4.6" fill="url(#f163)"/><rect x="1600.5" y="193.5" width="234.0" height="4.6" fill="url(#f165)"/><rect x="1600.5" y="197.5" width="234.0" height="4.6" fill="url(#f167)"/><rect x="1600.5" y="201.5" width="234.0" height="4.6" fill="url(#f169)"/><rect x="1600.5" y="205.5" width="234.0" height="4.6" fill="url(#f171)"/><rect x="1600.5" y="209.5" width="234.0" height="4.6" fill="url(#f173)"/><rect x="1600.5" y="213.5" width="234.0" height="4.6" fill="url(#f175)"/><rect x="1600.5" y="217.5" width="234.0" height="4.6" fill="url(#f177)"/><rect x="1600.5" y="221.5" width="234.0" height="4.6" fill="url(#f179)"/><rect x="1600.5" y="225.5" width="234.0" height="4.6" fill="url(#f181)"/><rect x="1600.5" y="229.5" width="234.0" height="4.6" fill="url(#f183)"/><rect x="1600.5" y="233.5" width="234.0" height="4.6" fill="url(#f185)"/><rect x="1600.5" y="237.5" width="234.0" height="4.6" fill="url(#f187)"/><rect x="1600.5" y="241.5" width="234.0" height="4.6" fill="url(#f189)"/><rect x="1600.5" y="245.5" width="234.0" height="4.6" fill="url(#f191)"/><rect x="1600.5" y="249.5" width="234.0" height="4.6" fill="url(#f193)"/><rect x="1600.5" y="253.5" width="234.0" height="4.6" fill="url(#f195)"/><rect x="1600.5" y="257.5" width="234.0" height="4.6" fill="url(#f197)"/><rect x="1600.5" y="261.5" width="234.0" height="4.6" fill="url(#f199)"/><rect x="1600.5" y="265.5" width="234.0" height="4.6" fill="url(#f201)"/><rect x="1600.5" y="269.5" width="234.0" height="4.6" fill="url(#f203)"/><rect x="1600.5" y="273.5" width="234.0" height="4.6" fill="url(#f205)"/><rect x="1600.5" y="277.5" width="234.0" height="4.6" fill="url(#f207)"/><rect x="1600.5" y="281.5" width="234.0" height="4.6" fill="url(#f209)"/><rect x="1600.5" y="285.5" width="234.0" height="4.6" fill="url(#f211)"/><rect x="1600.5" y="289.5" width="234.0" height="4.6" fill="url(#f213)"/><rect x="1600.5" y="293.5" width="234.0" height="4.6" fill="url(#f215)"/><rect x="1600.5" y="297.5" width="234.0" height="4.6" fill="url(#f217)"/><rect x="1600.5" y="301.5" width="234.0" height="4.6" fill="url(#f219)"/><rect x="1600.5" y="305.5" width="234.0" height="4.6" fill="url(#f221)"/><rect x="1600.5" y="309.5" width="234.0" height="4.6" fill="url(#f223)"/><rect x="1600.5" y="313.5" width="234.0" height="4.6" fill="url(#f225)"/><rect x="1600.5" y="317.5" width="234.0" height="4.6" fill="url(#f227)"/><rect x="1600.5" y="321.5" width="234.0" height="4.6" fill="url(#f229)"/><rect x="1600.5" y="325.5" width="234.0" height="4.6" fill="url(#f231)"/><rect x="1600.5" y="329.5" width="234.0" height="4.6" fill="url(#f233)"/><rect x="1600.5" y="333.5" width="234.0" height="4.6" fill="url(#f235)"/><rect x="1600.5" y="337.5" width="234.0" height="4.6" fill="url(#f237)"/><rect x="1600.5" y="341.5" width="234.0" height="4.6" fill="url(#f239)"/><rect x="1600.5" y="345.5" width="234.0" height="4.6" fill="url(#f241)"/><rect x="1600.5" y="349.5" width="234.0" height="4.6" fill="url(#f243)"/></g><g clip-path="url(#cIout)"><rect x="1600.5" y="153.5" width="234.0" height="4.6" fill="url(#f146)"/><rect x="1600.5" y="157.5" width="234.0" height="4.6" fill="url(#f148)"/><rect x="1600.5" y="161.5" width="234.0" height="4.6" fill="url(#f150)"/><rect x="1600.5" y="165.5" width="234.0" height="4.6" fill="url(#f152)"/><rect x="1600.5" y="169.5" width="234.0" height="4.6" fill="url(#f154)"/><rect x="1600.5" y="173.5" width="234.0" height="4.6" fill="url(#f156)"/><rect x="1600.5" y="177.5" width="234.0" height="4.6" fill="url(#f158)"/><rect x="1600.5" y="181.5" width="234.0" height="4.6" fill="url(#f160)"/><rect x="1600.5" y="185.5" width="234.0" height="4.6" fill="url(#f162)"/><rect x="1600.5" y="189.5" width="234.0" height="4.6" fill="url(#f164)"/><rect x="1600.5" y="193.5" width="234.0" height="4.6" fill="url(#f166)"/><rect x="1600.5" y="197.5" width="234.0" height="4.6" fill="url(#f168)"/><rect x="1600.5" y="201.5" width="234.0" height="4.6" fill="url(#f170)"/><rect x="1600.5" y="205.5" width="234.0" height="4.6" fill="url(#f172)"/><rect x="1600.5" y="209.5" width="234.0" height="4.6" fill="url(#f174)"/><rect x="1600.5" y="213.5" width="234.0" height="4.6" fill="url(#f176)"/><rect x="1600.5" y="217.5" width="234.0" height="4.6" fill="url(#f178)"/><rect x="1600.5" y="221.5" width="234.0" height="4.6" fill="url(#f180)"/><rect x="1600.5" y="225.5" width="234.0" height="4.6" fill="url(#f182)"/><rect x="1600.5" y="229.5" width="234.0" height="4.6" fill="url(#f184)"/><rect x="1600.5" y="233.5" width="234.0" height="4.6" fill="url(#f186)"/><rect x="1600.5" y="237.5" width="234.0" height="4.6" fill="url(#f188)"/><rect x="1600.5" y="241.5" width="234.0" height="4.6" fill="url(#f190)"/><rect x="1600.5" y="245.5" width="234.0" height="4.6" fill="url(#f192)"/><rect x="1600.5" y="249.5" width="234.0" height="4.6" fill="url(#f194)"/><rect x="1600.5" y="253.5" width="234.0" height="4.6" fill="url(#f196)"/><rect x="1600.5" y="257.5" width="234.0" height="4.6" fill="url(#f198)"/><rect x="1600.5" y="261.5" width="234.0" height="4.6" fill="url(#f200)"/><rect x="1600.5" y="265.5" width="234.0" height="4.6" fill="url(#f202)"/><rect x="1600.5" y="269.5" width="234.0" height="4.6" fill="url(#f204)"/><rect x="1600.5" y="273.5" width="234.0" height="4.6" fill="url(#f206)"/><rect x="1600.5" y="277.5" width="234.0" height="4.6" fill="url(#f208)"/><rect x="1600.5" y="281.5" width="234.0" height="4.6" fill="url(#f210)"/><rect x="1600.5" y="285.5" width="234.0" height="4.6" fill="url(#f212)"/><rect x="1600.5" y="289.5" width="234.0" height="4.6" fill="url(#f214)"/><rect x="1600.5" y="293.5" width="234.0" height="4.6" fill="url(#f216)"/><rect x="1600.5" y="297.5" width="234.0" height="4.6" fill="url(#f218)"/><rect x="1600.5" y="301.5" width="234.0" height="4.6" fill="url(#f220)"/><rect x="1600.5" y="305.5" width="234.0" height="4.6" fill="url(#f222)"/><rect x="1600.5" y="309.5" width="234.0" height="4.6" fill="url(#f224)"/><rect x="1600.5" y="313.5" width="234.0" height="4.6" fill="url(#f226)"/><rect x="1600.5" y="317.5" width="234.0" height="4.6" fill="url(#f228)"/><rect x="1600.5" y="321.5" width="234.0" height="4.6" fill="url(#f230)"/><rect x="1600.5" y="325.5" width="234.0" height="4.6" fill="url(#f232)"/><rect x="1600.5" y="329.5" width="234.0" height="4.6" fill="url(#f234)"/><rect x="1600.5" y="333.5" width="234.0" height="4.6" fill="url(#f236)"/><rect x="1600.5" y="337.5" width="234.0" height="4.6" fill="url(#f238)"/><rect x="1600.5" y="341.5" width="234.0" height="4.6" fill="url(#f240)"/><rect x="1600.5" y="345.5" width="234.0" height="4.6" fill="url(#f242)"/><rect x="1600.5" y="349.5" width="234.0" height="4.6" fill="url(#f244)"/></g>
<rect x="1150.2" y="146.0" width="691.5999999999999" height="524.5" fill="none" stroke="#a0a0a0" stroke-width="1"/>
<rect x="1149.95" y="146.5" width="1.6" height="523.5" fill="#a8a8a8"/>
<rect x="1149.95" y="669.25" width="690.5999999999999" height="1.6" fill="#a8a8a8"/>
<rect x="1144.7" y="669.25" width="6" height="1.5" fill="#a8a8a8"/>
<text x="1144.3" y="676.5" font-size="15.5" fill="#d8d8d8" text-anchor="end">0</text>
<rect x="1149.45" y="670.0" width="1.5" height="6" fill="#a8a8a8"/>
<text x="1150.2" y="693.3" font-size="15.5" fill="#d8d8d8" text-anchor="middle">0</text>
<rect x="1144.7" y="607.20" width="6" height="1.5" fill="#a8a8a8"/>
<text x="1144.3" y="614.5" font-size="15.5" fill="#d8d8d8" text-anchor="end" textLength="21.8" lengthAdjust="spacingAndGlyphs">0,1</text>
<rect x="1231.68" y="670.0" width="1.5" height="6" fill="#a8a8a8"/>
<text x="1232.4" y="693.3" font-size="15.5" fill="#d8d8d8" text-anchor="middle" textLength="21.8" lengthAdjust="spacingAndGlyphs">0,1</text>
<rect x="1144.7" y="545.15" width="6" height="1.5" fill="#a8a8a8"/>
<text x="1144.3" y="552.4" font-size="15.5" fill="#d8d8d8" text-anchor="end" textLength="21.8" lengthAdjust="spacingAndGlyphs">0,2</text>
<rect x="1313.91" y="670.0" width="1.5" height="6" fill="#a8a8a8"/>
<text x="1314.7" y="693.3" font-size="15.5" fill="#d8d8d8" text-anchor="middle" textLength="21.8" lengthAdjust="spacingAndGlyphs">0,2</text>
<rect x="1144.7" y="483.10" width="6" height="1.5" fill="#a8a8a8"/>
<text x="1144.3" y="490.4" font-size="15.5" fill="#d8d8d8" text-anchor="end" textLength="21.8" lengthAdjust="spacingAndGlyphs">0,3</text>
<rect x="1396.14" y="670.0" width="1.5" height="6" fill="#a8a8a8"/>
<text x="1396.9" y="693.3" font-size="15.5" fill="#d8d8d8" text-anchor="middle" textLength="21.8" lengthAdjust="spacingAndGlyphs">0,3</text>
<rect x="1144.7" y="421.05" width="6" height="1.5" fill="#a8a8a8"/>
<text x="1144.3" y="428.3" font-size="15.5" fill="#d8d8d8" text-anchor="end" textLength="21.8" lengthAdjust="spacingAndGlyphs">0,4</text>
<rect x="1478.37" y="670.0" width="1.5" height="6" fill="#a8a8a8"/>
<text x="1479.1" y="693.3" font-size="15.5" fill="#d8d8d8" text-anchor="middle" textLength="21.8" lengthAdjust="spacingAndGlyphs">0,4</text>
<rect x="1144.7" y="359.00" width="6" height="1.5" fill="#a8a8a8"/>
<text x="1144.3" y="366.2" font-size="15.5" fill="#d8d8d8" text-anchor="end" textLength="21.8" lengthAdjust="spacingAndGlyphs">0,5</text>
<rect x="1560.60" y="670.0" width="1.5" height="6" fill="#a8a8a8"/>
<text x="1561.3" y="693.3" font-size="15.5" fill="#d8d8d8" text-anchor="middle" textLength="21.8" lengthAdjust="spacingAndGlyphs">0,5</text>
<rect x="1144.7" y="296.95" width="6" height="1.5" fill="#a8a8a8"/>
<text x="1144.3" y="304.2" font-size="15.5" fill="#d8d8d8" text-anchor="end" textLength="21.8" lengthAdjust="spacingAndGlyphs">0,6</text>
<rect x="1642.83" y="670.0" width="1.5" height="6" fill="#a8a8a8"/>
<text x="1643.6" y="693.3" font-size="15.5" fill="#d8d8d8" text-anchor="middle" textLength="21.8" lengthAdjust="spacingAndGlyphs">0,6</text>
<rect x="1144.7" y="234.90" width="6" height="1.5" fill="#a8a8a8"/>
<text x="1144.3" y="242.2" font-size="15.5" fill="#d8d8d8" text-anchor="end" textLength="21.8" lengthAdjust="spacingAndGlyphs">0,7</text>
<rect x="1725.06" y="670.0" width="1.5" height="6" fill="#a8a8a8"/>
<text x="1725.8" y="693.3" font-size="15.5" fill="#d8d8d8" text-anchor="middle" textLength="21.8" lengthAdjust="spacingAndGlyphs">0,7</text>
<rect x="1144.7" y="172.85" width="6" height="1.5" fill="#a8a8a8"/>
<text x="1144.3" y="180.1" font-size="15.5" fill="#d8d8d8" text-anchor="end" textLength="21.8" lengthAdjust="spacingAndGlyphs">0,8</text>
<rect x="1807.29" y="670.0" width="1.5" height="6" fill="#a8a8a8"/>
<text x="1808.0" y="693.3" font-size="15.5" fill="#d8d8d8" text-anchor="middle" textLength="21.8" lengthAdjust="spacingAndGlyphs">0,8</text>
<text x="90.6" y="771" font-size="30" fill="#f4f4f4" text-anchor="start" textLength="235.5" lengthAdjust="spacingAndGlyphs">Current Reading</text>
<text x="92" y="815.2" font-size="24.5" fill="#f4f4f4" text-anchor="start" textLength="108.5" lengthAdjust="spacingAndGlyphs">x: 0,4082</text>
<text x="92" y="858.3" font-size="24.5" fill="#f4f4f4" text-anchor="start" textLength="110" lengthAdjust="spacingAndGlyphs">y: 0,5099</text>
<text x="92" y="902.2" font-size="24.5" fill="#f4f4f4" text-anchor="start" textLength="103" lengthAdjust="spacingAndGlyphs">fL: 59,42</text>
<text x="92" y="945.8" font-size="24.5" fill="#f4f4f4" text-anchor="start" textLength="155" lengthAdjust="spacingAndGlyphs">cd/m²: 203,6</text>
<rect x="452.4" y="749.7" width="269.20000000000005" height="192.29999999999995" fill="#232323"/>
<rect x="446.4" y="748.95" width="275.20000000000005" height="1.5" fill="#a8a8a8"/>
<text x="446.5" y="755.7" font-size="15.5" fill="#d8d8d8" text-anchor="end">20</text>
<rect x="446.4" y="797.03" width="275.20000000000005" height="1.5" fill="#a8a8a8"/>
<text x="446.5" y="803.8" font-size="15.5" fill="#d8d8d8" text-anchor="end">10</text>
<rect x="446.4" y="845.10" width="275.20000000000005" height="1.5" fill="#a8a8a8"/>
<text x="446.5" y="851.9" font-size="15.5" fill="#d8d8d8" text-anchor="end">0</text>
<rect x="446.4" y="893.17" width="275.20000000000005" height="1.5" fill="#a8a8a8"/>
<text x="446.5" y="899.9" font-size="15.5" fill="#d8d8d8" text-anchor="end">-10</text>
<rect x="446.4" y="941.25" width="275.20000000000005" height="1.5" fill="#a8a8a8"/>
<text x="446.5" y="948.0" font-size="15.5" fill="#d8d8d8" text-anchor="end">-20</text>
<rect x="451.65" y="749.7" width="1.6" height="198.29999999999995" fill="#a8a8a8"/>
<rect x="720.85" y="749.7" width="1.5" height="198.29999999999995" fill="#a8a8a8"/>
<text x="572.8" y="743.6" font-size="15.5" fill="#d8d8d8" text-anchor="middle" textLength="87.5" lengthAdjust="spacingAndGlyphs">RGB Balance</text>
<text x="587" y="959" font-size="15.5" fill="#d8d8d8" text-anchor="middle" textLength="38" lengthAdjust="spacingAndGlyphs">100%</text>
<defs><linearGradient id="gR" x1="0" y1="0" x2="0" y2="1"><stop offset="0" stop-color="#ff3030"/><stop offset="0.5" stop-color="#f00000"/><stop offset="1" stop-color="#a00000"/></linearGradient><linearGradient id="gG" x1="0" y1="0" x2="0" y2="1"><stop offset="0" stop-color="#20b020"/><stop offset="0.5" stop-color="#008800"/><stop offset="1" stop-color="#004800"/></linearGradient><linearGradient id="gB" x1="0" y1="0" x2="0" y2="1"><stop offset="0" stop-color="#3a3aff"/><stop offset="0.5" stop-color="#0000f0"/><stop offset="1" stop-color="#000070"/></linearGradient></defs>
<rect x="479.7" y="845.9" width="71.5" height="17.3" fill="url(#gR)" stroke="#000" stroke-width="1.5"/>
<rect x="551.2" y="807.6" width="71.9" height="38.2" fill="url(#gG)" stroke="#000" stroke-width="1.5"/>
<rect x="623.1" y="776.1" width="72.6" height="69.7" fill="url(#gB)" stroke="#000" stroke-width="1.5"/>
<defs><linearGradient id="gLc" x1="0" y1="0" x2="1" y2="0"><stop offset="0" stop-color="#202020"/><stop offset="1" stop-color="#303030"/></linearGradient></defs>
<rect x="744.9" y="724" width="767.8000000000001" height="17" fill="#282828"/>
<rect x="744.9" y="741" width="767.8000000000001" height="16.4" fill="#141414"/>
<rect x="744.9" y="724" width="21.5" height="33.4" fill="#060606"/>
<rect x="744.9" y="757.40" width="767.8000000000001" height="30.20" fill="#3d3d3d"/>
<rect x="744.9" y="757.40" width="21.5" height="30.20" fill="url(#gLc)"/>
<text x="773.3" y="778.9" font-size="19.5" fill="#f2f2f2" text-anchor="start" textLength="85.2" lengthAdjust="spacingAndGlyphs">x: CIE31</text>
<text x="943.1" y="778.9" font-size="19.5" fill="#f2f2f2" text-anchor="start" textLength="73.5" lengthAdjust="spacingAndGlyphs">0,3344</text>
<text x="1058.1" y="778.9" font-size="19.5" fill="#f2f2f2" text-anchor="start" textLength="73.5" lengthAdjust="spacingAndGlyphs">0,3590</text>
<text x="1173.5" y="778.9" font-size="19.5" fill="#f2f2f2" text-anchor="start" textLength="73.5" lengthAdjust="spacingAndGlyphs">0,3816</text>
<text x="1289.3" y="778.9" font-size="19.5" fill="#f2f2f2" text-anchor="start" textLength="73.5" lengthAdjust="spacingAndGlyphs">0,4050</text>
<text x="1404.6" y="778.9" font-size="19.5" fill="#f2f2f2" text-anchor="start" textLength="73.5" lengthAdjust="spacingAndGlyphs">0,4082</text>
<rect x="744.9" y="787.60" width="767.8000000000001" height="30.20" fill="#868686"/>
<rect x="744.9" y="787.60" width="21.5" height="30.20" fill="url(#gLc)"/>
<text x="773.3" y="809.1" font-size="19.5" fill="#f2f2f2" text-anchor="start" textLength="85.2" lengthAdjust="spacingAndGlyphs">y: CIE31</text>
<text x="943.1" y="809.1" font-size="19.5" fill="#f2f2f2" text-anchor="start" textLength="73.5" lengthAdjust="spacingAndGlyphs">0,3695</text>
<text x="1058.1" y="809.1" font-size="19.5" fill="#f2f2f2" text-anchor="start" textLength="73.5" lengthAdjust="spacingAndGlyphs">0,4144</text>
<text x="1173.5" y="809.1" font-size="19.5" fill="#f2f2f2" text-anchor="start" textLength="73.5" lengthAdjust="spacingAndGlyphs">0,4562</text>
<text x="1289.3" y="809.1" font-size="19.5" fill="#f2f2f2" text-anchor="start" textLength="73.5" lengthAdjust="spacingAndGlyphs">0,4999</text>
<text x="1404.6" y="809.1" font-size="19.5" fill="#f2f2f2" text-anchor="start" textLength="73.5" lengthAdjust="spacingAndGlyphs">0,5099</text>
<rect x="744.9" y="817.80" width="767.8000000000001" height="30.20" fill="#3d3d3d"/>
<rect x="744.9" y="817.80" width="21.5" height="30.20" fill="url(#gLc)"/>
<text x="773.3" y="839.3" font-size="19.5" fill="#f2f2f2" text-anchor="start" textLength="14.5" lengthAdjust="spacingAndGlyphs">Y</text>
<text x="943.1" y="839.3" font-size="19.5" fill="#f2f2f2" text-anchor="start" textLength="100.5" lengthAdjust="spacingAndGlyphs">212,9670</text>
<text x="1058.1" y="839.3" font-size="19.5" fill="#f2f2f2" text-anchor="start" textLength="100.5" lengthAdjust="spacingAndGlyphs">208,8205</text>
<text x="1173.5" y="839.3" font-size="19.5" fill="#f2f2f2" text-anchor="start" textLength="100.5" lengthAdjust="spacingAndGlyphs">205,6181</text>
<text x="1289.3" y="839.3" font-size="19.5" fill="#f2f2f2" text-anchor="start" textLength="100.5" lengthAdjust="spacingAndGlyphs">202,7837</text>
<text x="1404.6" y="839.3" font-size="19.5" fill="#f2f2f2" text-anchor="start" textLength="100.5" lengthAdjust="spacingAndGlyphs">203,6048</text>
<rect x="744.9" y="848.00" width="767.8000000000001" height="30.20" fill="#868686"/>
<rect x="744.9" y="848.00" width="21.5" height="30.20" fill="url(#gLc)"/>
<text x="773.3" y="869.5" font-size="19.5" fill="#f2f2f2" text-anchor="start" textLength="154.5" lengthAdjust="spacingAndGlyphs">Target x:CIE31</text>
<text x="943.1" y="869.5" font-size="19.5" fill="#f2f2f2" text-anchor="start" textLength="73.5" lengthAdjust="spacingAndGlyphs">0,3344</text>
<text x="1058.1" y="869.5" font-size="19.5" fill="#f2f2f2" text-anchor="start" textLength="73.5" lengthAdjust="spacingAndGlyphs">0,3564</text>
<text x="1173.5" y="869.5" font-size="19.5" fill="#f2f2f2" text-anchor="start" textLength="73.5" lengthAdjust="spacingAndGlyphs">0,3773</text>
<text x="1289.3" y="869.5" font-size="19.5" fill="#f2f2f2" text-anchor="start" textLength="73.5" lengthAdjust="spacingAndGlyphs">0,3969</text>
<text x="1404.6" y="869.5" font-size="19.5" fill="#f2f2f2" text-anchor="start" textLength="73.5" lengthAdjust="spacingAndGlyphs">0,4193</text>
<rect x="744.9" y="878.20" width="767.8000000000001" height="30.20" fill="#3d3d3d"/>
<rect x="744.9" y="878.20" width="21.5" height="30.20" fill="url(#gLc)"/>
<text x="773.3" y="899.7" font-size="19.5" fill="#f2f2f2" text-anchor="start" textLength="154.5" lengthAdjust="spacingAndGlyphs">Target y:CIE31</text>
<text x="943.1" y="899.7" font-size="19.5" fill="#f2f2f2" text-anchor="start" textLength="73.5" lengthAdjust="spacingAndGlyphs">0,3648</text>
<text x="1058.1" y="899.7" font-size="19.5" fill="#f2f2f2" text-anchor="start" textLength="73.5" lengthAdjust="spacingAndGlyphs">0,4013</text>
<text x="1173.5" y="899.7" font-size="19.5" fill="#f2f2f2" text-anchor="start" textLength="73.5" lengthAdjust="spacingAndGlyphs">0,4358</text>
<text x="1289.3" y="899.7" font-size="19.5" fill="#f2f2f2" text-anchor="start" textLength="73.5" lengthAdjust="spacingAndGlyphs">0,4682</text>
<text x="1404.6" y="899.7" font-size="19.5" fill="#f2f2f2" text-anchor="start" textLength="73.5" lengthAdjust="spacingAndGlyphs">0,5053</text>
<rect x="744.9" y="908.40" width="767.8000000000001" height="30.20" fill="#868686"/>
<rect x="744.9" y="908.40" width="21.5" height="30.20" fill="url(#gLc)"/>
<text x="773.3" y="929.9" font-size="19.5" fill="#f2f2f2" text-anchor="start" textLength="89.5" lengthAdjust="spacingAndGlyphs">Target Y</text>
<text x="943.1" y="929.9" font-size="19.5" fill="#f2f2f2" text-anchor="start" textLength="100.5" lengthAdjust="spacingAndGlyphs">202,3769</text>
<text x="1058.1" y="929.9" font-size="19.5" fill="#f2f2f2" text-anchor="start" textLength="100.5" lengthAdjust="spacingAndGlyphs">198,8246</text>
<text x="1173.5" y="929.9" font-size="19.5" fill="#f2f2f2" text-anchor="start" textLength="100.5" lengthAdjust="spacingAndGlyphs">196,0952</text>
<text x="1289.3" y="929.9" font-size="19.5" fill="#f2f2f2" text-anchor="start" textLength="100.5" lengthAdjust="spacingAndGlyphs">193,9531</text>
<text x="1404.6" y="929.9" font-size="19.5" fill="#f2f2f2" text-anchor="start" textLength="100.5" lengthAdjust="spacingAndGlyphs">191,8822</text>
<text x="943.1" y="747.6" font-size="19" fill="#f4f4f4" text-anchor="start" textLength="44" lengthAdjust="spacingAndGlyphs" font-weight="bold">20%</text>
<text x="1058.1" y="747.6" font-size="19" fill="#f4f4f4" text-anchor="start" textLength="44" lengthAdjust="spacingAndGlyphs" font-weight="bold">40%</text>
<text x="1173.5" y="747.6" font-size="19" fill="#f4f4f4" text-anchor="start" textLength="44" lengthAdjust="spacingAndGlyphs" font-weight="bold">60%</text>
<text x="1289.3" y="747.6" font-size="19" fill="#f4f4f4" text-anchor="start" textLength="44" lengthAdjust="spacingAndGlyphs" font-weight="bold">80%</text>
<text x="1404.6" y="747.6" font-size="19" fill="#f4f4f4" text-anchor="start" textLength="56" lengthAdjust="spacingAndGlyphs" font-weight="bold">100%</text>
<defs><linearGradient id="gPB" x1="0" y1="0" x2="0" y2="1"><stop offset="0" stop-color="#ababab"/><stop offset="0.35" stop-color="#959595"/><stop offset="1" stop-color="#5c5c5c"/></linearGradient><linearGradient id="gSel" x1="0" y1="0" x2="0" y2="1"><stop offset="0" stop-color="#161616"/><stop offset="1" stop-color="#3e3e3e"/></linearGradient><linearGradient id="gPan" x1="0" y1="0" x2="0" y2="1"><stop offset="0" stop-color="#4a4a4a"/><stop offset="1" stop-color="#2a2a2a"/></linearGradient><linearGradient id="gCB" x1="0" y1="0" x2="0" y2="1"><stop offset="0" stop-color="#b0b0b0"/><stop offset="1" stop-color="#6a6a6a"/></linearGradient><radialGradient id="gIco" cx="0.5" cy="0.8" r="0.7"><stop offset="0" stop-color="#b8b8b8"/><stop offset="1" stop-color="#7a7a7a"/></radialGradient></defs>
<rect x="0" y="968" width="1563" height="71" fill="#353535"/>
<rect x="1" y="968.75" width="51" height="72" rx="4" fill="url(#gPB)"/>
<circle cx="26.5" cy="979.4" r="9" fill="#8a8a8a"/>
<path d="M21.5,982 H31.5 L26.5,976.5Z" fill="#222"/>
<rect x="7" y="998" width="40" height="34.5" rx="4" fill="#ffff00" stroke="#d0d000" stroke-width="1"/>
<rect x="58.8" y="968.75" width="169.5" height="72" rx="4" fill="url(#gPB)"/>
<rect x="65.0" y="975" width="157.5" height="40.3" rx="4" fill="#c2c3a5" stroke="#8a8a70" stroke-width="0.8"/>
<text x="143.8" y="1032.8" font-size="11.5" fill="#262626" text-anchor="middle" font-weight="bold">20%</text>
<rect x="230.3" y="968.75" width="169.5" height="72" rx="4" fill="url(#gPB)"/>
<rect x="236.6" y="975" width="157.5" height="40.3" rx="4" fill="#c3c388" stroke="#8a8a70" stroke-width="0.8"/>
<text x="315.4" y="1032.8" font-size="11.5" fill="#262626" text-anchor="middle" font-weight="bold">40%</text>
<rect x="401.9" y="968.75" width="169.5" height="72" rx="4" fill="url(#gPB)"/>
<rect x="408.2" y="975" width="157.5" height="40.3" rx="4" fill="#c2c16a" stroke="#8a8a70" stroke-width="0.8"/>
<text x="486.9" y="1032.8" font-size="11.5" fill="#262626" text-anchor="middle" font-weight="bold">60%</text>
<rect x="573.5" y="968.75" width="169.5" height="72" rx="4" fill="url(#gPB)"/>
<rect x="579.8" y="975" width="157.5" height="40.3" rx="4" fill="#c3c353" stroke="#8a8a70" stroke-width="0.8"/>
<text x="658.5" y="1032.8" font-size="11.5" fill="#262626" text-anchor="middle" font-weight="bold">80%</text>
<rect x="745.4" y="968.75" width="169.8" height="72" rx="4" fill="url(#gSel)"/>
<rect x="750.6" y="974" width="159.4" height="41.6" rx="4" fill="#c8c400"/>
<text x="830.8" y="1032.8" font-size="11.5" fill="#ffffff" text-anchor="middle" font-weight="bold">100%</text>
<rect x="915.2" y="968.5" width="660" height="71" fill="url(#gPan)"/>
<rect x="0" y="1037.6" width="1563" height="1.5" fill="#2a2a2a"/>
<rect x="1563" y="968.5" width="357" height="71" fill="#262626"/>
<rect x="1563.3" y="969.2" width="54" height="20" rx="4" fill="url(#gCB)"/>
<circle cx="1590.3" cy="978.5" r="8" fill="#8a8a8a"/>
<path d="M1585.5,981 H1595 L1590.3,976Z" fill="#222"/>
<rect x="1563.3" y="991" width="54" height="47" rx="4" fill="url(#gCB)"/>
<rect x="1573.8" y="997.2" width="33" height="33" rx="4" fill="#c4c4c4" stroke="#1e1e1e" stroke-width="2.2"/>
<rect x="1583" y="1006.4" width="15.3" height="15.2" fill="#0a0a0a"/>
<rect x="1618.6" y="969.2" width="51.8" height="33.2" fill="url(#gCB)"/>
<circle cx="1644.5" cy="986.1" r="10.9" fill="url(#gIco)"/>
<rect x="1671.6" y="969.2" width="49.7" height="33.2" fill="url(#gCB)"/>
<circle cx="1696.4" cy="986.1" r="10.9" fill="url(#gIco)"/>
<rect x="1722.5" y="969.2" width="49.1" height="33.2" fill="url(#gCB)"/>
<circle cx="1747.0" cy="986.1" r="10.9" fill="url(#gIco)"/>
<rect x="1772.8" y="969.2" width="50.1" height="33.2" fill="url(#gCB)"/>
<circle cx="1797.8" cy="986.1" r="10.9" fill="url(#gIco)"/>
<rect x="1824.1" y="969.2" width="49.9" height="33.2" fill="url(#gCB)"/>
<circle cx="1849.0" cy="986.1" r="10.9" fill="url(#gIco)"/>
<rect x="1874" y="969.2" width="46" height="33.2" fill="#2e2e2e"/>
<circle cx="1900.5" cy="985.7" r="11" fill="#262626"/>
<rect x="1640" y="981.8" width="9.2" height="8.2" fill="#2a2a2a"/>
<path d="M1693,980.5 L1702,986.5 L1693,992.5Z" fill="#2a2a2a"/>
<path d="M1743,980 h-2.4 v12.5 h2.4 M1752.8,980 h2.4 v12.5 h-2.4" fill="none" stroke="#2a2a2a" stroke-width="1.8"/><circle cx="1746" cy="986" r="0.9" fill="#2a2a2a"/><circle cx="1750" cy="986" r="0.9" fill="#2a2a2a"/>
<path d="M1798,986 C1795,982 1791,982 1791,986 C1791,990 1795,990 1798,986 C1801,982 1805,982 1805,986 C1805,990 1801,990 1798,986Z" fill="none" stroke="#2a2a2a" stroke-width="1.8"/>
<path d="M1843,983.5 A6,6 0 0 1 1854,983 M1855,988.5 A6,6 0 0 1 1844,989" fill="none" stroke="#2a2a2a" stroke-width="2"/><path d="M1851.5,979.5 L1855.5,983.5 L1850.5,984.5Z M1846.5,992.5 L1842.5,988.5 L1847.5,987.5Z" fill="#2a2a2a"/>
<rect x="1618.6" y="1003.5" width="153.6" height="35" rx="3" fill="url(#gCB)"/>
<rect x="1773.4" y="1003.5" width="150" height="35" rx="3" fill="url(#gCB)"/>
<circle cx="1653" cy="1020.7" r="10.5" fill="url(#gIco)"/>
<circle cx="1894.2" cy="1020.7" r="10.5" fill="url(#gIco)"/>
<path d="M1655,1015 L1649.5,1021 L1655,1027 M1659,1015 L1653.5,1021 L1659,1027" fill="none" stroke="#333" stroke-width="1.8"/>
<path d="M1890.5,1015 L1896,1021 L1890.5,1027 M1894.5,1015 L1900,1021 L1894.5,1027" fill="none" stroke="#333" stroke-width="1.8"/>
<text x="1683.9" y="1030" font-size="25" fill="#2a2a2a" text-anchor="start" textLength="57" lengthAdjust="spacingAndGlyphs" font-weight="bold">Back</text>
<text x="1804.8" y="1030" font-size="25" fill="#2a2a2a" text-anchor="start" textLength="58.5" lengthAdjust="spacingAndGlyphs" font-weight="bold">Next</text>
</svg>
<canvas id="cie" width="692" height="525" style="left:1150px;top:146px;width:692px;height:525px"></canvas>
<canvas id="inset" width="233" height="197" style="left:1601px;top:154px;width:233px;height:197px"></canvas>
<svg width="1920" height="1039" viewBox="0 0 1920 1039">
<rect x="1453.0" y="456.7" width="14" height="14" fill="#ffffff" fill-opacity="0.12" stroke="#f4f4f4" stroke-width="2"/>
<rect x="1508.0" y="456.7" width="14" height="14" fill="#ffffff" fill-opacity="0.12" stroke="#f4f4f4" stroke-width="2"/>
<rect x="1557.2" y="456.7" width="14" height="14" fill="#ffffff" fill-opacity="0.12" stroke="#f4f4f4" stroke-width="2"/>
<rect x="1608.8" y="456.7" width="14" height="14" fill="#ffffff" fill-opacity="0.12" stroke="#f4f4f4" stroke-width="2"/>
<rect x="1668.3" y="456.7" width="14" height="14" fill="#ffffff" fill-opacity="0.12" stroke="#f4f4f4" stroke-width="2"/>
<rect x="1389.0" y="288.6" width="14" height="14" fill="#ffffff" fill-opacity="0.12" stroke="#f4f4f4" stroke-width="2"/>
<rect x="1391.9" y="325.2" width="14" height="14" fill="#ffffff" fill-opacity="0.12" stroke="#f4f4f4" stroke-width="2"/>
<rect x="1393.5" y="358.7" width="14" height="14" fill="#ffffff" fill-opacity="0.12" stroke="#f4f4f4" stroke-width="2"/>
<rect x="1396.2" y="390.0" width="14" height="14" fill="#ffffff" fill-opacity="0.12" stroke="#f4f4f4" stroke-width="2"/>
<rect x="1397.7" y="422.8" width="14" height="14" fill="#ffffff" fill-opacity="0.12" stroke="#f4f4f4" stroke-width="2"/>
<rect x="1265.5" y="624.5" width="14" height="14" fill="#ffffff" fill-opacity="0.12" stroke="#f4f4f4" stroke-width="2"/>
<rect x="1295.0" y="588.5" width="14" height="14" fill="#ffffff" fill-opacity="0.12" stroke="#f4f4f4" stroke-width="2"/>
<rect x="1320.8" y="556.6" width="14" height="14" fill="#ffffff" fill-opacity="0.12" stroke="#f4f4f4" stroke-width="2"/>
<rect x="1347.0" y="525.0" width="14" height="14" fill="#ffffff" fill-opacity="0.12" stroke="#f4f4f4" stroke-width="2"/>
<rect x="1373.0" y="491.7" width="14" height="14" fill="#ffffff" fill-opacity="0.12" stroke="#f4f4f4" stroke-width="2"/>
<rect x="1327.7" y="458.0" width="14" height="14" fill="#ffffff" fill-opacity="0.12" stroke="#f4f4f4" stroke-width="2"/>
<rect x="1341.9" y="458.0" width="14" height="14" fill="#ffffff" fill-opacity="0.12" stroke="#f4f4f4" stroke-width="2"/>
<rect x="1357.9" y="458.0" width="14" height="14" fill="#ffffff" fill-opacity="0.12" stroke="#f4f4f4" stroke-width="2"/>
<rect x="1377.2" y="458.0" width="14" height="14" fill="#ffffff" fill-opacity="0.12" stroke="#f4f4f4" stroke-width="2"/>
<rect x="1401.6" y="480.2" width="14" height="14" fill="#ffffff" fill-opacity="0.12" stroke="#f4f4f4" stroke-width="2"/>
<rect x="1403.1" y="503.3" width="14" height="14" fill="#ffffff" fill-opacity="0.12" stroke="#f4f4f4" stroke-width="2"/>
<rect x="1403.5" y="521.5" width="14" height="14" fill="#ffffff" fill-opacity="0.12" stroke="#f4f4f4" stroke-width="2"/>
<rect x="1405.0" y="543.7" width="14" height="14" fill="#ffffff" fill-opacity="0.12" stroke="#f4f4f4" stroke-width="2"/>
<rect x="1406.4" y="566.8" width="14" height="14" fill="#ffffff" fill-opacity="0.12" stroke="#f4f4f4" stroke-width="2"/>
<rect x="1488.2" y="347.7" width="14" height="14" fill="#ffffff" fill-opacity="0.12" stroke="#f4f4f4" stroke-width="2"/>
<rect x="1468.9" y="371.2" width="14" height="14" fill="#ffffff" fill-opacity="0.12" stroke="#f4f4f4" stroke-width="2"/>
<rect x="1453.1" y="391.6" width="14" height="14" fill="#ffffff" fill-opacity="0.12" stroke="#f4f4f4" stroke-width="2"/>
<rect x="1435.4" y="411.6" width="14" height="14" fill="#ffffff" fill-opacity="0.12" stroke="#f4f4f4" stroke-width="2"/>
<rect x="1417.9" y="434.9" width="14" height="14" fill="#ffffff" fill-opacity="0.12" stroke="#f4f4f4" stroke-width="2"/>
<rect x="1400.3" y="458" width="14" height="14" fill="none" stroke="#000" stroke-width="2"/>
<circle cx="1465.8" cy="465.0" r="4.8" fill="#c07a7a" fill-opacity="0.88" stroke="#141414" stroke-width="1.5"/>
<circle cx="1520.8" cy="466.7" r="4.8" fill="#c07a7a" fill-opacity="0.88" stroke="#141414" stroke-width="1.5"/>
<circle cx="1571.3" cy="465.0" r="4.8" fill="#c07a7a" fill-opacity="0.88" stroke="#141414" stroke-width="1.5"/>
<circle cx="1648.0" cy="470.8" r="4.8" fill="#c07a7a" fill-opacity="0.88" stroke="#141414" stroke-width="1.5"/>
<circle cx="1669.7" cy="463.7" r="4.8" fill="#c07a7a" fill-opacity="0.88" stroke="#141414" stroke-width="1.5"/>
<circle cx="1394.1" cy="297.0" r="4.8" fill="#88a880" fill-opacity="0.88" stroke="#141414" stroke-width="1.5"/>
<circle cx="1392.0" cy="300.0" r="4.8" fill="#88a880" fill-opacity="0.88" stroke="#141414" stroke-width="1.5"/>
<circle cx="1378.7" cy="337.4" r="4.8" fill="#88a880" fill-opacity="0.88" stroke="#141414" stroke-width="1.5"/>
<circle cx="1388.7" cy="379.7" r="4.8" fill="#88a880" fill-opacity="0.88" stroke="#141414" stroke-width="1.5"/>
<circle cx="1397.6" cy="424.0" r="4.8" fill="#88a880" fill-opacity="0.88" stroke="#141414" stroke-width="1.5"/>
<circle cx="1278.9" cy="630.6" r="4.8" fill="#7a7ab4" fill-opacity="0.88" stroke="#141414" stroke-width="1.5"/>
<circle cx="1297.2" cy="605.5" r="4.8" fill="#7a7ab4" fill-opacity="0.88" stroke="#141414" stroke-width="1.5"/>
<circle cx="1322.2" cy="572.4" r="4.8" fill="#7a7ab4" fill-opacity="0.88" stroke="#141414" stroke-width="1.5"/>
<circle cx="1346.6" cy="540.5" r="4.8" fill="#7a7ab4" fill-opacity="0.88" stroke="#141414" stroke-width="1.5"/>
<circle cx="1375.5" cy="502.6" r="4.8" fill="#7a7ab4" fill-opacity="0.88" stroke="#141414" stroke-width="1.5"/>
<circle cx="1334.1" cy="465.5" r="4.8" fill="#80b0b0" fill-opacity="0.88" stroke="#141414" stroke-width="1.5"/>
<circle cx="1348.2" cy="465.5" r="4.8" fill="#80b0b0" fill-opacity="0.88" stroke="#141414" stroke-width="1.5"/>
<circle cx="1366.8" cy="465.5" r="4.8" fill="#80b0b0" fill-opacity="0.88" stroke="#141414" stroke-width="1.5"/>
<circle cx="1386.1" cy="465.5" r="4.8" fill="#80b0b0" fill-opacity="0.88" stroke="#141414" stroke-width="1.5"/>
<circle cx="1407.8" cy="491.0" r="4.8" fill="#b47ab4" fill-opacity="0.88" stroke="#141414" stroke-width="1.5"/>
<circle cx="1407.8" cy="518.5" r="4.8" fill="#b47ab4" fill-opacity="0.88" stroke="#141414" stroke-width="1.5"/>
<circle cx="1409.2" cy="539.1" r="4.8" fill="#b47ab4" fill-opacity="0.88" stroke="#141414" stroke-width="1.5"/>
<circle cx="1409.2" cy="562.2" r="4.8" fill="#b47ab4" fill-opacity="0.88" stroke="#141414" stroke-width="1.5"/>
<circle cx="1409.2" cy="574.7" r="4.8" fill="#b47ab4" fill-opacity="0.88" stroke="#141414" stroke-width="1.5"/>
<circle cx="1485.5" cy="351.8" r="4.8" fill="#b0b074" fill-opacity="0.88" stroke="#141414" stroke-width="1.5"/>
<circle cx="1482.7" cy="357.6" r="4.8" fill="#b0b074" fill-opacity="0.88" stroke="#141414" stroke-width="1.5"/>
<circle cx="1464.0" cy="385.1" r="4.8" fill="#b0b074" fill-opacity="0.88" stroke="#141414" stroke-width="1.5"/>
<circle cx="1445.1" cy="411.5" r="4.8" fill="#b0b074" fill-opacity="0.88" stroke="#141414" stroke-width="1.5"/>
<circle cx="1424.9" cy="439.0" r="4.8" fill="#b0b074" fill-opacity="0.88" stroke="#141414" stroke-width="1.5"/>
<circle cx="1404.8" cy="465" r="4.8" fill="#ffffff" stroke="#141414" stroke-width="1.5"/>
<rect x="1600.8" y="153.7" width="233.5" height="197.3" fill="none" stroke="#9a9a9a" stroke-width="1.5"/>
<rect x="1708.2" y="243.3" width="15.4" height="15.4" fill="none" stroke="#ffffff" stroke-width="2"/>
<circle cx="1665.6" cy="234" r="4.9" fill="#b0b060" fill-opacity="0.9" stroke="#141414" stroke-width="1.5"/>
<circle cx="1650.7" cy="271.7" r="4.9" fill="#b8b870" fill-opacity="0.9" stroke="#141414" stroke-width="1.5"/>
</svg>
<script>
(function(){
function col(x,y,dim){
  if(y<=0.0001) y=0.0001;
  var X=x/y, Z=(1-x-y)/y;
  var r=3.2406*X-1.5372-0.4986*Z, g=-0.9689*X+1.8758+0.0415*Z, b=0.0557*X-0.2040+1.0570*Z;
  var ins = (r>=0&&g>=0&&b>=0);
  if(r<0)r=0; if(g<0)g=0; if(b<0)b=0;
  var m=Math.max(r,g,b)||1; r/=m; g/=m; b/=m;
  var k = ins?1:dim;
  return [r*255*k, g*255*k, b*255*k];
}
function paint(id, L, Tp, Wd, Ht, fx, fy, dim, locus){
  var c=document.getElementById(id); if(!c||!c.getContext) return;
  var ctx=c.getContext('2d');
  var off=document.createElement('canvas'); off.width=Wd; off.height=Ht;
  var oc=off.getContext('2d'); var im=oc.createImageData(Wd,Ht); var d=im.data;
  var SS=3;
  for(var j=0;j<Ht;j++){ for(var i=0;i<Wd;i++){
    var R=0,G=0,B=0;
    for(var a=0;a<SS;a++){ for(var bb=0;bb<SS;bb++){
      var px=L+i+(a+0.5)/SS, py=Tp+j+(bb+0.5)/SS;
      var cc=col(fx(px),fy(py),dim); R+=cc[0];G+=cc[1];B+=cc[2];
    }}
    var n=SS*SS, p=(j*Wd+i)*4;
    d[p]=R/n; d[p+1]=G/n; d[p+2]=B/n; d[p+3]=255;
  }}
  oc.putImageData(im,0,0);
  if(locus){
    ctx.fillStyle=ctx.createPattern(off,'no-repeat');
    ctx.beginPath();
    for(var q=0;q<locus.length;q++){
      var X=(1150.2+822.3*locus[q][0])-L, Y=(670-620.5*locus[q][1])-Tp;
      if(q==0)ctx.moveTo(X,Y); else ctx.lineTo(X,Y);
    }
    ctx.closePath(); ctx.fill();
  } else {
    ctx.drawImage(off,0,0);
  }
}
var LOC=[[0.1741,0.005],[0.17405,0.00498],[0.17398,0.00495],[0.17391,0.00492],[0.17382,0.00488],[0.17372,0.00485],[0.1736,0.00482],[0.17346,0.0048],[0.1733,0.0048],[0.17312,0.0048],[0.17292,0.0048],[0.17269,0.00481],[0.17246,0.00483],[0.1722,0.00486],[0.17194,0.00491],[0.17167,0.00499],[0.1714,0.0051],[0.17113,0.00524],[0.17086,0.00539],[0.17059,0.00557],[0.17031,0.00577],[0.17001,0.006],[0.16968,0.00626],[0.16931,0.00656],[0.1689,0.0069],[0.16846,0.00728],[0.16799,0.00768],[0.1675,0.00812],[0.16698,0.00859],[0.16642,0.0091],[0.1658,0.00965],[0.16513,0.01025],[0.1644,0.0109],[0.16362,0.01158],[0.16279,0.01228],[0.16193,0.01302],[0.16101,0.0138],[0.16002,0.01465],[0.15896,0.01557],[0.15783,0.01658],[0.1566,0.0177],[0.1553,0.01884],[0.15396,0.01996],[0.15255,0.02111],[0.15106,0.02237],[0.14947,0.02379],[0.14778,0.02545],[0.14596,0.02739],[0.144,0.0297],[0.14195,0.03212],[0.13984,0.0345],[0.13764,0.037],[0.13531,0.03982],[0.13283,0.04313],[0.13015,0.04711],[0.12725,0.05194],[0.1241,0.0578],[0.12055,0.06497],[0.11657,0.0734],[0.1123,0.08276],[0.10787,0.09276],[0.10342,0.10306],[0.09909,0.11336],[0.095,0.12335],[0.0913,0.1327],[0.08799,0.14135],[0.08495,0.14957],[0.08211,0.15755],[0.07941,0.16549],[0.07678,0.17358],[0.07416,0.18201],[0.07149,0.19099],[0.0687,0.2007],[0.06581,0.21107],[0.06289,0.22188],[0.05995,0.23311],[0.05701,0.24474],[0.05407,0.25677],[0.05114,0.26916],[0.04825,0.28191],[0.0454,0.295],[0.04254,0.30854],[0.03965,0.32259],[0.03676,0.33707],[0.0339,0.35189],[0.03111,0.36695],[0.02842,0.38216],[0.02587,0.39744],[0.0235,0.4127],[0.02125,0.42807],[0.01908,0.44369],[0.01701,0.45949],[0.01506,0.47539],[0.01326,0.49131],[0.01164,0.50717],[0.01021,0.52289],[0.009,0.5384],[0.00802,0.55385],[0.00724,0.56938],[0.00666,0.5849],[0.00625,0.60029],[0.006,0.61547],[0.00591,0.63033],[0.00594,0.64478],[0.0061,0.6587],[0.0064,0.67238],[0.00687,0.68604],[0.0075,0.69948],[0.00826,0.7125],[0.00915,0.72491],[0.01015,0.73651],[0.01123,0.7471],[0.0124,0.7565],[0.01367,0.76453],[0.01508,0.7713],[0.0166,0.77705],[0.01821,0.782],[0.01991,0.78638],[0.02167,0.79042],[0.02347,0.79435],[0.0253,0.7984],[0.02704,0.8024],[0.02867,0.80607],[0.03028,0.80945],[0.03198,0.81257],[0.03388,0.81549],[0.03608,0.81824],[0.03868,0.82086],[0.0418,0.8234],[0.04547,0.82594],[0.0496,0.8285],[0.05411,0.83097],[0.05894,0.83324],[0.064,0.83524],[0.06922,0.83684],[0.07451,0.83796],[0.0798,0.8385],[0.08507,0.83847],[0.09037,0.83798],[0.09577,0.83706],[0.10132,0.83573],[0.10706,0.83401],[0.11306,0.83193],[0.11935,0.82952],[0.126,0.8268],[0.13309,0.82376],[0.14062,0.82036],[0.14849,0.81661],[0.15658,0.81251],[0.16481,0.80807],[0.17307,0.80328],[0.18127,0.79816],[0.1893,0.7927],[0.19731,0.78668],[0.20546,0.77999],[0.21367,0.77283],[0.22184,0.7654],[0.22991,0.75789],[0.23778,0.75048],[0.24537,0.74339],[0.2526,0.7368],[0.2595,0.73062],[0.26617,0.72461],[0.27261,0.71879],[0.27883,0.71314],[0.28483,0.70767],[0.29062,0.70238],[0.29621,0.69725],[0.3016,0.6923],[0.3067,0.6876],[0.31146,0.68319],[0.31596,0.67901],[0.32027,0.67497],[0.32449,0.67101],[0.32868,0.66706],[0.33292,0.66305],[0.3373,0.6589],[0.34153,0.65489],[0.34542,0.6512],[0.34917,0.64763],[0.35299,0.64398],[0.35709,0.64004],[0.36167,0.63561],[0.36694,0.6305],[0.3731,0.6245],[0.38031,0.61746],[0.38844,0.6095],[0.39726,0.60084],[0.40656,0.59171],[0.41612,0.58231],[0.42571,0.57286],[0.43511,0.56359],[0.4441,0.5547],[0.45281,0.54607],[0.46152,0.53742],[0.47019,0.52879],[0.47882,0.52019],[0.48738,0.51165],[0.49586,0.50318],[0.50424,0.49483],[0.5125,0.4866],[0.52068,0.47845],[0.52883,0.47035],[0.53691,0.46231],[0.54489,0.45438],[0.55274,0.44657],[0.56042,0.43891],[0.56792,0.43145],[0.5752,0.4242],[0.58229,0.41714],[0.58922,0.41021],[0.59599,0.40345],[0.60259,0.39686],[0.60901,0.39045],[0.61522,0.38425],[0.62122,0.37826],[0.627,0.3725],[0.63256,0.36697],[0.63792,0.36165],[0.64308,0.35653],[0.64803,0.35163],[0.65278,0.34692],[0.65733,0.34242],[0.66167,0.33811],[0.6658,0.334],[0.6697,0.33011],[0.67336,0.32645],[0.67681,0.32301],[0.68005,0.31976],[0.68312,0.31669],[0.68604,0.31376],[0.68882,0.31098],[0.6915,0.3083],[0.69403,0.30578],[0.69638,0.30344],[0.69856,0.30127],[0.70061,0.29924],[0.70255,0.29732],[0.70439,0.29549],[0.70617,0.29372],[0.7079,0.292],[0.70957,0.29033],[0.71114,0.28876],[0.71263,0.28727],[0.71404,0.28586],[0.71537,0.28453],[0.71664,0.28326],[0.71784,0.28205],[0.719,0.2809],[0.72008,0.27983],[0.72106,0.27886],[0.72197,0.27797],[0.72282,0.27713],[0.72363,0.27634],[0.72442,0.27556],[0.7252,0.27479],[0.726,0.274],[0.72682,0.27318],[0.72765,0.27236],[0.72847,0.27154],[0.72927,0.27074],[0.73004,0.26997],[0.73076,0.26925],[0.73141,0.26859],[0.732,0.268],[0.73251,0.26749],[0.73297,0.26703],[0.73337,0.26663],[0.73373,0.26627],[0.73403,0.26597],[0.73429,0.26571],[0.73451,0.26549],[0.7347,0.2653]];
try{
paint('cie',1150,146,692,525,function(px){return (px-1150.2)/822.3;},function(py){return (670-py)/620.5;},0.61,LOC);
paint('inset',1601,154,233,197,function(px){return 0.4193+(px-1715.9)/4545;},function(py){return 0.5053-(py-251)/3788;},0.61,null);
}catch(e){}
})();
</script></body></html>
